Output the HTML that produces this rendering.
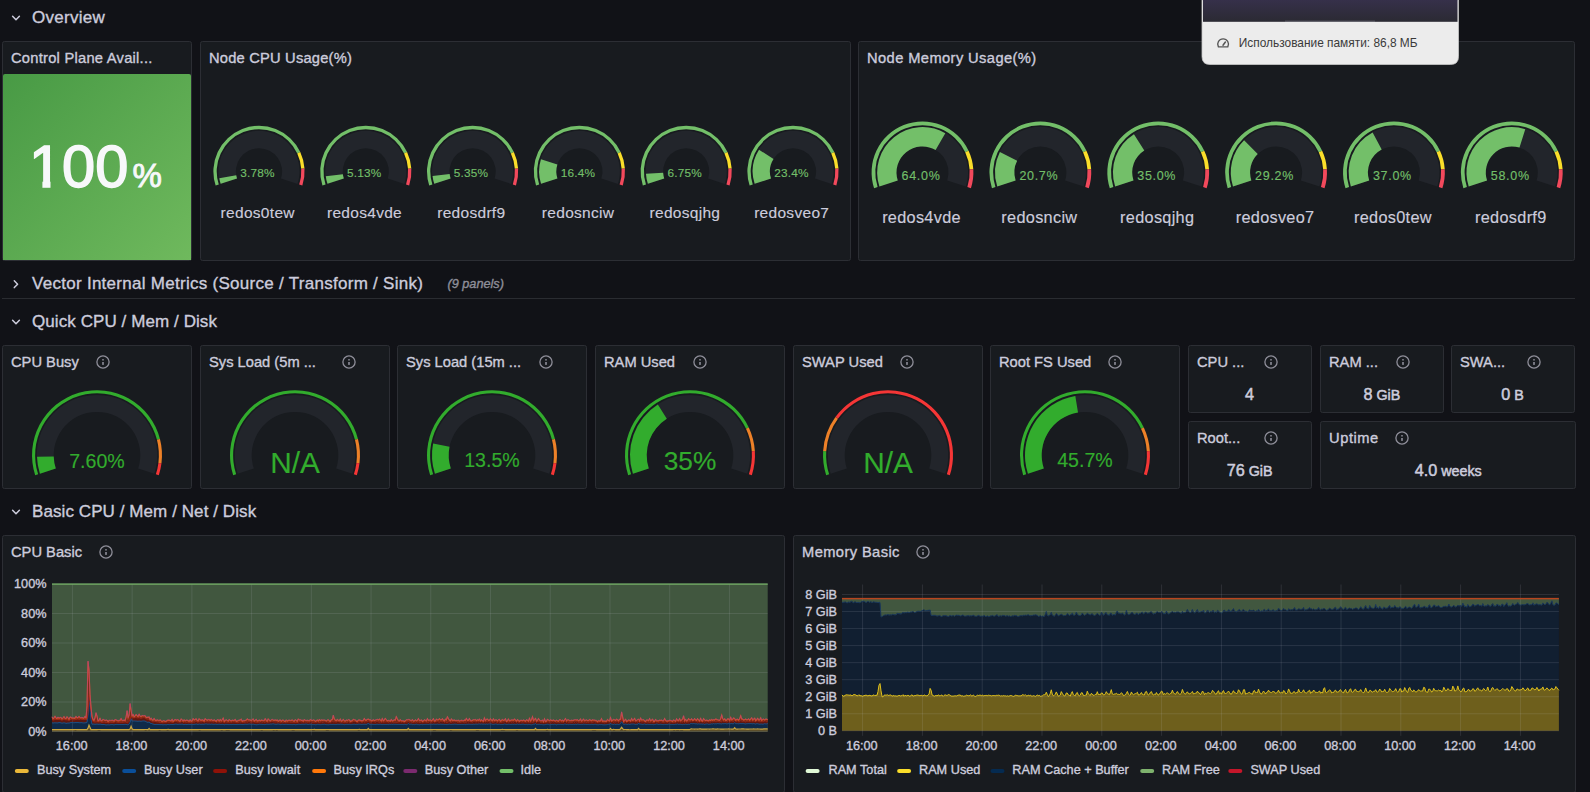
<!DOCTYPE html>
<html><head><meta charset="utf-8"><style>
html,body{margin:0;padding:0;width:1590px;height:792px;overflow:hidden;background:#111217}
text{font-family:"Liberation Sans", sans-serif}
</style></head><body>
<svg width="1590" height="792" viewBox="0 0 1590 792" style="position:absolute;left:0;top:0"><rect width="1590" height="792" fill="#111217"/><path d="M12.6 16.2 L16 19.8 L19.4 16.2" fill="none" stroke="#ccccdc" stroke-width="1.5" stroke-linecap="round" stroke-linejoin="round"/><text x="32.00" y="23.00" text-anchor="start" style="font-size:17px;fill:#ccccdc;stroke:#ccccdc;stroke-width:0.35px;letter-spacing:0.28px" >Overview</text><rect x="2.50" y="41.50" width="189.00" height="219.00" rx="2" fill="#181b1f" stroke="#2c2e34" stroke-width="1"/><defs><linearGradient id="gst" gradientUnits="userSpaceOnUse" x1="3" y1="74" x2="191" y2="260"><stop offset="0" stop-color="#489a45"/><stop offset="1" stop-color="#6fb95d"/></linearGradient></defs><path d="M3 76 Q3 74 5 74 L189 74 Q191 74 191 76 L191 260 L3 260 Z" fill="url(#gst)"/><text x="11.00" y="63.00" text-anchor="start" style="font-size:14.7px;fill:#ccccdc;stroke:#ccccdc;stroke-width:0.35px;letter-spacing:0.25px" >Control Plane Avail...</text><text x="29.00" y="187.30" text-anchor="start" style="font-size:59.5px;fill:#f7f8fa;stroke:#f7f8fa;stroke-width:1.6px" >100</text><rect x="30" y="180.8" width="12.4" height="9" fill="url(#gst)"/><rect x="50.5" y="180.8" width="11" height="9" fill="url(#gst)"/><text x="132.50" y="187.30" text-anchor="start" style="font-size:33px;fill:#f7f8fa;stroke:#f7f8fa;stroke-width:0.9px" >%</text><rect x="200.50" y="41.50" width="650.00" height="219.00" rx="2" fill="#181b1f" stroke="#2c2e34" stroke-width="1"/><text x="209.00" y="63.00" text-anchor="start" style="font-size:14.7px;fill:#ccccdc;stroke:#ccccdc;stroke-width:0.35px;letter-spacing:0.2px" >Node CPU Usage(%)</text><path d="M220.39 183.95 A40.60 40.60 0 1 1 297.61 183.95 L280.97 178.54 A23.10 23.10 0 1 0 237.03 178.54Z" fill="#22252b"/><path d="M220.67 183.85 A40.30 40.30 0 0 1 219.29 178.28 L236.24 175.35 A23.10 23.10 0 0 0 237.03 178.54Z" fill="#73bf69"/><path d="M215.63 185.49 A45.60 45.60 0 0 1 300.26 151.98 L297.27 153.39 A42.30 42.30 0 0 0 218.77 184.47Z" fill="#73bf69"/><path d="M300.26 151.98 A45.60 45.60 0 0 1 304.51 168.54 L301.22 168.74 A42.30 42.30 0 0 0 297.27 153.39Z" fill="#fade2a"/><path d="M304.51 168.54 A45.60 45.60 0 0 1 302.37 185.49 L299.23 184.47 A42.30 42.30 0 0 0 301.22 168.74Z" fill="#f2495c"/><text x="257.50" y="176.70" text-anchor="middle" style="font-size:11.8px;fill:#73bf69;stroke:#73bf69;stroke-width:0.15px;letter-spacing:0.2px" >3.78%</text><text x="257.70" y="217.50" text-anchor="middle" style="font-size:15.5px;fill:#ccccdc;stroke:#ccccdc;stroke-width:0.15px;letter-spacing:0.3px" >redos0tew</text><path d="M327.19 183.95 A40.60 40.60 0 1 1 404.41 183.95 L387.77 178.54 A23.10 23.10 0 1 0 343.83 178.54Z" fill="#22252b"/><path d="M327.47 183.85 A40.30 40.30 0 0 1 325.79 176.25 L342.87 174.18 A23.10 23.10 0 0 0 343.83 178.54Z" fill="#73bf69"/><path d="M322.43 185.49 A45.60 45.60 0 0 1 407.06 151.98 L404.07 153.39 A42.30 42.30 0 0 0 325.57 184.47Z" fill="#73bf69"/><path d="M407.06 151.98 A45.60 45.60 0 0 1 411.31 168.54 L408.02 168.74 A42.30 42.30 0 0 0 404.07 153.39Z" fill="#fade2a"/><path d="M411.31 168.54 A45.60 45.60 0 0 1 409.17 185.49 L406.03 184.47 A42.30 42.30 0 0 0 408.02 168.74Z" fill="#f2495c"/><text x="364.30" y="176.70" text-anchor="middle" style="font-size:11.8px;fill:#73bf69;stroke:#73bf69;stroke-width:0.15px;letter-spacing:0.2px" >5.13%</text><text x="364.50" y="217.50" text-anchor="middle" style="font-size:15.5px;fill:#ccccdc;stroke:#ccccdc;stroke-width:0.15px;letter-spacing:0.3px" >redos4vde</text><path d="M433.99 183.95 A40.60 40.60 0 1 1 511.21 183.95 L494.57 178.54 A23.10 23.10 0 1 0 450.63 178.54Z" fill="#22252b"/><path d="M434.27 183.85 A40.30 40.30 0 0 1 432.55 175.92 L449.65 173.99 A23.10 23.10 0 0 0 450.63 178.54Z" fill="#73bf69"/><path d="M429.23 185.49 A45.60 45.60 0 0 1 513.86 151.98 L510.87 153.39 A42.30 42.30 0 0 0 432.37 184.47Z" fill="#73bf69"/><path d="M513.86 151.98 A45.60 45.60 0 0 1 518.11 168.54 L514.82 168.74 A42.30 42.30 0 0 0 510.87 153.39Z" fill="#fade2a"/><path d="M518.11 168.54 A45.60 45.60 0 0 1 515.97 185.49 L512.83 184.47 A42.30 42.30 0 0 0 514.82 168.74Z" fill="#f2495c"/><text x="471.10" y="176.70" text-anchor="middle" style="font-size:11.8px;fill:#73bf69;stroke:#73bf69;stroke-width:0.15px;letter-spacing:0.2px" >5.35%</text><text x="471.30" y="217.50" text-anchor="middle" style="font-size:15.5px;fill:#ccccdc;stroke:#ccccdc;stroke-width:0.15px;letter-spacing:0.3px" >redosdrf9</text><path d="M540.79 183.95 A40.60 40.60 0 1 1 618.01 183.95 L601.37 178.54 A23.10 23.10 0 1 0 557.43 178.54Z" fill="#22252b"/><path d="M541.07 183.85 A40.30 40.30 0 0 1 540.95 159.33 L557.36 164.48 A23.10 23.10 0 0 0 557.43 178.54Z" fill="#73bf69"/><path d="M536.03 185.49 A45.60 45.60 0 0 1 620.66 151.98 L617.67 153.39 A42.30 42.30 0 0 0 539.17 184.47Z" fill="#73bf69"/><path d="M620.66 151.98 A45.60 45.60 0 0 1 624.91 168.54 L621.62 168.74 A42.30 42.30 0 0 0 617.67 153.39Z" fill="#fade2a"/><path d="M624.91 168.54 A45.60 45.60 0 0 1 622.77 185.49 L619.63 184.47 A42.30 42.30 0 0 0 621.62 168.74Z" fill="#f2495c"/><text x="577.90" y="176.70" text-anchor="middle" style="font-size:11.8px;fill:#73bf69;stroke:#73bf69;stroke-width:0.15px;letter-spacing:0.2px" >16.4%</text><text x="578.10" y="217.50" text-anchor="middle" style="font-size:15.5px;fill:#ccccdc;stroke:#ccccdc;stroke-width:0.15px;letter-spacing:0.3px" >redosnciw</text><path d="M647.59 183.95 A40.60 40.60 0 1 1 724.81 183.95 L708.17 178.54 A23.10 23.10 0 1 0 664.23 178.54Z" fill="#22252b"/><path d="M647.87 183.85 A40.30 40.30 0 0 1 645.97 173.80 L663.14 172.78 A23.10 23.10 0 0 0 664.23 178.54Z" fill="#73bf69"/><path d="M642.83 185.49 A45.60 45.60 0 0 1 727.46 151.98 L724.47 153.39 A42.30 42.30 0 0 0 645.97 184.47Z" fill="#73bf69"/><path d="M727.46 151.98 A45.60 45.60 0 0 1 731.71 168.54 L728.42 168.74 A42.30 42.30 0 0 0 724.47 153.39Z" fill="#fade2a"/><path d="M731.71 168.54 A45.60 45.60 0 0 1 729.57 185.49 L726.43 184.47 A42.30 42.30 0 0 0 728.42 168.74Z" fill="#f2495c"/><text x="684.70" y="176.70" text-anchor="middle" style="font-size:11.8px;fill:#73bf69;stroke:#73bf69;stroke-width:0.15px;letter-spacing:0.2px" >6.75%</text><text x="684.90" y="217.50" text-anchor="middle" style="font-size:15.5px;fill:#ccccdc;stroke:#ccccdc;stroke-width:0.15px;letter-spacing:0.3px" >redosqjhg</text><path d="M754.39 183.95 A40.60 40.60 0 1 1 831.61 183.95 L814.97 178.54 A23.10 23.10 0 1 0 771.03 178.54Z" fill="#22252b"/><path d="M754.67 183.85 A40.30 40.30 0 0 1 759.03 149.72 L773.53 158.97 A23.10 23.10 0 0 0 771.03 178.54Z" fill="#73bf69"/><path d="M749.63 185.49 A45.60 45.60 0 0 1 834.26 151.98 L831.27 153.39 A42.30 42.30 0 0 0 752.77 184.47Z" fill="#73bf69"/><path d="M834.26 151.98 A45.60 45.60 0 0 1 838.51 168.54 L835.22 168.74 A42.30 42.30 0 0 0 831.27 153.39Z" fill="#fade2a"/><path d="M838.51 168.54 A45.60 45.60 0 0 1 836.37 185.49 L833.23 184.47 A42.30 42.30 0 0 0 835.22 168.74Z" fill="#f2495c"/><text x="791.50" y="176.70" text-anchor="middle" style="font-size:11.8px;fill:#73bf69;stroke:#73bf69;stroke-width:0.15px;letter-spacing:0.2px" >23.4%</text><text x="791.70" y="217.50" text-anchor="middle" style="font-size:15.5px;fill:#ccccdc;stroke:#ccccdc;stroke-width:0.15px;letter-spacing:0.3px" >redosveo7</text><rect x="858.50" y="41.50" width="716.00" height="219.00" rx="2" fill="#181b1f" stroke="#2c2e34" stroke-width="1"/><text x="867.00" y="63.00" text-anchor="start" style="font-size:14.7px;fill:#ccccdc;stroke:#ccccdc;stroke-width:0.35px;letter-spacing:0.4px" >Node Memory Usage(%)</text><path d="M879.13 186.49 A45.60 45.60 0 1 1 965.87 186.49 L947.23 180.43 A26.00 26.00 0 1 0 897.77 180.43Z" fill="#22252b"/><path d="M879.42 186.40 A45.30 45.30 0 0 1 945.31 133.26 L935.59 149.94 A26.00 26.00 0 0 0 897.77 180.43Z" fill="#73bf69"/><path d="M874.09 188.13 A50.90 50.90 0 0 1 968.56 150.73 L965.21 152.30 A47.20 47.20 0 0 0 877.61 186.99Z" fill="#73bf69"/><path d="M968.56 150.73 A50.90 50.90 0 0 1 973.30 169.20 L969.61 169.44 A47.20 47.20 0 0 0 965.21 152.30Z" fill="#fade2a"/><path d="M973.30 169.20 A50.90 50.90 0 0 1 970.91 188.13 L967.39 186.99 A47.20 47.20 0 0 0 969.61 169.44Z" fill="#f2495c"/><text x="921.00" y="179.50" text-anchor="middle" style="font-size:12.5px;fill:#73bf69;stroke:#73bf69;stroke-width:0.15px;letter-spacing:0.7px" >64.0%</text><text x="921.50" y="223.20" text-anchor="middle" style="font-size:16.3px;fill:#ccccdc;stroke:#ccccdc;stroke-width:0.15px;letter-spacing:0.3px" >redos4vde</text><path d="M996.99 186.49 A45.60 45.60 0 1 1 1083.73 186.49 L1065.09 180.43 A26.00 26.00 0 1 0 1015.63 180.43Z" fill="#22252b"/><path d="M997.28 186.40 A45.30 45.30 0 0 1 999.89 152.04 L1017.13 160.71 A26.00 26.00 0 0 0 1015.63 180.43Z" fill="#73bf69"/><path d="M991.95 188.13 A50.90 50.90 0 0 1 1086.42 150.73 L1083.07 152.30 A47.20 47.20 0 0 0 995.47 186.99Z" fill="#73bf69"/><path d="M1086.42 150.73 A50.90 50.90 0 0 1 1091.16 169.20 L1087.47 169.44 A47.20 47.20 0 0 0 1083.07 152.30Z" fill="#fade2a"/><path d="M1091.16 169.20 A50.90 50.90 0 0 1 1088.77 188.13 L1085.25 186.99 A47.20 47.20 0 0 0 1087.47 169.44Z" fill="#f2495c"/><text x="1038.86" y="179.50" text-anchor="middle" style="font-size:12.5px;fill:#73bf69;stroke:#73bf69;stroke-width:0.15px;letter-spacing:0.7px" >20.7%</text><text x="1039.36" y="223.20" text-anchor="middle" style="font-size:16.3px;fill:#ccccdc;stroke:#ccccdc;stroke-width:0.15px;letter-spacing:0.3px" >redosnciw</text><path d="M1114.85 186.49 A45.60 45.60 0 1 1 1201.59 186.49 L1182.95 180.43 A26.00 26.00 0 1 0 1133.49 180.43Z" fill="#22252b"/><path d="M1115.14 186.40 A45.30 45.30 0 0 1 1133.95 134.15 L1144.29 150.45 A26.00 26.00 0 0 0 1133.49 180.43Z" fill="#73bf69"/><path d="M1109.81 188.13 A50.90 50.90 0 0 1 1204.28 150.73 L1200.93 152.30 A47.20 47.20 0 0 0 1113.33 186.99Z" fill="#73bf69"/><path d="M1204.28 150.73 A50.90 50.90 0 0 1 1209.02 169.20 L1205.33 169.44 A47.20 47.20 0 0 0 1200.93 152.30Z" fill="#fade2a"/><path d="M1209.02 169.20 A50.90 50.90 0 0 1 1206.63 188.13 L1203.11 186.99 A47.20 47.20 0 0 0 1205.33 169.44Z" fill="#f2495c"/><text x="1156.72" y="179.50" text-anchor="middle" style="font-size:12.5px;fill:#73bf69;stroke:#73bf69;stroke-width:0.15px;letter-spacing:0.7px" >35.0%</text><text x="1157.22" y="223.20" text-anchor="middle" style="font-size:16.3px;fill:#ccccdc;stroke:#ccccdc;stroke-width:0.15px;letter-spacing:0.3px" >redosqjhg</text><path d="M1232.71 186.49 A45.60 45.60 0 1 1 1319.45 186.49 L1300.81 180.43 A26.00 26.00 0 1 0 1251.35 180.43Z" fill="#22252b"/><path d="M1233.00 186.40 A45.30 45.30 0 0 1 1244.09 140.33 L1257.72 153.99 A26.00 26.00 0 0 0 1251.35 180.43Z" fill="#73bf69"/><path d="M1227.67 188.13 A50.90 50.90 0 0 1 1322.14 150.73 L1318.79 152.30 A47.20 47.20 0 0 0 1231.19 186.99Z" fill="#73bf69"/><path d="M1322.14 150.73 A50.90 50.90 0 0 1 1326.88 169.20 L1323.19 169.44 A47.20 47.20 0 0 0 1318.79 152.30Z" fill="#fade2a"/><path d="M1326.88 169.20 A50.90 50.90 0 0 1 1324.49 188.13 L1320.97 186.99 A47.20 47.20 0 0 0 1323.19 169.44Z" fill="#f2495c"/><text x="1274.58" y="179.50" text-anchor="middle" style="font-size:12.5px;fill:#73bf69;stroke:#73bf69;stroke-width:0.15px;letter-spacing:0.7px" >29.2%</text><text x="1275.08" y="223.20" text-anchor="middle" style="font-size:16.3px;fill:#ccccdc;stroke:#ccccdc;stroke-width:0.15px;letter-spacing:0.3px" >redosveo7</text><path d="M1350.57 186.49 A45.60 45.60 0 1 1 1437.31 186.49 L1418.67 180.43 A26.00 26.00 0 1 0 1369.21 180.43Z" fill="#22252b"/><path d="M1350.86 186.40 A45.30 45.30 0 0 1 1372.62 132.43 L1381.70 149.46 A26.00 26.00 0 0 0 1369.21 180.43Z" fill="#73bf69"/><path d="M1345.53 188.13 A50.90 50.90 0 0 1 1440.00 150.73 L1436.65 152.30 A47.20 47.20 0 0 0 1349.05 186.99Z" fill="#73bf69"/><path d="M1440.00 150.73 A50.90 50.90 0 0 1 1444.74 169.20 L1441.05 169.44 A47.20 47.20 0 0 0 1436.65 152.30Z" fill="#fade2a"/><path d="M1444.74 169.20 A50.90 50.90 0 0 1 1442.35 188.13 L1438.83 186.99 A47.20 47.20 0 0 0 1441.05 169.44Z" fill="#f2495c"/><text x="1392.44" y="179.50" text-anchor="middle" style="font-size:12.5px;fill:#73bf69;stroke:#73bf69;stroke-width:0.15px;letter-spacing:0.7px" >37.0%</text><text x="1392.94" y="223.20" text-anchor="middle" style="font-size:16.3px;fill:#ccccdc;stroke:#ccccdc;stroke-width:0.15px;letter-spacing:0.3px" >redos0tew</text><path d="M1468.43 186.49 A45.60 45.60 0 1 1 1555.17 186.49 L1536.53 180.43 A26.00 26.00 0 1 0 1487.07 180.43Z" fill="#22252b"/><path d="M1468.72 186.40 A45.30 45.30 0 0 1 1525.26 129.14 L1519.52 147.57 A26.00 26.00 0 0 0 1487.07 180.43Z" fill="#73bf69"/><path d="M1463.39 188.13 A50.90 50.90 0 0 1 1557.86 150.73 L1554.51 152.30 A47.20 47.20 0 0 0 1466.91 186.99Z" fill="#73bf69"/><path d="M1557.86 150.73 A50.90 50.90 0 0 1 1562.60 169.20 L1558.91 169.44 A47.20 47.20 0 0 0 1554.51 152.30Z" fill="#fade2a"/><path d="M1562.60 169.20 A50.90 50.90 0 0 1 1560.21 188.13 L1556.69 186.99 A47.20 47.20 0 0 0 1558.91 169.44Z" fill="#f2495c"/><text x="1510.30" y="179.50" text-anchor="middle" style="font-size:12.5px;fill:#73bf69;stroke:#73bf69;stroke-width:0.15px;letter-spacing:0.7px" >58.0%</text><text x="1510.80" y="223.20" text-anchor="middle" style="font-size:16.3px;fill:#ccccdc;stroke:#ccccdc;stroke-width:0.15px;letter-spacing:0.3px" >redosdrf9</text><path d="M14.3 280.8 L17.6 284.2 L14.3 287.6" fill="none" stroke="#ccccdc" stroke-width="1.5" stroke-linecap="round" stroke-linejoin="round"/><text x="32.00" y="289.00" text-anchor="start" style="font-size:17px;fill:#ccccdc;stroke:#ccccdc;stroke-width:0.35px;letter-spacing:0.28px" >Vector Internal Metrics (Source / Transform / Sink)</text><text x="447.50" y="288.20" text-anchor="start" style="font-size:12.7px;fill:#8e8e99;stroke:#8e8e99;stroke-width:0.35px;font-style:italic" >(9 panels)</text><rect x="2" y="298" width="1573" height="1" fill="#2a2c31"/><path d="M12.6 320.2 L16 323.8 L19.4 320.2" fill="none" stroke="#ccccdc" stroke-width="1.5" stroke-linecap="round" stroke-linejoin="round"/><text x="32.00" y="327.00" text-anchor="start" style="font-size:17px;fill:#ccccdc;stroke:#ccccdc;stroke-width:0.35px;letter-spacing:0.08px" >Quick CPU / Mem / Disk</text><rect x="2.50" y="345.50" width="189.00" height="143.00" rx="2" fill="#181b1f" stroke="#2c2e34" stroke-width="1"/><text x="11.00" y="367.00" text-anchor="start" style="font-size:14.7px;fill:#ccccdc;stroke:#ccccdc;stroke-width:0.35px" >CPU Busy</text><circle cx="103" cy="362" r="6.1" fill="none" stroke="#8e8e99" stroke-width="1.3"/><rect x="102.2" y="362" width="1.6" height="2.9" fill="#8e8e99"/><rect x="102.2" y="359.1" width="1.6" height="1.4" fill="#8e8e99"/><path d="M39.65 473.83 A60.30 60.30 0 1 1 154.35 473.83 L138.18 468.58 A43.30 43.30 0 1 0 55.82 468.58Z" fill="#22252b"/><path d="M39.94 473.74 A60.00 60.00 0 0 1 37.02 456.86 L53.72 456.40 A43.30 43.30 0 0 0 55.82 468.58Z" fill="#32ac2d"/><path d="M35.18 475.29 A65.00 65.00 0 1 1 159.96 439.04 L156.96 439.81 A61.90 61.90 0 1 0 38.13 474.33Z" fill="#32ac2d"/><path d="M159.96 439.04 A65.00 65.00 0 0 1 161.49 463.35 L158.41 462.96 A61.90 61.90 0 0 0 156.96 439.81Z" fill="#ed8128"/><path d="M161.49 463.35 A65.00 65.00 0 0 1 158.82 475.29 L155.87 474.33 A61.90 61.90 0 0 0 158.41 462.96Z" fill="#f53636"/><text x="97.00" y="468.20" text-anchor="middle" style="font-size:19.6px;fill:#32ac2d;stroke:#32ac2d;stroke-width:0.15px" >7.60%</text><rect x="200.50" y="345.50" width="189.00" height="143.00" rx="2" fill="#181b1f" stroke="#2c2e34" stroke-width="1"/><text x="209.00" y="367.00" text-anchor="start" style="font-size:14.7px;fill:#ccccdc;stroke:#ccccdc;stroke-width:0.35px" >Sys Load (5m ...</text><circle cx="349" cy="362" r="6.1" fill="none" stroke="#8e8e99" stroke-width="1.3"/><rect x="348.2" y="362" width="1.6" height="2.9" fill="#8e8e99"/><rect x="348.2" y="359.1" width="1.6" height="1.4" fill="#8e8e99"/><path d="M237.65 473.83 A60.30 60.30 0 1 1 352.35 473.83 L336.18 468.58 A43.30 43.30 0 1 0 253.82 468.58Z" fill="#22252b"/><path d="M233.18 475.29 A65.00 65.00 0 1 1 357.96 439.04 L354.96 439.81 A61.90 61.90 0 1 0 236.13 474.33Z" fill="#32ac2d"/><path d="M357.96 439.04 A65.00 65.00 0 0 1 359.49 463.35 L356.41 462.96 A61.90 61.90 0 0 0 354.96 439.81Z" fill="#ed8128"/><path d="M359.49 463.35 A65.00 65.00 0 0 1 356.82 475.29 L353.87 474.33 A61.90 61.90 0 0 0 356.41 462.96Z" fill="#f53636"/><text x="295.00" y="472.80" text-anchor="middle" style="font-size:29.8px;fill:#32ac2d;stroke:#32ac2d;stroke-width:0.15px" >N/A</text><rect x="397.50" y="345.50" width="189.00" height="143.00" rx="2" fill="#181b1f" stroke="#2c2e34" stroke-width="1"/><text x="406.00" y="367.00" text-anchor="start" style="font-size:14.7px;fill:#ccccdc;stroke:#ccccdc;stroke-width:0.35px" >Sys Load (15m ...</text><circle cx="546" cy="362" r="6.1" fill="none" stroke="#8e8e99" stroke-width="1.3"/><rect x="545.2" y="362" width="1.6" height="2.9" fill="#8e8e99"/><rect x="545.2" y="359.1" width="1.6" height="1.4" fill="#8e8e99"/><path d="M434.65 473.83 A60.30 60.30 0 1 1 549.35 473.83 L533.18 468.58 A43.30 43.30 0 1 0 450.82 468.58Z" fill="#22252b"/><path d="M434.94 473.74 A60.00 60.00 0 0 1 433.13 443.59 L449.52 446.82 A43.30 43.30 0 0 0 450.82 468.58Z" fill="#32ac2d"/><path d="M430.18 475.29 A65.00 65.00 0 1 1 554.96 439.04 L551.96 439.81 A61.90 61.90 0 1 0 433.13 474.33Z" fill="#32ac2d"/><path d="M554.96 439.04 A65.00 65.00 0 0 1 556.49 463.35 L553.41 462.96 A61.90 61.90 0 0 0 551.96 439.81Z" fill="#ed8128"/><path d="M556.49 463.35 A65.00 65.00 0 0 1 553.82 475.29 L550.87 474.33 A61.90 61.90 0 0 0 553.41 462.96Z" fill="#f53636"/><text x="492.00" y="466.80" text-anchor="middle" style="font-size:19.6px;fill:#32ac2d;stroke:#32ac2d;stroke-width:0.15px" >13.5%</text><rect x="595.50" y="345.50" width="189.00" height="143.00" rx="2" fill="#181b1f" stroke="#2c2e34" stroke-width="1"/><text x="604.00" y="367.00" text-anchor="start" style="font-size:14.7px;fill:#ccccdc;stroke:#ccccdc;stroke-width:0.35px" >RAM Used</text><circle cx="700" cy="362" r="6.1" fill="none" stroke="#8e8e99" stroke-width="1.3"/><rect x="699.2" y="362" width="1.6" height="2.9" fill="#8e8e99"/><rect x="699.2" y="359.1" width="1.6" height="1.4" fill="#8e8e99"/><path d="M632.65 473.83 A60.30 60.30 0 1 1 747.35 473.83 L731.18 468.58 A43.30 43.30 0 1 0 648.82 468.58Z" fill="#22252b"/><path d="M632.94 473.74 A60.00 60.00 0 0 1 657.85 404.54 L666.80 418.64 A43.30 43.30 0 0 0 648.82 468.58Z" fill="#32ac2d"/><path d="M628.18 475.29 A65.00 65.00 0 0 1 748.81 427.52 L746.01 428.84 A61.90 61.90 0 0 0 631.13 474.33Z" fill="#32ac2d"/><path d="M748.81 427.52 A65.00 65.00 0 0 1 754.87 451.12 L751.78 451.31 A61.90 61.90 0 0 0 746.01 428.84Z" fill="#ed8128"/><path d="M754.87 451.12 A65.00 65.00 0 0 1 751.82 475.29 L748.87 474.33 A61.90 61.90 0 0 0 751.78 451.31Z" fill="#f53636"/><text x="690.00" y="470.20" text-anchor="middle" style="font-size:26.3px;fill:#32ac2d;stroke:#32ac2d;stroke-width:0.15px" >35%</text><rect x="793.50" y="345.50" width="189.00" height="143.00" rx="2" fill="#181b1f" stroke="#2c2e34" stroke-width="1"/><text x="802.00" y="367.00" text-anchor="start" style="font-size:14.7px;fill:#ccccdc;stroke:#ccccdc;stroke-width:0.35px" >SWAP Used</text><circle cx="907" cy="362" r="6.1" fill="none" stroke="#8e8e99" stroke-width="1.3"/><rect x="906.2" y="362" width="1.6" height="2.9" fill="#8e8e99"/><rect x="906.2" y="359.1" width="1.6" height="1.4" fill="#8e8e99"/><path d="M830.65 473.83 A60.30 60.30 0 1 1 945.35 473.83 L929.18 468.58 A43.30 43.30 0 1 0 846.82 468.58Z" fill="#22252b"/><path d="M826.18 475.29 A65.00 65.00 0 0 1 823.13 451.12 L826.22 451.31 A61.90 61.90 0 0 0 829.13 474.33Z" fill="#32ac2d"/><path d="M823.13 451.12 A65.00 65.00 0 0 1 835.41 416.99 L837.92 418.82 A61.90 61.90 0 0 0 826.22 451.31Z" fill="#ed8128"/><path d="M835.41 416.99 A65.00 65.00 0 0 1 949.82 475.29 L946.87 474.33 A61.90 61.90 0 0 0 837.92 418.82Z" fill="#f53636"/><text x="888.00" y="472.80" text-anchor="middle" style="font-size:29.8px;fill:#32ac2d;stroke:#32ac2d;stroke-width:0.15px" >N/A</text><rect x="990.50" y="345.50" width="189.00" height="143.00" rx="2" fill="#181b1f" stroke="#2c2e34" stroke-width="1"/><text x="999.00" y="367.00" text-anchor="start" style="font-size:14.7px;fill:#ccccdc;stroke:#ccccdc;stroke-width:0.35px" >Root FS Used</text><circle cx="1115" cy="362" r="6.1" fill="none" stroke="#8e8e99" stroke-width="1.3"/><rect x="1114.2" y="362" width="1.6" height="2.9" fill="#8e8e99"/><rect x="1114.2" y="359.1" width="1.6" height="1.4" fill="#8e8e99"/><path d="M1027.65 473.83 A60.30 60.30 0 1 1 1142.35 473.83 L1126.18 468.58 A43.30 43.30 0 1 0 1043.82 468.58Z" fill="#22252b"/><path d="M1027.94 473.74 A60.00 60.00 0 0 1 1075.32 395.99 L1078.01 412.47 A43.30 43.30 0 0 0 1043.82 468.58Z" fill="#32ac2d"/><path d="M1023.18 475.29 A65.00 65.00 0 0 1 1143.81 427.52 L1141.01 428.84 A61.90 61.90 0 0 0 1026.13 474.33Z" fill="#32ac2d"/><path d="M1143.81 427.52 A65.00 65.00 0 0 1 1149.87 451.12 L1146.78 451.31 A61.90 61.90 0 0 0 1141.01 428.84Z" fill="#ed8128"/><path d="M1149.87 451.12 A65.00 65.00 0 0 1 1146.82 475.29 L1143.87 474.33 A61.90 61.90 0 0 0 1146.78 451.31Z" fill="#f53636"/><text x="1085.00" y="467.10" text-anchor="middle" style="font-size:19.6px;fill:#32ac2d;stroke:#32ac2d;stroke-width:0.15px" >45.7%</text><rect x="1188.50" y="345.50" width="123.00" height="67.00" rx="2" fill="#181b1f" stroke="#2c2e34" stroke-width="1"/><text x="1197.00" y="367.00" text-anchor="start" style="font-size:14.7px;fill:#ccccdc;stroke:#ccccdc;stroke-width:0.35px" >CPU ...</text><circle cx="1271" cy="362" r="6.1" fill="none" stroke="#8e8e99" stroke-width="1.3"/><rect x="1270.2" y="362" width="1.6" height="2.9" fill="#8e8e99"/><rect x="1270.2" y="359.1" width="1.6" height="1.4" fill="#8e8e99"/><text x="1249.6" y="400.2" text-anchor="middle" style="font-size:16.2px;fill:#ccccdc;stroke:#ccccdc;stroke-width:0.5px">4</text><rect x="1320.50" y="345.50" width="123.00" height="67.00" rx="2" fill="#181b1f" stroke="#2c2e34" stroke-width="1"/><text x="1329.00" y="367.00" text-anchor="start" style="font-size:14.7px;fill:#ccccdc;stroke:#ccccdc;stroke-width:0.35px" >RAM ...</text><circle cx="1403" cy="362" r="6.1" fill="none" stroke="#8e8e99" stroke-width="1.3"/><rect x="1402.2" y="362" width="1.6" height="2.9" fill="#8e8e99"/><rect x="1402.2" y="359.1" width="1.6" height="1.4" fill="#8e8e99"/><text x="1381.9" y="400.2" text-anchor="middle" style="font-size:16.2px;fill:#ccccdc;stroke:#ccccdc;stroke-width:0.5px">8<tspan style="font-size:14.3px"> GiB</tspan></text><rect x="1451.50" y="345.50" width="123.00" height="67.00" rx="2" fill="#181b1f" stroke="#2c2e34" stroke-width="1"/><text x="1460.00" y="367.00" text-anchor="start" style="font-size:14.7px;fill:#ccccdc;stroke:#ccccdc;stroke-width:0.35px" >SWA...</text><circle cx="1534" cy="362" r="6.1" fill="none" stroke="#8e8e99" stroke-width="1.3"/><rect x="1533.2" y="362" width="1.6" height="2.9" fill="#8e8e99"/><rect x="1533.2" y="359.1" width="1.6" height="1.4" fill="#8e8e99"/><text x="1512.6" y="400.2" text-anchor="middle" style="font-size:16.2px;fill:#ccccdc;stroke:#ccccdc;stroke-width:0.5px">0<tspan style="font-size:14.3px"> B</tspan></text><rect x="1188.50" y="421.50" width="123.00" height="67.00" rx="2" fill="#181b1f" stroke="#2c2e34" stroke-width="1"/><text x="1197.00" y="443.00" text-anchor="start" style="font-size:14.7px;fill:#ccccdc;stroke:#ccccdc;stroke-width:0.35px" >Root...</text><circle cx="1271" cy="438" r="6.1" fill="none" stroke="#8e8e99" stroke-width="1.3"/><rect x="1270.2" y="438" width="1.6" height="2.9" fill="#8e8e99"/><rect x="1270.2" y="435.1" width="1.6" height="1.4" fill="#8e8e99"/><text x="1249.6" y="476.2" text-anchor="middle" style="font-size:16.2px;fill:#ccccdc;stroke:#ccccdc;stroke-width:0.5px">76<tspan style="font-size:14.3px"> GiB</tspan></text><rect x="1320.50" y="421.50" width="255.00" height="67.00" rx="2" fill="#181b1f" stroke="#2c2e34" stroke-width="1"/><text x="1329.00" y="443.00" text-anchor="start" style="font-size:14.7px;fill:#ccccdc;stroke:#ccccdc;stroke-width:0.35px;letter-spacing:0.55px" >Uptime</text><circle cx="1402" cy="438" r="6.1" fill="none" stroke="#8e8e99" stroke-width="1.3"/><rect x="1401.2" y="438" width="1.6" height="2.9" fill="#8e8e99"/><rect x="1401.2" y="435.1" width="1.6" height="1.4" fill="#8e8e99"/><text x="1448.2" y="476.2" text-anchor="middle" style="font-size:16.2px;fill:#ccccdc;stroke:#ccccdc;stroke-width:0.5px">4.0<tspan style="font-size:14.3px"> weeks</tspan></text><path d="M12.6 510.2 L16 513.8 L19.4 510.2" fill="none" stroke="#ccccdc" stroke-width="1.5" stroke-linecap="round" stroke-linejoin="round"/><text x="32.00" y="517.00" text-anchor="start" style="font-size:17px;fill:#ccccdc;stroke:#ccccdc;stroke-width:0.35px;letter-spacing:0.08px" >Basic CPU / Mem / Net / Disk</text><rect x="2.50" y="535.50" width="782.00" height="257.00" rx="2" fill="#181b1f" stroke="#2c2e34" stroke-width="1"/><text x="11.00" y="557.00" text-anchor="start" style="font-size:14.7px;fill:#ccccdc;stroke:#ccccdc;stroke-width:0.35px" >CPU Basic</text><circle cx="106" cy="552" r="6.1" fill="none" stroke="#8e8e99" stroke-width="1.3"/><rect x="105.2" y="552" width="1.6" height="2.9" fill="#8e8e99"/><rect x="105.2" y="549.1" width="1.6" height="1.4" fill="#8e8e99"/><rect x="793.50" y="535.50" width="782.00" height="257.00" rx="2" fill="#181b1f" stroke="#2c2e34" stroke-width="1"/><text x="802.00" y="557.00" text-anchor="start" style="font-size:14.7px;fill:#ccccdc;stroke:#ccccdc;stroke-width:0.35px;letter-spacing:0.4px" >Memory Basic</text><circle cx="923" cy="552" r="6.1" fill="none" stroke="#8e8e99" stroke-width="1.3"/><rect x="922.2" y="552" width="1.6" height="2.9" fill="#8e8e99"/><rect x="922.2" y="549.1" width="1.6" height="1.4" fill="#8e8e99"/><rect x="52.0" y="584.0" width="715.7" height="147.5" fill="#41573f"/><path d="M52.0 717.02 L53.0 718.92 L54.0 718.07 L55.0 716.41 L56.0 718.16 L57.0 718.68 L58.0 717.31 L59.0 718.41 L60.0 717.70 L61.0 717.59 L62.0 719.16 L63.0 718.15 L64.0 716.83 L65.0 718.58 L66.0 718.89 L67.0 716.91 L68.0 718.03 L69.0 719.56 L70.0 717.26 L71.0 717.37 L72.0 718.33 L73.0 718.07 L74.0 718.36 L75.0 718.34 L76.0 716.61 L77.0 717.98 L78.0 717.96 L79.0 716.47 L80.0 718.00 L81.0 718.02 L82.0 717.64 L83.0 718.29 L84.0 718.26 L85.0 716.59 L86.0 718.09 L87.0 706.01 L88.0 661.43 L89.0 669.97 L90.0 694.62 L91.0 707.42 L92.0 716.55 L93.0 719.70 L94.0 720.60 L95.0 718.04 L96.0 712.97 L97.0 716.28 L98.0 721.04 L99.0 720.72 L100.0 718.45 L101.0 720.94 L102.0 720.89 L103.0 719.52 L104.1 720.11 L105.1 720.64 L106.1 720.21 L107.1 720.38 L108.1 721.74 L109.1 720.48 L110.1 720.68 L111.1 720.70 L112.1 720.37 L113.1 720.69 L114.1 721.31 L115.1 719.67 L116.1 720.12 L117.1 720.53 L118.1 721.07 L119.1 720.46 L120.1 720.61 L121.1 718.74 L122.1 720.66 L123.1 720.80 L124.1 720.20 L125.1 720.92 L126.1 717.10 L127.1 710.90 L128.1 718.03 L129.1 715.44 L130.1 703.71 L131.1 710.75 L132.1 716.16 L133.1 714.69 L134.1 717.05 L135.1 716.13 L136.1 714.61 L137.1 715.96 L138.1 716.81 L139.1 714.36 L140.1 716.44 L141.1 716.83 L142.1 715.74 L143.1 716.02 L144.1 716.06 L145.1 715.86 L146.1 717.77 L147.1 717.31 L148.1 717.60 L149.1 717.00 L150.1 719.62 L151.1 718.27 L152.1 720.05 L153.1 720.38 L154.1 718.62 L155.1 720.32 L156.1 720.81 L157.1 719.91 L158.1 720.45 L159.1 720.82 L160.1 720.06 L161.1 720.83 L162.1 721.83 L163.1 720.83 L164.1 720.94 L165.1 721.55 L166.1 721.49 L167.1 720.60 L168.1 720.35 L169.1 720.33 L170.1 720.70 L171.1 721.14 L172.1 719.48 L173.1 721.61 L174.1 720.61 L175.1 719.55 L176.1 720.44 L177.1 719.93 L178.1 719.87 L179.1 721.12 L180.1 721.36 L181.1 719.18 L182.1 719.93 L183.1 721.34 L184.1 719.97 L185.1 721.11 L186.1 720.36 L187.1 720.40 L188.1 720.72 L189.1 721.54 L190.1 719.92 L191.1 721.40 L192.1 721.14 L193.1 718.77 L194.1 720.19 L195.1 719.85 L196.1 718.86 L197.1 720.51 L198.1 721.06 L199.1 718.92 L200.1 720.13 L201.1 720.40 L202.1 720.00 L203.1 720.12 L204.1 721.33 L205.1 718.88 L206.2 719.85 L207.2 720.40 L208.2 719.79 L209.2 719.73 L210.2 720.59 L211.2 719.48 L212.2 720.47 L213.2 720.67 L214.2 719.96 L215.2 720.73 L216.2 721.40 L217.2 719.95 L218.2 719.81 L219.2 721.23 L220.2 719.57 L221.2 721.12 L222.2 719.93 L223.2 718.23 L224.2 721.59 L225.2 720.57 L226.2 719.87 L227.2 720.66 L228.2 721.28 L229.2 719.65 L230.2 720.57 L231.2 721.03 L232.2 720.28 L233.2 720.58 L234.2 720.62 L235.2 719.48 L236.2 721.42 L237.2 721.33 L238.2 720.71 L239.2 720.33 L240.2 720.25 L241.2 719.29 L242.2 721.47 L243.2 720.73 L244.2 720.99 L245.2 720.58 L246.2 720.26 L247.2 719.03 L248.2 719.97 L249.2 720.07 L250.2 720.12 L251.2 720.86 L252.2 719.95 L253.2 719.06 L254.2 721.18 L255.2 720.58 L256.2 719.37 L257.2 721.05 L258.2 720.92 L259.2 720.13 L260.2 721.07 L261.2 720.16 L262.2 720.42 L263.2 720.69 L264.2 720.67 L265.2 718.85 L266.2 720.51 L267.2 721.32 L268.2 719.12 L269.2 720.34 L270.2 721.08 L271.2 720.13 L272.2 719.61 L273.2 720.17 L274.2 720.44 L275.2 720.03 L276.2 720.65 L277.2 720.08 L278.2 721.35 L279.2 720.75 L280.2 719.99 L281.2 721.42 L282.2 720.53 L283.2 720.18 L284.2 721.29 L285.2 721.63 L286.2 720.08 L287.2 721.24 L288.2 720.62 L289.2 720.32 L290.2 720.71 L291.2 720.67 L292.2 719.89 L293.2 721.07 L294.2 721.36 L295.2 719.88 L296.2 720.43 L297.2 721.56 L298.2 719.27 L299.2 720.15 L300.2 719.83 L301.2 720.51 L302.2 720.38 L303.2 721.29 L304.2 719.70 L305.2 720.50 L306.2 720.73 L307.2 720.42 L308.3 720.81 L309.3 720.88 L310.3 719.65 L311.3 720.17 L312.3 720.66 L313.3 720.09 L314.3 720.40 L315.3 721.35 L316.3 721.02 L317.3 720.13 L318.3 721.20 L319.3 719.68 L320.3 720.68 L321.3 720.06 L322.3 720.33 L323.3 720.30 L324.3 720.22 L325.3 720.53 L326.3 721.15 L327.3 720.31 L328.3 719.86 L329.3 721.08 L330.3 721.61 L331.3 719.84 L332.3 719.79 L333.3 715.49 L334.3 719.38 L335.3 720.28 L336.3 720.78 L337.3 719.50 L338.3 720.47 L339.3 720.76 L340.3 719.22 L341.3 721.33 L342.3 720.92 L343.3 719.48 L344.3 720.99 L345.3 721.22 L346.3 720.25 L347.3 720.86 L348.3 719.73 L349.3 719.92 L350.3 721.51 L351.3 721.10 L352.3 720.87 L353.3 719.53 L354.3 719.98 L355.3 720.02 L356.3 721.25 L357.3 721.54 L358.3 720.27 L359.3 720.17 L360.3 720.41 L361.3 720.86 L362.3 720.92 L363.3 720.53 L364.3 718.63 L365.3 720.20 L366.3 720.46 L367.3 719.45 L368.3 719.23 L369.3 720.01 L370.3 719.91 L371.3 720.80 L372.3 720.62 L373.3 719.86 L374.3 720.62 L375.3 720.29 L376.3 719.91 L377.3 719.57 L378.3 720.16 L379.3 719.32 L380.3 720.05 L381.3 721.00 L382.3 718.67 L383.3 720.87 L384.3 720.14 L385.3 718.45 L386.3 719.85 L387.3 720.99 L388.3 720.63 L389.3 720.67 L390.3 721.31 L391.3 719.53 L392.3 721.13 L393.3 720.66 L394.3 719.95 L395.3 720.30 L396.3 716.74 L397.3 718.92 L398.3 720.72 L399.3 721.17 L400.3 719.77 L401.3 721.00 L402.3 720.99 L403.3 721.03 L404.3 721.60 L405.3 721.04 L406.3 719.96 L407.3 720.05 L408.3 719.75 L409.3 719.74 L410.4 720.53 L411.4 720.85 L412.4 719.64 L413.4 721.23 L414.4 721.00 L415.4 720.09 L416.4 720.89 L417.4 720.48 L418.4 718.75 L419.4 720.74 L420.4 720.70 L421.4 720.03 L422.4 721.58 L423.4 721.09 L424.4 719.88 L425.4 720.54 L426.4 721.08 L427.4 718.73 L428.4 720.57 L429.4 720.29 L430.4 720.09 L431.4 721.01 L432.4 720.02 L433.4 718.78 L434.4 721.18 L435.4 721.01 L436.4 719.36 L437.4 720.05 L438.4 719.92 L439.4 718.86 L440.4 719.85 L441.4 719.93 L442.4 718.84 L443.4 720.53 L444.4 721.00 L445.4 719.24 L446.4 719.98 L447.4 716.91 L448.4 718.76 L449.4 720.42 L450.4 720.96 L451.4 719.08 L452.4 720.57 L453.4 720.41 L454.4 720.15 L455.4 720.71 L456.4 720.59 L457.4 720.70 L458.4 720.43 L459.4 721.17 L460.4 720.85 L461.4 720.43 L462.4 720.73 L463.4 720.94 L464.4 720.15 L465.4 720.53 L466.4 718.47 L467.4 720.46 L468.4 720.50 L469.4 718.66 L470.4 720.73 L471.4 721.02 L472.4 720.45 L473.4 719.93 L474.4 720.02 L475.4 719.71 L476.4 720.67 L477.4 719.83 L478.4 720.53 L479.4 719.19 L480.4 721.02 L481.4 719.79 L482.4 720.77 L483.4 721.42 L484.4 718.01 L485.4 720.76 L486.4 719.57 L487.4 719.23 L488.4 720.44 L489.4 720.51 L490.4 718.95 L491.4 720.11 L492.4 720.85 L493.4 718.98 L494.4 720.72 L495.4 720.14 L496.4 720.04 L497.4 721.00 L498.4 719.87 L499.4 719.47 L500.4 721.25 L501.4 720.70 L502.4 719.61 L503.4 720.45 L504.4 720.24 L505.4 718.84 L506.4 721.55 L507.4 720.99 L508.4 719.19 L509.4 720.87 L510.4 720.68 L511.4 720.12 L512.5 720.12 L513.5 720.31 L514.5 719.19 L515.5 720.46 L516.5 721.19 L517.5 719.71 L518.5 720.70 L519.5 721.30 L520.5 720.56 L521.5 720.46 L522.5 720.79 L523.5 720.18 L524.5 720.70 L525.5 721.32 L526.5 719.92 L527.5 720.42 L528.5 721.27 L529.5 718.32 L530.5 721.09 L531.5 719.86 L532.5 716.75 L533.5 720.70 L534.5 719.87 L535.5 718.46 L536.5 721.16 L537.5 720.63 L538.5 718.67 L539.5 720.19 L540.5 720.96 L541.5 720.85 L542.5 720.27 L543.5 721.93 L544.5 718.94 L545.5 721.63 L546.5 721.31 L547.5 719.35 L548.5 720.39 L549.5 720.84 L550.5 719.97 L551.5 720.55 L552.5 720.63 L553.5 720.22 L554.5 720.83 L555.5 721.15 L556.5 720.35 L557.5 720.91 L558.5 721.25 L559.5 719.92 L560.5 720.02 L561.5 720.95 L562.5 720.24 L563.5 721.44 L564.5 720.02 L565.5 718.61 L566.5 721.09 L567.5 720.06 L568.5 719.97 L569.5 720.71 L570.5 720.80 L571.5 720.39 L572.5 720.67 L573.5 720.37 L574.5 720.04 L575.5 719.97 L576.5 720.09 L577.5 719.89 L578.5 720.86 L579.5 720.49 L580.5 719.16 L581.5 721.30 L582.5 720.64 L583.5 719.21 L584.5 720.75 L585.5 720.47 L586.5 720.01 L587.5 720.71 L588.5 720.74 L589.5 719.78 L590.5 720.28 L591.5 720.76 L592.5 719.94 L593.5 720.26 L594.5 720.26 L595.5 720.60 L596.5 720.77 L597.5 721.66 L598.5 720.75 L599.5 721.07 L600.5 721.01 L601.5 718.79 L602.5 721.38 L603.5 721.13 L604.5 721.27 L605.5 721.35 L606.5 721.44 L607.5 719.59 L608.5 720.58 L609.5 721.01 L610.5 717.66 L611.5 721.17 L612.5 720.50 L613.5 719.68 L614.6 720.03 L615.6 720.49 L616.6 719.28 L617.6 720.04 L618.6 720.86 L619.6 719.37 L620.6 719.49 L621.6 712.15 L622.6 716.97 L623.6 721.72 L624.6 720.69 L625.6 719.41 L626.6 721.50 L627.6 720.99 L628.6 720.03 L629.6 720.42 L630.6 721.21 L631.6 718.63 L632.6 720.56 L633.6 720.07 L634.6 718.48 L635.6 720.94 L636.6 720.75 L637.6 719.62 L638.6 719.34 L639.6 721.07 L640.6 718.24 L641.6 720.14 L642.6 720.01 L643.6 719.82 L644.6 721.14 L645.6 721.54 L646.6 720.16 L647.6 720.26 L648.6 720.78 L649.6 718.70 L650.6 720.92 L651.6 720.22 L652.6 719.35 L653.6 721.54 L654.6 721.40 L655.6 719.47 L656.6 720.98 L657.6 720.82 L658.6 720.90 L659.6 720.35 L660.6 720.48 L661.6 720.23 L662.6 720.97 L663.6 720.87 L664.6 718.62 L665.6 720.70 L666.6 721.16 L667.6 721.09 L668.6 720.85 L669.6 720.45 L670.6 720.60 L671.6 721.04 L672.6 721.48 L673.6 720.11 L674.6 720.84 L675.6 721.45 L676.6 718.94 L677.6 720.58 L678.6 720.79 L679.6 718.74 L680.6 720.90 L681.6 720.12 L682.6 719.29 L683.6 715.99 L684.6 720.92 L685.6 719.46 L686.6 721.08 L687.6 720.63 L688.6 718.81 L689.6 719.96 L690.6 720.01 L691.6 718.87 L692.6 720.47 L693.6 720.25 L694.6 718.72 L695.6 719.97 L696.6 720.50 L697.6 718.82 L698.6 720.02 L699.6 721.09 L700.6 718.38 L701.6 720.73 L702.6 721.18 L703.6 718.74 L704.6 720.10 L705.6 720.66 L706.6 720.29 L707.6 720.62 L708.6 720.98 L709.6 720.01 L710.6 720.51 L711.6 719.63 L712.6 720.31 L713.6 719.86 L714.6 720.23 L715.6 719.19 L716.7 719.62 L717.7 719.97 L718.7 720.32 L719.7 720.50 L720.7 718.88 L721.7 715.11 L722.7 718.70 L723.7 720.11 L724.7 718.97 L725.7 720.64 L726.7 720.30 L727.7 718.92 L728.7 719.21 L729.7 720.53 L730.7 717.46 L731.7 719.99 L732.7 719.50 L733.7 718.04 L734.7 718.86 L735.7 720.41 L736.7 719.61 L737.7 719.35 L738.7 720.35 L739.7 718.85 L740.7 715.82 L741.7 719.17 L742.7 719.24 L743.7 720.16 L744.7 719.81 L745.7 719.26 L746.7 719.89 L747.7 719.79 L748.7 718.94 L749.7 720.35 L750.7 719.20 L751.7 717.95 L752.7 720.09 L753.7 719.47 L754.7 718.24 L755.7 720.77 L756.7 719.81 L757.7 718.37 L758.7 720.22 L759.7 720.10 L760.7 718.00 L761.7 720.58 L762.7 719.59 L763.7 719.27 L764.7 720.07 L765.7 719.29 L766.7 719.41 L767.7 719.75 L767.7 721.10 L766.7 721.69 L765.7 721.06 L764.7 721.05 L763.7 721.54 L762.7 721.64 L761.7 721.61 L760.7 721.66 L759.7 721.69 L758.7 721.43 L757.7 720.96 L756.7 721.04 L755.7 721.55 L754.7 721.56 L753.7 721.02 L752.7 721.67 L751.7 721.08 L750.7 721.32 L749.7 721.63 L748.7 721.21 L747.7 721.29 L746.7 721.25 L745.7 721.98 L744.7 721.40 L743.7 721.20 L742.7 721.40 L741.7 721.12 L740.7 720.60 L739.7 721.66 L738.7 721.87 L737.7 720.92 L736.7 721.34 L735.7 721.40 L734.7 720.28 L733.7 721.47 L732.7 721.20 L731.7 720.96 L730.7 721.14 L729.7 721.74 L728.7 720.61 L727.7 721.63 L726.7 721.87 L725.7 721.50 L724.7 721.43 L723.7 721.52 L722.7 720.72 L721.7 721.69 L720.7 721.39 L719.7 721.82 L718.7 721.50 L717.7 721.27 L716.7 721.61 L715.6 721.63 L714.6 721.41 L713.6 721.40 L712.6 721.73 L711.6 721.26 L710.6 722.06 L709.6 721.85 L708.6 721.91 L707.6 721.62 L706.6 721.81 L705.6 721.73 L704.6 722.17 L703.6 721.71 L702.6 722.08 L701.6 721.60 L700.6 721.55 L699.6 721.94 L698.6 721.67 L697.6 722.00 L696.6 721.43 L695.6 721.18 L694.6 720.87 L693.6 720.99 L692.6 721.49 L691.6 720.95 L690.6 721.60 L689.6 721.64 L688.6 721.86 L687.6 722.04 L686.6 722.22 L685.6 721.63 L684.6 722.45 L683.6 721.58 L682.6 722.10 L681.6 721.87 L680.6 722.20 L679.6 721.74 L678.6 721.84 L677.6 721.78 L676.6 721.74 L675.6 722.27 L674.6 722.30 L673.6 722.61 L672.6 722.44 L671.6 722.07 L670.6 722.14 L669.6 721.33 L668.6 721.61 L667.6 722.61 L666.6 722.10 L665.6 721.86 L664.6 722.13 L663.6 722.62 L662.6 722.28 L661.6 722.03 L660.6 721.78 L659.6 721.97 L658.6 722.36 L657.6 722.05 L656.6 722.01 L655.6 721.62 L654.6 722.45 L653.6 722.61 L652.6 722.41 L651.6 721.92 L650.6 722.22 L649.6 722.42 L648.6 722.27 L647.6 722.02 L646.6 722.19 L645.6 722.29 L644.6 721.97 L643.6 721.80 L642.6 721.94 L641.6 721.93 L640.6 721.48 L639.6 722.24 L638.6 720.86 L637.6 722.32 L636.6 721.56 L635.6 722.03 L634.6 721.49 L633.6 721.64 L632.6 721.69 L631.6 721.72 L630.6 721.96 L629.6 721.95 L628.6 721.37 L627.6 721.85 L626.6 722.41 L625.6 721.52 L624.6 722.31 L623.6 722.47 L622.6 720.30 L621.6 719.70 L620.6 721.45 L619.6 721.44 L618.6 722.55 L617.6 721.65 L616.6 721.66 L615.6 722.06 L614.6 721.85 L613.5 722.41 L612.5 721.60 L611.5 722.12 L610.5 720.39 L609.5 722.06 L608.5 721.85 L607.5 721.79 L606.5 722.51 L605.5 722.59 L604.5 722.85 L603.5 722.56 L602.5 722.50 L601.5 721.98 L600.5 721.88 L599.5 722.09 L598.5 722.37 L597.5 722.49 L596.5 722.09 L595.5 722.07 L594.5 721.67 L593.5 721.95 L592.5 722.34 L591.5 722.23 L590.5 721.91 L589.5 721.93 L588.5 722.45 L587.5 722.09 L586.5 722.62 L585.5 722.02 L584.5 722.16 L583.5 721.99 L582.5 722.35 L581.5 722.42 L580.5 722.38 L579.5 722.14 L578.5 722.32 L577.5 721.75 L576.5 722.06 L575.5 721.56 L574.5 722.46 L573.5 721.61 L572.5 722.34 L571.5 722.42 L570.5 722.29 L569.5 722.23 L568.5 722.72 L567.5 721.78 L566.5 722.58 L565.5 721.30 L564.5 721.24 L563.5 722.45 L562.5 722.16 L561.5 722.19 L560.5 721.91 L559.5 722.39 L558.5 722.15 L557.5 722.14 L556.5 722.30 L555.5 722.04 L554.5 721.76 L553.5 722.04 L552.5 721.65 L551.5 722.09 L550.5 721.62 L549.5 722.44 L548.5 721.96 L547.5 721.93 L546.5 722.36 L545.5 722.63 L544.5 722.35 L543.5 722.67 L542.5 722.21 L541.5 722.58 L540.5 722.49 L539.5 721.64 L538.5 721.64 L537.5 721.53 L536.5 722.62 L535.5 720.75 L534.5 721.68 L533.5 722.24 L532.5 722.44 L531.5 722.00 L530.5 722.46 L529.5 722.29 L528.5 722.32 L527.5 721.97 L526.5 722.19 L525.5 722.24 L524.5 722.11 L523.5 722.09 L522.5 722.08 L521.5 722.13 L520.5 721.75 L519.5 722.37 L518.5 722.15 L517.5 721.58 L516.5 722.43 L515.5 721.62 L514.5 721.38 L513.5 722.25 L512.5 721.77 L511.4 722.24 L510.4 721.67 L509.4 721.98 L508.4 722.17 L507.4 721.93 L506.4 722.29 L505.4 721.44 L504.4 721.85 L503.4 722.00 L502.4 722.05 L501.4 722.43 L500.4 722.43 L499.4 722.29 L498.4 721.69 L497.4 722.65 L496.4 722.07 L495.4 721.48 L494.4 721.90 L493.4 722.23 L492.4 722.34 L491.4 721.67 L490.4 721.30 L489.4 722.13 L488.4 721.48 L487.4 721.74 L486.4 721.46 L485.4 722.03 L484.4 721.42 L483.4 722.24 L482.4 721.95 L481.4 721.59 L480.4 721.77 L479.4 721.24 L478.4 722.01 L477.4 721.52 L476.4 721.85 L475.4 721.80 L474.4 721.52 L473.4 721.54 L472.4 722.23 L471.4 721.86 L470.4 721.72 L469.4 721.39 L468.4 722.01 L467.4 721.55 L466.4 722.16 L465.4 722.24 L464.4 722.17 L463.4 722.22 L462.4 721.90 L461.4 722.09 L460.4 722.55 L459.4 722.51 L458.4 722.20 L457.4 722.42 L456.4 721.34 L455.4 721.84 L454.4 721.73 L453.4 721.95 L452.4 721.72 L451.4 722.32 L450.4 722.31 L449.4 721.70 L448.4 721.85 L447.4 722.54 L446.4 722.50 L445.4 721.80 L444.4 722.42 L443.4 721.27 L442.4 721.84 L441.4 721.46 L440.4 721.30 L439.4 722.38 L438.4 721.89 L437.4 721.23 L436.4 721.65 L435.4 721.77 L434.4 722.15 L433.4 721.57 L432.4 722.02 L431.4 722.00 L430.4 722.25 L429.4 721.62 L428.4 722.43 L427.4 722.31 L426.4 722.26 L425.4 722.01 L424.4 721.96 L423.4 722.23 L422.4 722.65 L421.4 721.87 L420.4 722.52 L419.4 722.43 L418.4 721.88 L417.4 722.22 L416.4 721.84 L415.4 722.27 L414.4 722.01 L413.4 722.54 L412.4 722.44 L411.4 722.17 L410.4 721.84 L409.3 722.28 L408.3 721.29 L407.3 721.98 L406.3 722.02 L405.3 721.93 L404.3 722.38 L403.3 722.33 L402.3 721.79 L401.3 722.36 L400.3 721.72 L399.3 721.97 L398.3 722.11 L397.3 722.38 L396.3 722.35 L395.3 722.25 L394.3 722.31 L393.3 722.18 L392.3 722.23 L391.3 721.95 L390.3 722.10 L389.3 721.89 L388.3 722.62 L387.3 721.73 L386.3 721.89 L385.3 721.97 L384.3 722.11 L383.3 722.19 L382.3 721.95 L381.3 722.59 L380.3 721.82 L379.3 722.36 L378.3 721.94 L377.3 721.46 L376.3 721.56 L375.3 722.34 L374.3 721.76 L373.3 721.61 L372.3 721.52 L371.3 722.36 L370.3 721.99 L369.3 721.95 L368.3 720.60 L367.3 721.85 L366.3 721.76 L365.3 721.88 L364.3 722.20 L363.3 721.56 L362.3 722.34 L361.3 722.17 L360.3 721.52 L359.3 721.80 L358.3 722.14 L357.3 722.54 L356.3 722.11 L355.3 721.45 L354.3 721.60 L353.3 721.39 L352.3 722.05 L351.3 722.09 L350.3 722.54 L349.3 722.29 L348.3 721.60 L347.3 722.51 L346.3 722.29 L345.3 722.38 L344.3 722.53 L343.3 722.28 L342.3 722.03 L341.3 722.39 L340.3 722.04 L339.3 721.83 L338.3 721.48 L337.3 721.64 L336.3 722.06 L335.3 721.97 L334.3 721.78 L333.3 721.96 L332.3 721.61 L331.3 721.89 L330.3 722.35 L329.3 722.64 L328.3 722.70 L327.3 722.00 L326.3 722.07 L325.3 721.87 L324.3 721.82 L323.3 722.14 L322.3 722.40 L321.3 721.87 L320.3 722.29 L319.3 722.62 L318.3 722.34 L317.3 721.84 L316.3 722.36 L315.3 722.21 L314.3 722.33 L313.3 722.17 L312.3 722.36 L311.3 721.53 L310.3 721.63 L309.3 722.24 L308.3 721.99 L307.2 722.32 L306.2 721.87 L305.2 722.20 L304.2 721.82 L303.2 722.25 L302.2 721.75 L301.2 722.04 L300.2 721.60 L299.2 721.58 L298.2 722.30 L297.2 722.55 L296.2 722.42 L295.2 722.50 L294.2 722.45 L293.2 722.31 L292.2 722.37 L291.2 722.29 L290.2 722.35 L289.2 722.01 L288.2 722.16 L287.2 722.34 L286.2 722.19 L285.2 722.45 L284.2 722.05 L283.2 722.41 L282.2 722.04 L281.2 722.26 L280.2 722.72 L279.2 721.76 L278.2 722.09 L277.2 722.25 L276.2 721.66 L275.2 722.09 L274.2 721.83 L273.2 721.81 L272.2 721.30 L271.2 721.44 L270.2 721.84 L269.2 721.94 L268.2 722.13 L267.2 722.32 L266.2 721.74 L265.2 722.17 L264.2 722.42 L263.2 721.63 L262.2 722.41 L261.2 721.84 L260.2 721.97 L259.2 722.20 L258.2 722.24 L257.2 722.65 L256.2 722.17 L255.2 722.16 L254.2 722.00 L253.2 721.75 L252.2 721.98 L251.2 722.15 L250.2 722.13 L249.2 721.41 L248.2 721.72 L247.2 722.26 L246.2 721.86 L245.2 722.21 L244.2 722.34 L243.2 722.22 L242.2 722.36 L241.2 721.91 L240.2 722.20 L239.2 721.88 L238.2 722.62 L237.2 722.63 L236.2 722.41 L235.2 722.11 L234.2 721.99 L233.2 721.93 L232.2 722.00 L231.2 722.51 L230.2 721.96 L229.2 722.32 L228.2 722.16 L227.2 722.34 L226.2 722.06 L225.2 721.93 L224.2 722.54 L223.2 721.82 L222.2 721.75 L221.2 722.26 L220.2 722.28 L219.2 722.10 L218.2 721.95 L217.2 721.96 L216.2 722.23 L215.2 721.52 L214.2 721.73 L213.2 722.12 L212.2 721.70 L211.2 721.79 L210.2 721.62 L209.2 721.87 L208.2 721.70 L207.2 721.75 L206.2 721.64 L205.1 721.29 L204.1 722.28 L203.1 721.34 L202.1 721.73 L201.1 721.96 L200.1 721.76 L199.1 721.75 L198.1 721.99 L197.1 722.12 L196.1 721.11 L195.1 721.84 L194.1 722.34 L193.1 721.88 L192.1 722.54 L191.1 722.16 L190.1 722.55 L189.1 722.37 L188.1 722.33 L187.1 722.02 L186.1 722.29 L185.1 722.02 L184.1 721.93 L183.1 722.42 L182.1 721.41 L181.1 721.84 L180.1 722.27 L179.1 722.05 L178.1 721.91 L177.1 721.89 L176.1 721.36 L175.1 721.25 L174.1 721.63 L173.1 722.45 L172.1 722.33 L171.1 722.08 L170.1 721.77 L169.1 722.35 L168.1 722.06 L167.1 721.90 L166.1 722.57 L165.1 722.55 L164.1 722.39 L163.1 722.82 L162.1 722.62 L161.1 722.49 L160.1 722.68 L159.1 722.42 L158.1 721.82 L157.1 722.10 L156.1 721.58 L155.1 721.59 L154.1 721.61 L153.1 721.77 L152.1 721.72 L151.1 720.40 L150.1 720.57 L149.1 719.13 L148.1 719.24 L147.1 719.13 L146.1 718.81 L145.1 717.71 L144.1 717.72 L143.1 717.65 L142.1 718.07 L141.1 718.27 L140.1 718.13 L139.1 717.68 L138.1 717.91 L137.1 717.93 L136.1 717.68 L135.1 717.58 L134.1 717.91 L133.1 717.71 L132.1 717.73 L131.1 716.21 L130.1 719.45 L129.1 721.36 L128.1 722.51 L127.1 722.84 L126.1 721.99 L125.1 722.12 L124.1 722.06 L123.1 722.37 L122.1 722.44 L121.1 722.20 L120.1 722.40 L119.1 722.31 L118.1 722.65 L117.1 722.05 L116.1 722.11 L115.1 721.69 L114.1 722.41 L113.1 722.57 L112.1 722.34 L111.1 722.57 L110.1 722.01 L109.1 723.01 L108.1 722.77 L107.1 722.21 L106.1 722.50 L105.1 722.62 L104.1 721.80 L103.0 722.42 L102.0 722.36 L101.0 722.27 L100.0 721.69 L99.0 722.14 L98.0 721.79 L97.0 722.03 L96.0 721.75 L95.0 722.20 L94.0 721.75 L93.0 721.70 L92.0 718.55 L91.0 709.95 L90.0 702.46 L89.0 695.27 L88.0 713.11 L87.0 719.27 L86.0 719.52 L85.0 719.21 L84.0 719.72 L83.0 719.41 L82.0 719.61 L81.0 718.94 L80.0 719.11 L79.0 719.61 L78.0 718.86 L77.0 719.21 L76.0 719.53 L75.0 719.55 L74.0 720.01 L73.0 719.59 L72.0 719.10 L71.0 719.21 L70.0 719.53 L69.0 720.30 L68.0 720.01 L67.0 719.83 L66.0 719.81 L65.0 719.66 L64.0 719.53 L63.0 719.65 L62.0 720.27 L61.0 719.84 L60.0 719.39 L59.0 719.57 L58.0 719.41 L57.0 719.46 L56.0 719.35 L55.0 719.48 L54.0 719.89 L53.0 720.11 L52.0 719.43Z" fill="#7a2a1a"/><path d="M52.0 719.43 L53.0 720.11 L54.0 719.89 L55.0 719.48 L56.0 719.35 L57.0 719.46 L58.0 719.41 L59.0 719.57 L60.0 719.39 L61.0 719.84 L62.0 720.27 L63.0 719.65 L64.0 719.53 L65.0 719.66 L66.0 719.81 L67.0 719.83 L68.0 720.01 L69.0 720.30 L70.0 719.53 L71.0 719.21 L72.0 719.10 L73.0 719.59 L74.0 720.01 L75.0 719.55 L76.0 719.53 L77.0 719.21 L78.0 718.86 L79.0 719.61 L80.0 719.11 L81.0 718.94 L82.0 719.61 L83.0 719.41 L84.0 719.72 L85.0 719.21 L86.0 719.52 L87.0 719.27 L88.0 713.11 L89.0 695.27 L90.0 702.46 L91.0 709.95 L92.0 718.55 L93.0 721.70 L94.0 721.75 L95.0 722.20 L96.0 721.75 L97.0 722.03 L98.0 721.79 L99.0 722.14 L100.0 721.69 L101.0 722.27 L102.0 722.36 L103.0 722.42 L104.1 721.80 L105.1 722.62 L106.1 722.50 L107.1 722.21 L108.1 722.77 L109.1 723.01 L110.1 722.01 L111.1 722.57 L112.1 722.34 L113.1 722.57 L114.1 722.41 L115.1 721.69 L116.1 722.11 L117.1 722.05 L118.1 722.65 L119.1 722.31 L120.1 722.40 L121.1 722.20 L122.1 722.44 L123.1 722.37 L124.1 722.06 L125.1 722.12 L126.1 721.99 L127.1 722.84 L128.1 722.51 L129.1 721.36 L130.1 719.45 L131.1 716.21 L132.1 717.73 L133.1 717.71 L134.1 717.91 L135.1 717.58 L136.1 717.68 L137.1 717.93 L138.1 717.91 L139.1 717.68 L140.1 718.13 L141.1 718.27 L142.1 718.07 L143.1 717.65 L144.1 717.72 L145.1 717.71 L146.1 718.81 L147.1 719.13 L148.1 719.24 L149.1 719.13 L150.1 720.57 L151.1 720.40 L152.1 721.72 L153.1 721.77 L154.1 721.61 L155.1 721.59 L156.1 721.58 L157.1 722.10 L158.1 721.82 L159.1 722.42 L160.1 722.68 L161.1 722.49 L162.1 722.62 L163.1 722.82 L164.1 722.39 L165.1 722.55 L166.1 722.57 L167.1 721.90 L168.1 722.06 L169.1 722.35 L170.1 721.77 L171.1 722.08 L172.1 722.33 L173.1 722.45 L174.1 721.63 L175.1 721.25 L176.1 721.36 L177.1 721.89 L178.1 721.91 L179.1 722.05 L180.1 722.27 L181.1 721.84 L182.1 721.41 L183.1 722.42 L184.1 721.93 L185.1 722.02 L186.1 722.29 L187.1 722.02 L188.1 722.33 L189.1 722.37 L190.1 722.55 L191.1 722.16 L192.1 722.54 L193.1 721.88 L194.1 722.34 L195.1 721.84 L196.1 721.11 L197.1 722.12 L198.1 721.99 L199.1 721.75 L200.1 721.76 L201.1 721.96 L202.1 721.73 L203.1 721.34 L204.1 722.28 L205.1 721.29 L206.2 721.64 L207.2 721.75 L208.2 721.70 L209.2 721.87 L210.2 721.62 L211.2 721.79 L212.2 721.70 L213.2 722.12 L214.2 721.73 L215.2 721.52 L216.2 722.23 L217.2 721.96 L218.2 721.95 L219.2 722.10 L220.2 722.28 L221.2 722.26 L222.2 721.75 L223.2 721.82 L224.2 722.54 L225.2 721.93 L226.2 722.06 L227.2 722.34 L228.2 722.16 L229.2 722.32 L230.2 721.96 L231.2 722.51 L232.2 722.00 L233.2 721.93 L234.2 721.99 L235.2 722.11 L236.2 722.41 L237.2 722.63 L238.2 722.62 L239.2 721.88 L240.2 722.20 L241.2 721.91 L242.2 722.36 L243.2 722.22 L244.2 722.34 L245.2 722.21 L246.2 721.86 L247.2 722.26 L248.2 721.72 L249.2 721.41 L250.2 722.13 L251.2 722.15 L252.2 721.98 L253.2 721.75 L254.2 722.00 L255.2 722.16 L256.2 722.17 L257.2 722.65 L258.2 722.24 L259.2 722.20 L260.2 721.97 L261.2 721.84 L262.2 722.41 L263.2 721.63 L264.2 722.42 L265.2 722.17 L266.2 721.74 L267.2 722.32 L268.2 722.13 L269.2 721.94 L270.2 721.84 L271.2 721.44 L272.2 721.30 L273.2 721.81 L274.2 721.83 L275.2 722.09 L276.2 721.66 L277.2 722.25 L278.2 722.09 L279.2 721.76 L280.2 722.72 L281.2 722.26 L282.2 722.04 L283.2 722.41 L284.2 722.05 L285.2 722.45 L286.2 722.19 L287.2 722.34 L288.2 722.16 L289.2 722.01 L290.2 722.35 L291.2 722.29 L292.2 722.37 L293.2 722.31 L294.2 722.45 L295.2 722.50 L296.2 722.42 L297.2 722.55 L298.2 722.30 L299.2 721.58 L300.2 721.60 L301.2 722.04 L302.2 721.75 L303.2 722.25 L304.2 721.82 L305.2 722.20 L306.2 721.87 L307.2 722.32 L308.3 721.99 L309.3 722.24 L310.3 721.63 L311.3 721.53 L312.3 722.36 L313.3 722.17 L314.3 722.33 L315.3 722.21 L316.3 722.36 L317.3 721.84 L318.3 722.34 L319.3 722.62 L320.3 722.29 L321.3 721.87 L322.3 722.40 L323.3 722.14 L324.3 721.82 L325.3 721.87 L326.3 722.07 L327.3 722.00 L328.3 722.70 L329.3 722.64 L330.3 722.35 L331.3 721.89 L332.3 721.61 L333.3 721.96 L334.3 721.78 L335.3 721.97 L336.3 722.06 L337.3 721.64 L338.3 721.48 L339.3 721.83 L340.3 722.04 L341.3 722.39 L342.3 722.03 L343.3 722.28 L344.3 722.53 L345.3 722.38 L346.3 722.29 L347.3 722.51 L348.3 721.60 L349.3 722.29 L350.3 722.54 L351.3 722.09 L352.3 722.05 L353.3 721.39 L354.3 721.60 L355.3 721.45 L356.3 722.11 L357.3 722.54 L358.3 722.14 L359.3 721.80 L360.3 721.52 L361.3 722.17 L362.3 722.34 L363.3 721.56 L364.3 722.20 L365.3 721.88 L366.3 721.76 L367.3 721.85 L368.3 720.60 L369.3 721.95 L370.3 721.99 L371.3 722.36 L372.3 721.52 L373.3 721.61 L374.3 721.76 L375.3 722.34 L376.3 721.56 L377.3 721.46 L378.3 721.94 L379.3 722.36 L380.3 721.82 L381.3 722.59 L382.3 721.95 L383.3 722.19 L384.3 722.11 L385.3 721.97 L386.3 721.89 L387.3 721.73 L388.3 722.62 L389.3 721.89 L390.3 722.10 L391.3 721.95 L392.3 722.23 L393.3 722.18 L394.3 722.31 L395.3 722.25 L396.3 722.35 L397.3 722.38 L398.3 722.11 L399.3 721.97 L400.3 721.72 L401.3 722.36 L402.3 721.79 L403.3 722.33 L404.3 722.38 L405.3 721.93 L406.3 722.02 L407.3 721.98 L408.3 721.29 L409.3 722.28 L410.4 721.84 L411.4 722.17 L412.4 722.44 L413.4 722.54 L414.4 722.01 L415.4 722.27 L416.4 721.84 L417.4 722.22 L418.4 721.88 L419.4 722.43 L420.4 722.52 L421.4 721.87 L422.4 722.65 L423.4 722.23 L424.4 721.96 L425.4 722.01 L426.4 722.26 L427.4 722.31 L428.4 722.43 L429.4 721.62 L430.4 722.25 L431.4 722.00 L432.4 722.02 L433.4 721.57 L434.4 722.15 L435.4 721.77 L436.4 721.65 L437.4 721.23 L438.4 721.89 L439.4 722.38 L440.4 721.30 L441.4 721.46 L442.4 721.84 L443.4 721.27 L444.4 722.42 L445.4 721.80 L446.4 722.50 L447.4 722.54 L448.4 721.85 L449.4 721.70 L450.4 722.31 L451.4 722.32 L452.4 721.72 L453.4 721.95 L454.4 721.73 L455.4 721.84 L456.4 721.34 L457.4 722.42 L458.4 722.20 L459.4 722.51 L460.4 722.55 L461.4 722.09 L462.4 721.90 L463.4 722.22 L464.4 722.17 L465.4 722.24 L466.4 722.16 L467.4 721.55 L468.4 722.01 L469.4 721.39 L470.4 721.72 L471.4 721.86 L472.4 722.23 L473.4 721.54 L474.4 721.52 L475.4 721.80 L476.4 721.85 L477.4 721.52 L478.4 722.01 L479.4 721.24 L480.4 721.77 L481.4 721.59 L482.4 721.95 L483.4 722.24 L484.4 721.42 L485.4 722.03 L486.4 721.46 L487.4 721.74 L488.4 721.48 L489.4 722.13 L490.4 721.30 L491.4 721.67 L492.4 722.34 L493.4 722.23 L494.4 721.90 L495.4 721.48 L496.4 722.07 L497.4 722.65 L498.4 721.69 L499.4 722.29 L500.4 722.43 L501.4 722.43 L502.4 722.05 L503.4 722.00 L504.4 721.85 L505.4 721.44 L506.4 722.29 L507.4 721.93 L508.4 722.17 L509.4 721.98 L510.4 721.67 L511.4 722.24 L512.5 721.77 L513.5 722.25 L514.5 721.38 L515.5 721.62 L516.5 722.43 L517.5 721.58 L518.5 722.15 L519.5 722.37 L520.5 721.75 L521.5 722.13 L522.5 722.08 L523.5 722.09 L524.5 722.11 L525.5 722.24 L526.5 722.19 L527.5 721.97 L528.5 722.32 L529.5 722.29 L530.5 722.46 L531.5 722.00 L532.5 722.44 L533.5 722.24 L534.5 721.68 L535.5 720.75 L536.5 722.62 L537.5 721.53 L538.5 721.64 L539.5 721.64 L540.5 722.49 L541.5 722.58 L542.5 722.21 L543.5 722.67 L544.5 722.35 L545.5 722.63 L546.5 722.36 L547.5 721.93 L548.5 721.96 L549.5 722.44 L550.5 721.62 L551.5 722.09 L552.5 721.65 L553.5 722.04 L554.5 721.76 L555.5 722.04 L556.5 722.30 L557.5 722.14 L558.5 722.15 L559.5 722.39 L560.5 721.91 L561.5 722.19 L562.5 722.16 L563.5 722.45 L564.5 721.24 L565.5 721.30 L566.5 722.58 L567.5 721.78 L568.5 722.72 L569.5 722.23 L570.5 722.29 L571.5 722.42 L572.5 722.34 L573.5 721.61 L574.5 722.46 L575.5 721.56 L576.5 722.06 L577.5 721.75 L578.5 722.32 L579.5 722.14 L580.5 722.38 L581.5 722.42 L582.5 722.35 L583.5 721.99 L584.5 722.16 L585.5 722.02 L586.5 722.62 L587.5 722.09 L588.5 722.45 L589.5 721.93 L590.5 721.91 L591.5 722.23 L592.5 722.34 L593.5 721.95 L594.5 721.67 L595.5 722.07 L596.5 722.09 L597.5 722.49 L598.5 722.37 L599.5 722.09 L600.5 721.88 L601.5 721.98 L602.5 722.50 L603.5 722.56 L604.5 722.85 L605.5 722.59 L606.5 722.51 L607.5 721.79 L608.5 721.85 L609.5 722.06 L610.5 720.39 L611.5 722.12 L612.5 721.60 L613.5 722.41 L614.6 721.85 L615.6 722.06 L616.6 721.66 L617.6 721.65 L618.6 722.55 L619.6 721.44 L620.6 721.45 L621.6 719.70 L622.6 720.30 L623.6 722.47 L624.6 722.31 L625.6 721.52 L626.6 722.41 L627.6 721.85 L628.6 721.37 L629.6 721.95 L630.6 721.96 L631.6 721.72 L632.6 721.69 L633.6 721.64 L634.6 721.49 L635.6 722.03 L636.6 721.56 L637.6 722.32 L638.6 720.86 L639.6 722.24 L640.6 721.48 L641.6 721.93 L642.6 721.94 L643.6 721.80 L644.6 721.97 L645.6 722.29 L646.6 722.19 L647.6 722.02 L648.6 722.27 L649.6 722.42 L650.6 722.22 L651.6 721.92 L652.6 722.41 L653.6 722.61 L654.6 722.45 L655.6 721.62 L656.6 722.01 L657.6 722.05 L658.6 722.36 L659.6 721.97 L660.6 721.78 L661.6 722.03 L662.6 722.28 L663.6 722.62 L664.6 722.13 L665.6 721.86 L666.6 722.10 L667.6 722.61 L668.6 721.61 L669.6 721.33 L670.6 722.14 L671.6 722.07 L672.6 722.44 L673.6 722.61 L674.6 722.30 L675.6 722.27 L676.6 721.74 L677.6 721.78 L678.6 721.84 L679.6 721.74 L680.6 722.20 L681.6 721.87 L682.6 722.10 L683.6 721.58 L684.6 722.45 L685.6 721.63 L686.6 722.22 L687.6 722.04 L688.6 721.86 L689.6 721.64 L690.6 721.60 L691.6 720.95 L692.6 721.49 L693.6 720.99 L694.6 720.87 L695.6 721.18 L696.6 721.43 L697.6 722.00 L698.6 721.67 L699.6 721.94 L700.6 721.55 L701.6 721.60 L702.6 722.08 L703.6 721.71 L704.6 722.17 L705.6 721.73 L706.6 721.81 L707.6 721.62 L708.6 721.91 L709.6 721.85 L710.6 722.06 L711.6 721.26 L712.6 721.73 L713.6 721.40 L714.6 721.41 L715.6 721.63 L716.7 721.61 L717.7 721.27 L718.7 721.50 L719.7 721.82 L720.7 721.39 L721.7 721.69 L722.7 720.72 L723.7 721.52 L724.7 721.43 L725.7 721.50 L726.7 721.87 L727.7 721.63 L728.7 720.61 L729.7 721.74 L730.7 721.14 L731.7 720.96 L732.7 721.20 L733.7 721.47 L734.7 720.28 L735.7 721.40 L736.7 721.34 L737.7 720.92 L738.7 721.87 L739.7 721.66 L740.7 720.60 L741.7 721.12 L742.7 721.40 L743.7 721.20 L744.7 721.40 L745.7 721.98 L746.7 721.25 L747.7 721.29 L748.7 721.21 L749.7 721.63 L750.7 721.32 L751.7 721.08 L752.7 721.67 L753.7 721.02 L754.7 721.56 L755.7 721.55 L756.7 721.04 L757.7 720.96 L758.7 721.43 L759.7 721.69 L760.7 721.66 L761.7 721.61 L762.7 721.64 L763.7 721.54 L764.7 721.05 L765.7 721.06 L766.7 721.69 L767.7 721.10 L767.7 723.52 L766.7 723.89 L765.7 723.89 L764.7 723.64 L763.7 724.03 L762.7 724.19 L761.7 724.05 L760.7 724.04 L759.7 724.18 L758.7 723.97 L757.7 723.72 L756.7 723.65 L755.7 724.10 L754.7 723.77 L753.7 723.57 L752.7 723.79 L751.7 723.63 L750.7 723.53 L749.7 723.63 L748.7 723.49 L747.7 723.64 L746.7 723.68 L745.7 723.97 L744.7 723.79 L743.7 723.60 L742.7 723.41 L741.7 723.61 L740.7 723.52 L739.7 723.62 L738.7 723.80 L737.7 723.67 L736.7 723.66 L735.7 723.66 L734.7 722.59 L733.7 723.70 L732.7 723.73 L731.7 723.48 L730.7 723.61 L729.7 723.84 L728.7 723.37 L727.7 723.73 L726.7 723.90 L725.7 723.48 L724.7 723.59 L723.7 723.71 L722.7 723.57 L721.7 723.95 L720.7 723.80 L719.7 723.77 L718.7 723.67 L717.7 723.46 L716.7 723.83 L715.6 723.72 L714.6 723.88 L713.6 723.52 L712.6 723.98 L711.6 723.85 L710.6 724.10 L709.6 724.22 L708.6 724.33 L707.6 723.92 L706.6 723.96 L705.6 724.10 L704.6 724.43 L703.6 723.97 L702.6 724.12 L701.6 724.01 L700.6 723.99 L699.6 724.01 L698.6 723.82 L697.6 724.08 L696.6 723.80 L695.6 723.83 L694.6 723.65 L693.6 723.49 L692.6 723.69 L691.6 723.49 L690.6 723.58 L689.6 724.42 L688.6 724.24 L687.6 724.43 L686.6 724.41 L685.6 724.15 L684.6 724.51 L683.6 724.38 L682.6 724.66 L681.6 724.53 L680.6 724.32 L679.6 724.33 L678.6 724.44 L677.6 724.00 L676.6 724.27 L675.6 724.23 L674.6 724.52 L673.6 724.57 L672.6 724.53 L671.6 724.59 L670.6 724.55 L669.6 724.35 L668.6 724.13 L667.6 724.58 L666.6 724.38 L665.6 724.45 L664.6 724.34 L663.6 724.60 L662.6 724.55 L661.6 724.40 L660.6 724.24 L659.6 724.38 L658.6 724.54 L657.6 724.19 L656.6 724.04 L655.6 724.36 L654.6 724.46 L653.6 724.69 L652.6 724.44 L651.6 724.48 L650.6 724.44 L649.6 724.51 L648.6 724.44 L647.6 724.28 L646.6 724.52 L645.6 724.39 L644.6 724.02 L643.6 724.29 L642.6 724.42 L641.6 724.25 L640.6 724.07 L639.6 724.29 L638.6 723.03 L637.6 724.41 L636.6 724.30 L635.6 724.42 L634.6 724.16 L633.6 723.97 L632.6 724.02 L631.6 723.99 L630.6 724.16 L629.6 724.45 L628.6 724.09 L627.6 724.43 L626.6 724.34 L625.6 724.08 L624.6 724.31 L623.6 724.44 L622.6 723.10 L621.6 721.70 L620.6 723.37 L619.6 724.21 L618.6 724.57 L617.6 724.28 L616.6 724.28 L615.6 724.51 L614.6 724.07 L613.5 724.52 L612.5 724.30 L611.5 724.24 L610.5 723.21 L609.5 724.54 L608.5 724.33 L607.5 724.59 L606.5 724.70 L605.5 724.80 L604.5 724.84 L603.5 724.82 L602.5 724.73 L601.5 724.51 L600.5 724.64 L599.5 724.53 L598.5 724.77 L597.5 724.71 L596.5 724.67 L595.5 724.26 L594.5 724.35 L593.5 724.59 L592.5 724.43 L591.5 724.33 L590.5 724.57 L589.5 724.61 L588.5 724.45 L587.5 724.50 L586.5 724.54 L585.5 724.34 L584.5 724.37 L583.5 724.17 L582.5 724.53 L581.5 724.42 L580.5 724.51 L579.5 724.49 L578.5 724.31 L577.5 724.13 L576.5 724.55 L575.5 724.22 L574.5 724.50 L573.5 724.35 L572.5 724.47 L571.5 724.51 L570.5 724.39 L569.5 724.35 L568.5 724.67 L567.5 724.31 L566.5 724.54 L565.5 724.14 L564.5 724.11 L563.5 724.61 L562.5 724.46 L561.5 724.50 L560.5 724.32 L559.5 724.45 L558.5 724.37 L557.5 724.45 L556.5 724.83 L555.5 724.42 L554.5 724.23 L553.5 724.59 L552.5 724.37 L551.5 724.50 L550.5 724.60 L549.5 724.82 L548.5 724.36 L547.5 724.22 L546.5 724.35 L545.5 724.59 L544.5 724.71 L543.5 724.77 L542.5 724.69 L541.5 724.56 L540.5 724.58 L539.5 724.33 L538.5 724.39 L537.5 724.38 L536.5 724.70 L535.5 723.53 L534.5 724.19 L533.5 724.22 L532.5 724.58 L531.5 724.81 L530.5 724.68 L529.5 724.50 L528.5 724.39 L527.5 724.68 L526.5 724.34 L525.5 724.57 L524.5 724.50 L523.5 724.20 L522.5 724.19 L521.5 724.35 L520.5 724.55 L519.5 724.29 L518.5 724.44 L517.5 724.10 L516.5 724.39 L515.5 724.41 L514.5 724.23 L513.5 724.41 L512.5 724.27 L511.4 724.38 L510.4 724.50 L509.4 724.33 L508.4 724.22 L507.4 724.45 L506.4 724.41 L505.4 724.18 L504.4 724.09 L503.4 724.41 L502.4 724.53 L501.4 724.45 L500.4 724.55 L499.4 724.25 L498.4 724.34 L497.4 724.58 L496.4 724.11 L495.4 724.07 L494.4 724.25 L493.4 724.40 L492.4 724.33 L491.4 724.04 L490.4 723.93 L489.4 724.06 L488.4 724.05 L487.4 724.29 L486.4 724.06 L485.4 724.29 L484.4 724.11 L483.4 724.17 L482.4 724.13 L481.4 724.03 L480.4 724.15 L479.4 724.00 L478.4 724.07 L477.4 724.28 L476.4 724.14 L475.4 724.14 L474.4 724.36 L473.4 724.21 L472.4 724.40 L471.4 724.36 L470.4 724.36 L469.4 724.30 L468.4 724.21 L467.4 724.38 L466.4 724.30 L465.4 724.65 L464.4 724.29 L463.4 724.49 L462.4 724.53 L461.4 724.43 L460.4 724.53 L459.4 724.43 L458.4 724.46 L457.4 724.55 L456.4 724.29 L455.4 724.21 L454.4 724.14 L453.4 724.35 L452.4 724.33 L451.4 724.46 L450.4 724.46 L449.4 724.17 L448.4 724.38 L447.4 724.62 L446.4 724.57 L445.4 724.47 L444.4 724.41 L443.4 724.35 L442.4 724.34 L441.4 724.27 L440.4 724.19 L439.4 724.38 L438.4 724.37 L437.4 724.14 L436.4 724.30 L435.4 724.32 L434.4 724.25 L433.4 724.14 L432.4 724.42 L431.4 724.26 L430.4 724.37 L429.4 724.25 L428.4 724.53 L427.4 724.42 L426.4 724.35 L425.4 724.40 L424.4 724.45 L423.4 724.47 L422.4 724.68 L421.4 724.43 L420.4 724.58 L419.4 724.80 L418.4 724.63 L417.4 724.57 L416.4 724.21 L415.4 724.42 L414.4 724.66 L413.4 724.54 L412.4 724.63 L411.4 724.18 L410.4 724.27 L409.3 724.40 L408.3 723.46 L407.3 724.50 L406.3 724.73 L405.3 724.41 L404.3 724.34 L403.3 724.65 L402.3 724.49 L401.3 724.46 L400.3 724.54 L399.3 724.50 L398.3 724.38 L397.3 724.49 L396.3 724.36 L395.3 724.32 L394.3 724.34 L393.3 724.21 L392.3 724.50 L391.3 724.23 L390.3 724.47 L389.3 724.26 L388.3 724.65 L387.3 724.41 L386.3 724.49 L385.3 724.53 L384.3 724.49 L383.3 724.42 L382.3 724.60 L381.3 724.52 L380.3 724.24 L379.3 724.37 L378.3 724.48 L377.3 724.28 L376.3 724.35 L375.3 724.59 L374.3 724.48 L373.3 724.46 L372.3 724.38 L371.3 724.33 L370.3 724.42 L369.3 724.24 L368.3 723.06 L367.3 724.14 L366.3 724.39 L365.3 724.30 L364.3 724.26 L363.3 724.30 L362.3 724.35 L361.3 724.43 L360.3 724.27 L359.3 724.28 L358.3 724.21 L357.3 724.51 L356.3 724.33 L355.3 724.49 L354.3 724.23 L353.3 724.34 L352.3 724.39 L351.3 724.66 L350.3 724.62 L349.3 724.33 L348.3 724.46 L347.3 724.45 L346.3 724.35 L345.3 724.50 L344.3 724.70 L343.3 724.51 L342.3 724.31 L341.3 724.32 L340.3 724.16 L339.3 724.47 L338.3 724.36 L337.3 724.33 L336.3 724.54 L335.3 724.58 L334.3 724.54 L333.3 724.36 L332.3 724.48 L331.3 724.50 L330.3 724.34 L329.3 724.67 L328.3 724.79 L327.3 724.70 L326.3 724.67 L325.3 724.47 L324.3 724.22 L323.3 724.42 L322.3 724.36 L321.3 724.65 L320.3 724.68 L319.3 724.58 L318.3 724.37 L317.3 724.37 L316.3 724.70 L315.3 724.78 L314.3 724.51 L313.3 724.60 L312.3 724.58 L311.3 724.25 L310.3 724.32 L309.3 724.28 L308.3 724.53 L307.2 724.30 L306.2 724.06 L305.2 724.18 L304.2 724.34 L303.2 724.27 L302.2 724.29 L301.2 724.37 L300.2 724.51 L299.2 724.30 L298.2 724.27 L297.2 724.64 L296.2 724.57 L295.2 724.81 L294.2 724.38 L293.2 724.55 L292.2 724.65 L291.2 724.59 L290.2 724.56 L289.2 724.58 L288.2 724.50 L287.2 724.50 L286.2 724.27 L285.2 724.38 L284.2 724.53 L283.2 724.36 L282.2 724.23 L281.2 724.52 L280.2 724.65 L279.2 724.14 L278.2 724.05 L277.2 724.17 L276.2 724.36 L275.2 724.22 L274.2 724.12 L273.2 723.85 L272.2 723.97 L271.2 724.13 L270.2 724.09 L269.2 724.36 L268.2 724.29 L267.2 724.25 L266.2 724.25 L265.2 724.57 L264.2 724.62 L263.2 724.44 L262.2 724.45 L261.2 724.30 L260.2 724.33 L259.2 724.21 L258.2 724.57 L257.2 724.68 L256.2 724.77 L255.2 724.57 L254.2 724.43 L253.2 724.16 L252.2 724.34 L251.2 724.39 L250.2 724.14 L249.2 724.07 L248.2 724.19 L247.2 724.36 L246.2 724.32 L245.2 724.21 L244.2 724.37 L243.2 724.55 L242.2 724.54 L241.2 724.47 L240.2 724.30 L239.2 724.49 L238.2 724.56 L237.2 724.56 L236.2 724.51 L235.2 724.49 L234.2 724.47 L233.2 724.40 L232.2 724.55 L231.2 724.56 L230.2 724.47 L229.2 724.65 L228.2 724.57 L227.2 724.38 L226.2 724.36 L225.2 724.40 L224.2 724.82 L223.2 724.33 L222.2 724.41 L221.2 724.50 L220.2 724.41 L219.2 724.28 L218.2 724.30 L217.2 724.47 L216.2 724.30 L215.2 724.15 L214.2 724.37 L213.2 724.31 L212.2 724.20 L211.2 724.11 L210.2 724.36 L209.2 724.10 L208.2 724.20 L207.2 724.18 L206.2 723.90 L205.1 724.04 L204.1 724.23 L203.1 724.37 L202.1 724.16 L201.1 724.40 L200.1 724.27 L199.1 724.00 L198.1 724.42 L197.1 724.29 L196.1 723.96 L195.1 724.36 L194.1 724.32 L193.1 724.54 L192.1 724.60 L191.1 724.30 L190.1 724.50 L189.1 724.38 L188.1 724.31 L187.1 724.58 L186.1 724.54 L185.1 724.22 L184.1 724.67 L183.1 724.49 L182.1 724.02 L181.1 724.34 L180.1 724.19 L179.1 724.22 L178.1 724.34 L177.1 724.36 L176.1 724.09 L175.1 724.14 L174.1 724.39 L173.1 724.52 L172.1 724.49 L171.1 724.50 L170.1 724.48 L169.1 724.80 L168.1 724.37 L167.1 724.56 L166.1 724.88 L165.1 724.64 L164.1 724.73 L163.1 724.77 L162.1 724.73 L161.1 724.49 L160.1 724.71 L159.1 724.48 L158.1 724.51 L157.1 724.53 L156.1 724.37 L155.1 724.56 L154.1 724.40 L153.1 724.05 L152.1 723.87 L151.1 723.30 L150.1 723.19 L149.1 721.87 L148.1 722.40 L147.1 722.22 L146.1 721.65 L145.1 721.16 L144.1 720.97 L143.1 720.94 L142.1 721.09 L141.1 721.29 L140.1 721.20 L139.1 721.09 L138.1 721.22 L137.1 721.23 L136.1 721.02 L135.1 721.07 L134.1 720.89 L133.1 721.04 L132.1 720.95 L131.1 718.72 L130.1 722.25 L129.1 723.94 L128.1 724.77 L127.1 724.79 L126.1 724.36 L125.1 724.35 L124.1 724.40 L123.1 724.59 L122.1 724.48 L121.1 724.57 L120.1 724.52 L119.1 724.54 L118.1 724.58 L117.1 724.37 L116.1 724.41 L115.1 724.54 L114.1 724.86 L113.1 724.75 L112.1 724.46 L111.1 724.66 L110.1 724.68 L109.1 724.98 L108.1 724.72 L107.1 724.84 L106.1 724.95 L105.1 724.69 L104.1 724.48 L103.0 724.54 L102.0 724.57 L101.0 724.25 L100.0 724.11 L99.0 724.28 L98.0 724.25 L97.0 724.04 L96.0 724.20 L95.0 724.25 L94.0 724.17 L93.0 724.03 L92.0 724.38 L91.0 719.58 L90.0 707.39 L89.0 697.49 L88.0 715.28 L87.0 722.51 L86.0 722.74 L85.0 722.81 L84.0 722.97 L83.0 722.90 L82.0 722.77 L81.0 722.58 L80.0 722.84 L79.0 722.65 L78.0 722.57 L77.0 722.55 L76.0 722.64 L75.0 722.54 L74.0 722.84 L73.0 722.64 L72.0 722.54 L71.0 722.64 L70.0 722.73 L69.0 723.22 L68.0 722.89 L67.0 723.30 L66.0 723.28 L65.0 723.01 L64.0 722.81 L63.0 722.98 L62.0 723.15 L61.0 722.86 L60.0 722.68 L59.0 722.56 L58.0 722.90 L57.0 722.96 L56.0 722.85 L55.0 722.88 L54.0 722.77 L53.0 723.16 L52.0 722.64Z" fill="#5e1810"/><path d="M52.0 722.64 L53.0 723.16 L54.0 722.77 L55.0 722.88 L56.0 722.85 L57.0 722.96 L58.0 722.90 L59.0 722.56 L60.0 722.68 L61.0 722.86 L62.0 723.15 L63.0 722.98 L64.0 722.81 L65.0 723.01 L66.0 723.28 L67.0 723.30 L68.0 722.89 L69.0 723.22 L70.0 722.73 L71.0 722.64 L72.0 722.54 L73.0 722.64 L74.0 722.84 L75.0 722.54 L76.0 722.64 L77.0 722.55 L78.0 722.57 L79.0 722.65 L80.0 722.84 L81.0 722.58 L82.0 722.77 L83.0 722.90 L84.0 722.97 L85.0 722.81 L86.0 722.74 L87.0 722.51 L88.0 715.28 L89.0 697.49 L90.0 707.39 L91.0 719.58 L92.0 724.38 L93.0 724.03 L94.0 724.17 L95.0 724.25 L96.0 724.20 L97.0 724.04 L98.0 724.25 L99.0 724.28 L100.0 724.11 L101.0 724.25 L102.0 724.57 L103.0 724.54 L104.1 724.48 L105.1 724.69 L106.1 724.95 L107.1 724.84 L108.1 724.72 L109.1 724.98 L110.1 724.68 L111.1 724.66 L112.1 724.46 L113.1 724.75 L114.1 724.86 L115.1 724.54 L116.1 724.41 L117.1 724.37 L118.1 724.58 L119.1 724.54 L120.1 724.52 L121.1 724.57 L122.1 724.48 L123.1 724.59 L124.1 724.40 L125.1 724.35 L126.1 724.36 L127.1 724.79 L128.1 724.77 L129.1 723.94 L130.1 722.25 L131.1 718.72 L132.1 720.95 L133.1 721.04 L134.1 720.89 L135.1 721.07 L136.1 721.02 L137.1 721.23 L138.1 721.22 L139.1 721.09 L140.1 721.20 L141.1 721.29 L142.1 721.09 L143.1 720.94 L144.1 720.97 L145.1 721.16 L146.1 721.65 L147.1 722.22 L148.1 722.40 L149.1 721.87 L150.1 723.19 L151.1 723.30 L152.1 723.87 L153.1 724.05 L154.1 724.40 L155.1 724.56 L156.1 724.37 L157.1 724.53 L158.1 724.51 L159.1 724.48 L160.1 724.71 L161.1 724.49 L162.1 724.73 L163.1 724.77 L164.1 724.73 L165.1 724.64 L166.1 724.88 L167.1 724.56 L168.1 724.37 L169.1 724.80 L170.1 724.48 L171.1 724.50 L172.1 724.49 L173.1 724.52 L174.1 724.39 L175.1 724.14 L176.1 724.09 L177.1 724.36 L178.1 724.34 L179.1 724.22 L180.1 724.19 L181.1 724.34 L182.1 724.02 L183.1 724.49 L184.1 724.67 L185.1 724.22 L186.1 724.54 L187.1 724.58 L188.1 724.31 L189.1 724.38 L190.1 724.50 L191.1 724.30 L192.1 724.60 L193.1 724.54 L194.1 724.32 L195.1 724.36 L196.1 723.96 L197.1 724.29 L198.1 724.42 L199.1 724.00 L200.1 724.27 L201.1 724.40 L202.1 724.16 L203.1 724.37 L204.1 724.23 L205.1 724.04 L206.2 723.90 L207.2 724.18 L208.2 724.20 L209.2 724.10 L210.2 724.36 L211.2 724.11 L212.2 724.20 L213.2 724.31 L214.2 724.37 L215.2 724.15 L216.2 724.30 L217.2 724.47 L218.2 724.30 L219.2 724.28 L220.2 724.41 L221.2 724.50 L222.2 724.41 L223.2 724.33 L224.2 724.82 L225.2 724.40 L226.2 724.36 L227.2 724.38 L228.2 724.57 L229.2 724.65 L230.2 724.47 L231.2 724.56 L232.2 724.55 L233.2 724.40 L234.2 724.47 L235.2 724.49 L236.2 724.51 L237.2 724.56 L238.2 724.56 L239.2 724.49 L240.2 724.30 L241.2 724.47 L242.2 724.54 L243.2 724.55 L244.2 724.37 L245.2 724.21 L246.2 724.32 L247.2 724.36 L248.2 724.19 L249.2 724.07 L250.2 724.14 L251.2 724.39 L252.2 724.34 L253.2 724.16 L254.2 724.43 L255.2 724.57 L256.2 724.77 L257.2 724.68 L258.2 724.57 L259.2 724.21 L260.2 724.33 L261.2 724.30 L262.2 724.45 L263.2 724.44 L264.2 724.62 L265.2 724.57 L266.2 724.25 L267.2 724.25 L268.2 724.29 L269.2 724.36 L270.2 724.09 L271.2 724.13 L272.2 723.97 L273.2 723.85 L274.2 724.12 L275.2 724.22 L276.2 724.36 L277.2 724.17 L278.2 724.05 L279.2 724.14 L280.2 724.65 L281.2 724.52 L282.2 724.23 L283.2 724.36 L284.2 724.53 L285.2 724.38 L286.2 724.27 L287.2 724.50 L288.2 724.50 L289.2 724.58 L290.2 724.56 L291.2 724.59 L292.2 724.65 L293.2 724.55 L294.2 724.38 L295.2 724.81 L296.2 724.57 L297.2 724.64 L298.2 724.27 L299.2 724.30 L300.2 724.51 L301.2 724.37 L302.2 724.29 L303.2 724.27 L304.2 724.34 L305.2 724.18 L306.2 724.06 L307.2 724.30 L308.3 724.53 L309.3 724.28 L310.3 724.32 L311.3 724.25 L312.3 724.58 L313.3 724.60 L314.3 724.51 L315.3 724.78 L316.3 724.70 L317.3 724.37 L318.3 724.37 L319.3 724.58 L320.3 724.68 L321.3 724.65 L322.3 724.36 L323.3 724.42 L324.3 724.22 L325.3 724.47 L326.3 724.67 L327.3 724.70 L328.3 724.79 L329.3 724.67 L330.3 724.34 L331.3 724.50 L332.3 724.48 L333.3 724.36 L334.3 724.54 L335.3 724.58 L336.3 724.54 L337.3 724.33 L338.3 724.36 L339.3 724.47 L340.3 724.16 L341.3 724.32 L342.3 724.31 L343.3 724.51 L344.3 724.70 L345.3 724.50 L346.3 724.35 L347.3 724.45 L348.3 724.46 L349.3 724.33 L350.3 724.62 L351.3 724.66 L352.3 724.39 L353.3 724.34 L354.3 724.23 L355.3 724.49 L356.3 724.33 L357.3 724.51 L358.3 724.21 L359.3 724.28 L360.3 724.27 L361.3 724.43 L362.3 724.35 L363.3 724.30 L364.3 724.26 L365.3 724.30 L366.3 724.39 L367.3 724.14 L368.3 723.06 L369.3 724.24 L370.3 724.42 L371.3 724.33 L372.3 724.38 L373.3 724.46 L374.3 724.48 L375.3 724.59 L376.3 724.35 L377.3 724.28 L378.3 724.48 L379.3 724.37 L380.3 724.24 L381.3 724.52 L382.3 724.60 L383.3 724.42 L384.3 724.49 L385.3 724.53 L386.3 724.49 L387.3 724.41 L388.3 724.65 L389.3 724.26 L390.3 724.47 L391.3 724.23 L392.3 724.50 L393.3 724.21 L394.3 724.34 L395.3 724.32 L396.3 724.36 L397.3 724.49 L398.3 724.38 L399.3 724.50 L400.3 724.54 L401.3 724.46 L402.3 724.49 L403.3 724.65 L404.3 724.34 L405.3 724.41 L406.3 724.73 L407.3 724.50 L408.3 723.46 L409.3 724.40 L410.4 724.27 L411.4 724.18 L412.4 724.63 L413.4 724.54 L414.4 724.66 L415.4 724.42 L416.4 724.21 L417.4 724.57 L418.4 724.63 L419.4 724.80 L420.4 724.58 L421.4 724.43 L422.4 724.68 L423.4 724.47 L424.4 724.45 L425.4 724.40 L426.4 724.35 L427.4 724.42 L428.4 724.53 L429.4 724.25 L430.4 724.37 L431.4 724.26 L432.4 724.42 L433.4 724.14 L434.4 724.25 L435.4 724.32 L436.4 724.30 L437.4 724.14 L438.4 724.37 L439.4 724.38 L440.4 724.19 L441.4 724.27 L442.4 724.34 L443.4 724.35 L444.4 724.41 L445.4 724.47 L446.4 724.57 L447.4 724.62 L448.4 724.38 L449.4 724.17 L450.4 724.46 L451.4 724.46 L452.4 724.33 L453.4 724.35 L454.4 724.14 L455.4 724.21 L456.4 724.29 L457.4 724.55 L458.4 724.46 L459.4 724.43 L460.4 724.53 L461.4 724.43 L462.4 724.53 L463.4 724.49 L464.4 724.29 L465.4 724.65 L466.4 724.30 L467.4 724.38 L468.4 724.21 L469.4 724.30 L470.4 724.36 L471.4 724.36 L472.4 724.40 L473.4 724.21 L474.4 724.36 L475.4 724.14 L476.4 724.14 L477.4 724.28 L478.4 724.07 L479.4 724.00 L480.4 724.15 L481.4 724.03 L482.4 724.13 L483.4 724.17 L484.4 724.11 L485.4 724.29 L486.4 724.06 L487.4 724.29 L488.4 724.05 L489.4 724.06 L490.4 723.93 L491.4 724.04 L492.4 724.33 L493.4 724.40 L494.4 724.25 L495.4 724.07 L496.4 724.11 L497.4 724.58 L498.4 724.34 L499.4 724.25 L500.4 724.55 L501.4 724.45 L502.4 724.53 L503.4 724.41 L504.4 724.09 L505.4 724.18 L506.4 724.41 L507.4 724.45 L508.4 724.22 L509.4 724.33 L510.4 724.50 L511.4 724.38 L512.5 724.27 L513.5 724.41 L514.5 724.23 L515.5 724.41 L516.5 724.39 L517.5 724.10 L518.5 724.44 L519.5 724.29 L520.5 724.55 L521.5 724.35 L522.5 724.19 L523.5 724.20 L524.5 724.50 L525.5 724.57 L526.5 724.34 L527.5 724.68 L528.5 724.39 L529.5 724.50 L530.5 724.68 L531.5 724.81 L532.5 724.58 L533.5 724.22 L534.5 724.19 L535.5 723.53 L536.5 724.70 L537.5 724.38 L538.5 724.39 L539.5 724.33 L540.5 724.58 L541.5 724.56 L542.5 724.69 L543.5 724.77 L544.5 724.71 L545.5 724.59 L546.5 724.35 L547.5 724.22 L548.5 724.36 L549.5 724.82 L550.5 724.60 L551.5 724.50 L552.5 724.37 L553.5 724.59 L554.5 724.23 L555.5 724.42 L556.5 724.83 L557.5 724.45 L558.5 724.37 L559.5 724.45 L560.5 724.32 L561.5 724.50 L562.5 724.46 L563.5 724.61 L564.5 724.11 L565.5 724.14 L566.5 724.54 L567.5 724.31 L568.5 724.67 L569.5 724.35 L570.5 724.39 L571.5 724.51 L572.5 724.47 L573.5 724.35 L574.5 724.50 L575.5 724.22 L576.5 724.55 L577.5 724.13 L578.5 724.31 L579.5 724.49 L580.5 724.51 L581.5 724.42 L582.5 724.53 L583.5 724.17 L584.5 724.37 L585.5 724.34 L586.5 724.54 L587.5 724.50 L588.5 724.45 L589.5 724.61 L590.5 724.57 L591.5 724.33 L592.5 724.43 L593.5 724.59 L594.5 724.35 L595.5 724.26 L596.5 724.67 L597.5 724.71 L598.5 724.77 L599.5 724.53 L600.5 724.64 L601.5 724.51 L602.5 724.73 L603.5 724.82 L604.5 724.84 L605.5 724.80 L606.5 724.70 L607.5 724.59 L608.5 724.33 L609.5 724.54 L610.5 723.21 L611.5 724.24 L612.5 724.30 L613.5 724.52 L614.6 724.07 L615.6 724.51 L616.6 724.28 L617.6 724.28 L618.6 724.57 L619.6 724.21 L620.6 723.37 L621.6 721.70 L622.6 723.10 L623.6 724.44 L624.6 724.31 L625.6 724.08 L626.6 724.34 L627.6 724.43 L628.6 724.09 L629.6 724.45 L630.6 724.16 L631.6 723.99 L632.6 724.02 L633.6 723.97 L634.6 724.16 L635.6 724.42 L636.6 724.30 L637.6 724.41 L638.6 723.03 L639.6 724.29 L640.6 724.07 L641.6 724.25 L642.6 724.42 L643.6 724.29 L644.6 724.02 L645.6 724.39 L646.6 724.52 L647.6 724.28 L648.6 724.44 L649.6 724.51 L650.6 724.44 L651.6 724.48 L652.6 724.44 L653.6 724.69 L654.6 724.46 L655.6 724.36 L656.6 724.04 L657.6 724.19 L658.6 724.54 L659.6 724.38 L660.6 724.24 L661.6 724.40 L662.6 724.55 L663.6 724.60 L664.6 724.34 L665.6 724.45 L666.6 724.38 L667.6 724.58 L668.6 724.13 L669.6 724.35 L670.6 724.55 L671.6 724.59 L672.6 724.53 L673.6 724.57 L674.6 724.52 L675.6 724.23 L676.6 724.27 L677.6 724.00 L678.6 724.44 L679.6 724.33 L680.6 724.32 L681.6 724.53 L682.6 724.66 L683.6 724.38 L684.6 724.51 L685.6 724.15 L686.6 724.41 L687.6 724.43 L688.6 724.24 L689.6 724.42 L690.6 723.58 L691.6 723.49 L692.6 723.69 L693.6 723.49 L694.6 723.65 L695.6 723.83 L696.6 723.80 L697.6 724.08 L698.6 723.82 L699.6 724.01 L700.6 723.99 L701.6 724.01 L702.6 724.12 L703.6 723.97 L704.6 724.43 L705.6 724.10 L706.6 723.96 L707.6 723.92 L708.6 724.33 L709.6 724.22 L710.6 724.10 L711.6 723.85 L712.6 723.98 L713.6 723.52 L714.6 723.88 L715.6 723.72 L716.7 723.83 L717.7 723.46 L718.7 723.67 L719.7 723.77 L720.7 723.80 L721.7 723.95 L722.7 723.57 L723.7 723.71 L724.7 723.59 L725.7 723.48 L726.7 723.90 L727.7 723.73 L728.7 723.37 L729.7 723.84 L730.7 723.61 L731.7 723.48 L732.7 723.73 L733.7 723.70 L734.7 722.59 L735.7 723.66 L736.7 723.66 L737.7 723.67 L738.7 723.80 L739.7 723.62 L740.7 723.52 L741.7 723.61 L742.7 723.41 L743.7 723.60 L744.7 723.79 L745.7 723.97 L746.7 723.68 L747.7 723.64 L748.7 723.49 L749.7 723.63 L750.7 723.53 L751.7 723.63 L752.7 723.79 L753.7 723.57 L754.7 723.77 L755.7 724.10 L756.7 723.65 L757.7 723.72 L758.7 723.97 L759.7 724.18 L760.7 724.04 L761.7 724.05 L762.7 724.19 L763.7 724.03 L764.7 723.64 L765.7 723.89 L766.7 723.89 L767.7 723.52 L767.7 728.92 L766.7 728.96 L765.7 728.93 L764.7 728.95 L763.7 728.94 L762.7 729.04 L761.7 728.99 L760.7 729.07 L759.7 728.99 L758.7 728.99 L757.7 728.92 L756.7 728.98 L755.7 729.01 L754.7 728.99 L753.7 728.92 L752.7 728.98 L751.7 728.99 L750.7 728.99 L749.7 728.99 L748.7 729.03 L747.7 729.07 L746.7 729.05 L745.7 729.00 L744.7 728.99 L743.7 728.92 L742.7 728.97 L741.7 728.96 L740.7 729.02 L739.7 729.00 L738.7 729.02 L737.7 729.10 L736.7 729.09 L735.7 729.03 L734.7 727.80 L733.7 728.98 L732.7 729.03 L731.7 729.03 L730.7 729.01 L729.7 729.00 L728.7 728.96 L727.7 729.02 L726.7 729.01 L725.7 729.00 L724.7 729.02 L723.7 729.04 L722.7 729.08 L721.7 729.04 L720.7 729.04 L719.7 729.02 L718.7 728.99 L717.7 728.97 L716.7 729.06 L715.6 729.07 L714.6 729.00 L713.6 728.93 L712.6 728.95 L711.6 728.99 L710.6 729.02 L709.6 729.03 L708.6 729.00 L707.6 729.00 L706.6 729.05 L705.6 729.04 L704.6 729.07 L703.6 729.04 L702.6 729.04 L701.6 729.03 L700.6 728.96 L699.6 728.96 L698.6 728.99 L697.6 729.06 L696.6 729.02 L695.6 729.02 L694.6 729.03 L693.6 729.00 L692.6 728.99 L691.6 728.94 L690.6 729.02 L689.6 729.64 L688.6 729.58 L687.6 729.55 L686.6 729.59 L685.6 729.62 L684.6 729.61 L683.6 729.56 L682.6 729.52 L681.6 729.50 L680.6 729.50 L679.6 729.53 L678.6 729.52 L677.6 729.52 L676.6 729.50 L675.6 729.58 L674.6 729.50 L673.6 729.50 L672.6 729.61 L671.6 729.54 L670.6 729.58 L669.6 729.63 L668.6 729.53 L667.6 729.57 L666.6 729.57 L665.6 729.59 L664.6 729.69 L663.6 729.67 L662.6 729.60 L661.6 729.51 L660.6 729.58 L659.6 729.60 L658.6 729.52 L657.6 729.56 L656.6 729.55 L655.6 729.57 L654.6 729.68 L653.6 729.63 L652.6 729.60 L651.6 729.60 L650.6 729.53 L649.6 729.61 L648.6 729.59 L647.6 729.52 L646.6 729.59 L645.6 729.54 L644.6 729.57 L643.6 729.63 L642.6 729.61 L641.6 729.52 L640.6 729.60 L639.6 729.57 L638.6 728.36 L637.6 729.64 L636.6 729.61 L635.6 729.57 L634.6 729.52 L633.6 729.56 L632.6 729.61 L631.6 729.66 L630.6 729.72 L629.6 729.73 L628.6 729.65 L627.6 729.63 L626.6 729.57 L625.6 729.52 L624.6 729.52 L623.6 729.54 L622.6 728.70 L621.6 727.35 L620.6 728.72 L619.6 729.58 L618.6 729.63 L617.6 729.64 L616.6 729.61 L615.6 729.58 L614.6 729.52 L613.5 729.47 L612.5 729.53 L611.5 729.56 L610.5 728.43 L609.5 729.64 L608.5 729.55 L607.5 729.56 L606.5 729.60 L605.5 729.65 L604.5 729.61 L603.5 729.61 L602.5 729.61 L601.5 729.60 L600.5 729.58 L599.5 729.57 L598.5 729.51 L597.5 729.56 L596.5 729.53 L595.5 729.50 L594.5 729.50 L593.5 729.49 L592.5 729.50 L591.5 729.54 L590.5 729.59 L589.5 729.59 L588.5 729.63 L587.5 729.62 L586.5 729.71 L585.5 729.69 L584.5 729.68 L583.5 729.62 L582.5 729.62 L581.5 729.61 L580.5 729.64 L579.5 729.64 L578.5 729.61 L577.5 729.57 L576.5 729.68 L575.5 729.62 L574.5 729.66 L573.5 729.56 L572.5 729.61 L571.5 729.60 L570.5 729.60 L569.5 729.66 L568.5 729.66 L567.5 729.63 L566.5 729.59 L565.5 729.53 L564.5 729.59 L563.5 729.66 L562.5 729.60 L561.5 729.62 L560.5 729.62 L559.5 729.64 L558.5 729.66 L557.5 729.62 L556.5 729.63 L555.5 729.58 L554.5 729.56 L553.5 729.62 L552.5 729.62 L551.5 729.57 L550.5 729.56 L549.5 729.55 L548.5 729.55 L547.5 729.45 L546.5 729.50 L545.5 729.59 L544.5 729.55 L543.5 729.58 L542.5 729.53 L541.5 729.55 L540.5 729.58 L539.5 729.60 L538.5 729.53 L537.5 729.55 L536.5 729.57 L535.5 728.42 L534.5 729.56 L533.5 729.57 L532.5 729.52 L531.5 729.56 L530.5 729.60 L529.5 729.57 L528.5 729.55 L527.5 729.56 L526.5 729.55 L525.5 729.56 L524.5 729.52 L523.5 729.59 L522.5 729.59 L521.5 729.56 L520.5 729.62 L519.5 729.54 L518.5 729.60 L517.5 729.48 L516.5 729.52 L515.5 729.53 L514.5 729.55 L513.5 729.54 L512.5 729.56 L511.4 729.63 L510.4 729.63 L509.4 729.67 L508.4 729.61 L507.4 729.61 L506.4 729.59 L505.4 729.55 L504.4 729.51 L503.4 729.50 L502.4 729.47 L501.4 729.52 L500.4 729.54 L499.4 729.56 L498.4 729.53 L497.4 729.61 L496.4 729.54 L495.4 729.58 L494.4 729.61 L493.4 729.55 L492.4 729.49 L491.4 729.55 L490.4 729.53 L489.4 729.51 L488.4 729.54 L487.4 729.63 L486.4 729.59 L485.4 729.59 L484.4 729.52 L483.4 729.57 L482.4 729.50 L481.4 729.56 L480.4 729.53 L479.4 729.54 L478.4 729.50 L477.4 729.48 L476.4 729.48 L475.4 729.53 L474.4 729.55 L473.4 729.56 L472.4 729.58 L471.4 729.57 L470.4 729.67 L469.4 729.59 L468.4 729.57 L467.4 729.67 L466.4 729.60 L465.4 729.66 L464.4 729.62 L463.4 729.65 L462.4 729.54 L461.4 729.54 L460.4 729.55 L459.4 729.60 L458.4 729.50 L457.4 729.55 L456.4 729.49 L455.4 729.54 L454.4 729.53 L453.4 729.53 L452.4 729.58 L451.4 729.48 L450.4 729.50 L449.4 729.53 L448.4 729.60 L447.4 729.63 L446.4 729.65 L445.4 729.61 L444.4 729.61 L443.4 729.61 L442.4 729.63 L441.4 729.62 L440.4 729.62 L439.4 729.59 L438.4 729.61 L437.4 729.59 L436.4 729.53 L435.4 729.50 L434.4 729.48 L433.4 729.49 L432.4 729.56 L431.4 729.60 L430.4 729.54 L429.4 729.64 L428.4 729.62 L427.4 729.60 L426.4 729.54 L425.4 729.60 L424.4 729.59 L423.4 729.62 L422.4 729.57 L421.4 729.60 L420.4 729.60 L419.4 729.61 L418.4 729.65 L417.4 729.64 L416.4 729.56 L415.4 729.57 L414.4 729.66 L413.4 729.54 L412.4 729.60 L411.4 729.56 L410.4 729.54 L409.3 729.56 L408.3 728.43 L407.3 729.60 L406.3 729.60 L405.3 729.61 L404.3 729.57 L403.3 729.60 L402.3 729.58 L401.3 729.57 L400.3 729.52 L399.3 729.57 L398.3 729.55 L397.3 729.59 L396.3 729.68 L395.3 729.63 L394.3 729.61 L393.3 729.67 L392.3 729.56 L391.3 729.66 L390.3 729.64 L389.3 729.57 L388.3 729.55 L387.3 729.58 L386.3 729.55 L385.3 729.53 L384.3 729.56 L383.3 729.48 L382.3 729.54 L381.3 729.52 L380.3 729.56 L379.3 729.59 L378.3 729.59 L377.3 729.67 L376.3 729.63 L375.3 729.66 L374.3 729.61 L373.3 729.54 L372.3 729.52 L371.3 729.56 L370.3 729.66 L369.3 729.58 L368.3 728.49 L367.3 729.64 L366.3 729.64 L365.3 729.60 L364.3 729.61 L363.3 729.59 L362.3 729.58 L361.3 729.57 L360.3 729.53 L359.3 729.47 L358.3 729.51 L357.3 729.58 L356.3 729.58 L355.3 729.58 L354.3 729.61 L353.3 729.61 L352.3 729.55 L351.3 729.58 L350.3 729.59 L349.3 729.63 L348.3 729.63 L347.3 729.60 L346.3 729.56 L345.3 729.61 L344.3 729.57 L343.3 729.61 L342.3 729.58 L341.3 729.56 L340.3 729.61 L339.3 729.53 L338.3 729.56 L337.3 729.54 L336.3 729.60 L335.3 729.59 L334.3 729.54 L333.3 729.58 L332.3 729.52 L331.3 729.58 L330.3 729.51 L329.3 729.56 L328.3 729.49 L327.3 729.48 L326.3 729.49 L325.3 729.54 L324.3 729.55 L323.3 729.54 L322.3 729.54 L321.3 729.52 L320.3 729.57 L319.3 729.57 L318.3 729.60 L317.3 729.62 L316.3 729.55 L315.3 729.58 L314.3 729.47 L313.3 729.51 L312.3 729.51 L311.3 729.56 L310.3 729.58 L309.3 729.66 L308.3 729.61 L307.2 729.56 L306.2 729.55 L305.2 729.62 L304.2 729.59 L303.2 729.62 L302.2 729.60 L301.2 729.61 L300.2 729.62 L299.2 729.54 L298.2 729.58 L297.2 729.63 L296.2 729.60 L295.2 729.58 L294.2 729.52 L293.2 729.52 L292.2 729.52 L291.2 729.55 L290.2 729.62 L289.2 729.61 L288.2 729.59 L287.2 729.58 L286.2 729.59 L285.2 729.68 L284.2 729.69 L283.2 729.61 L282.2 729.62 L281.2 729.56 L280.2 729.58 L279.2 729.59 L278.2 729.59 L277.2 729.51 L276.2 729.52 L275.2 729.53 L274.2 729.52 L273.2 729.50 L272.2 729.58 L271.2 729.59 L270.2 729.58 L269.2 729.62 L268.2 729.60 L267.2 729.58 L266.2 729.54 L265.2 729.60 L264.2 729.60 L263.2 729.59 L262.2 729.49 L261.2 729.49 L260.2 729.55 L259.2 729.57 L258.2 729.53 L257.2 729.59 L256.2 729.62 L255.2 729.59 L254.2 729.67 L253.2 729.58 L252.2 729.51 L251.2 729.60 L250.2 729.61 L249.2 729.60 L248.2 729.54 L247.2 729.58 L246.2 729.60 L245.2 729.65 L244.2 729.58 L243.2 729.58 L242.2 729.65 L241.2 729.62 L240.2 729.60 L239.2 729.58 L238.2 729.63 L237.2 729.57 L236.2 729.52 L235.2 729.54 L234.2 729.51 L233.2 729.62 L232.2 729.53 L231.2 729.58 L230.2 729.54 L229.2 729.49 L228.2 729.50 L227.2 729.52 L226.2 729.52 L225.2 729.53 L224.2 729.55 L223.2 729.58 L222.2 729.52 L221.2 729.48 L220.2 729.56 L219.2 729.62 L218.2 729.65 L217.2 729.59 L216.2 729.62 L215.2 729.63 L214.2 729.63 L213.2 729.66 L212.2 729.64 L211.2 729.56 L210.2 729.57 L209.2 729.56 L208.2 729.57 L207.2 729.58 L206.2 729.52 L205.1 729.54 L204.1 729.57 L203.1 729.66 L202.1 729.62 L201.1 729.57 L200.1 729.51 L199.1 729.51 L198.1 729.56 L197.1 729.53 L196.1 729.51 L195.1 729.63 L194.1 729.57 L193.1 729.59 L192.1 729.71 L191.1 729.63 L190.1 729.61 L189.1 729.59 L188.1 729.61 L187.1 729.63 L186.1 729.62 L185.1 729.64 L184.1 729.57 L183.1 729.67 L182.1 729.57 L181.1 729.56 L180.1 729.57 L179.1 729.55 L178.1 729.52 L177.1 729.55 L176.1 729.64 L175.1 729.58 L174.1 729.57 L173.1 729.60 L172.1 729.57 L171.1 729.63 L170.1 729.66 L169.1 729.57 L168.1 729.47 L167.1 729.52 L166.1 729.58 L165.1 729.53 L164.1 729.53 L163.1 729.59 L162.1 729.66 L161.1 729.57 L160.1 729.50 L159.1 729.48 L158.1 729.53 L157.1 729.53 L156.1 729.60 L155.1 729.52 L154.1 729.62 L153.1 729.60 L152.1 729.61 L151.1 729.64 L150.1 729.63 L149.1 728.44 L148.1 729.59 L147.1 729.57 L146.1 729.52 L145.1 729.48 L144.1 729.56 L143.1 729.49 L142.1 729.59 L141.1 729.64 L140.1 729.58 L139.1 729.58 L138.1 729.57 L137.1 729.55 L136.1 729.67 L135.1 729.61 L134.1 729.61 L133.1 729.60 L132.1 728.84 L131.1 726.21 L130.1 728.87 L129.1 729.66 L128.1 729.65 L127.1 729.68 L126.1 729.57 L125.1 729.65 L124.1 729.63 L123.1 729.66 L122.1 729.67 L121.1 729.62 L120.1 729.61 L119.1 729.68 L118.1 729.65 L117.1 729.66 L116.1 729.62 L115.1 729.60 L114.1 729.67 L113.1 729.60 L112.1 729.56 L111.1 729.52 L110.1 729.56 L109.1 729.64 L108.1 729.65 L107.1 729.58 L106.1 729.58 L105.1 729.61 L104.1 729.58 L103.0 729.61 L102.0 729.57 L101.0 729.53 L100.0 729.49 L99.0 729.48 L98.0 729.50 L97.0 729.57 L96.0 729.59 L95.0 729.55 L94.0 729.51 L93.0 729.54 L92.0 729.55 L91.0 729.55 L90.0 727.39 L89.0 725.13 L88.0 728.15 L87.0 729.62 L86.0 729.59 L85.0 729.57 L84.0 729.60 L83.0 729.56 L82.0 729.61 L81.0 729.57 L80.0 729.63 L79.0 729.54 L78.0 729.50 L77.0 729.55 L76.0 729.49 L75.0 729.52 L74.0 729.54 L73.0 729.60 L72.0 729.49 L71.0 729.59 L70.0 729.58 L69.0 729.68 L68.0 729.65 L67.0 729.66 L66.0 729.63 L65.0 729.67 L64.0 729.60 L63.0 729.56 L62.0 729.61 L61.0 729.58 L60.0 729.57 L59.0 729.55 L58.0 729.58 L57.0 729.57 L56.0 729.65 L55.0 729.54 L54.0 729.58 L53.0 729.60 L52.0 729.60Z" fill="#0f2a49"/><path d="M52.0 729.60 L53.0 729.60 L54.0 729.58 L55.0 729.54 L56.0 729.65 L57.0 729.57 L58.0 729.58 L59.0 729.55 L60.0 729.57 L61.0 729.58 L62.0 729.61 L63.0 729.56 L64.0 729.60 L65.0 729.67 L66.0 729.63 L67.0 729.66 L68.0 729.65 L69.0 729.68 L70.0 729.58 L71.0 729.59 L72.0 729.49 L73.0 729.60 L74.0 729.54 L75.0 729.52 L76.0 729.49 L77.0 729.55 L78.0 729.50 L79.0 729.54 L80.0 729.63 L81.0 729.57 L82.0 729.61 L83.0 729.56 L84.0 729.60 L85.0 729.57 L86.0 729.59 L87.0 729.62 L88.0 728.15 L89.0 725.13 L90.0 727.39 L91.0 729.55 L92.0 729.55 L93.0 729.54 L94.0 729.51 L95.0 729.55 L96.0 729.59 L97.0 729.57 L98.0 729.50 L99.0 729.48 L100.0 729.49 L101.0 729.53 L102.0 729.57 L103.0 729.61 L104.1 729.58 L105.1 729.61 L106.1 729.58 L107.1 729.58 L108.1 729.65 L109.1 729.64 L110.1 729.56 L111.1 729.52 L112.1 729.56 L113.1 729.60 L114.1 729.67 L115.1 729.60 L116.1 729.62 L117.1 729.66 L118.1 729.65 L119.1 729.68 L120.1 729.61 L121.1 729.62 L122.1 729.67 L123.1 729.66 L124.1 729.63 L125.1 729.65 L126.1 729.57 L127.1 729.68 L128.1 729.65 L129.1 729.66 L130.1 728.87 L131.1 726.21 L132.1 728.84 L133.1 729.60 L134.1 729.61 L135.1 729.61 L136.1 729.67 L137.1 729.55 L138.1 729.57 L139.1 729.58 L140.1 729.58 L141.1 729.64 L142.1 729.59 L143.1 729.49 L144.1 729.56 L145.1 729.48 L146.1 729.52 L147.1 729.57 L148.1 729.59 L149.1 728.44 L150.1 729.63 L151.1 729.64 L152.1 729.61 L153.1 729.60 L154.1 729.62 L155.1 729.52 L156.1 729.60 L157.1 729.53 L158.1 729.53 L159.1 729.48 L160.1 729.50 L161.1 729.57 L162.1 729.66 L163.1 729.59 L164.1 729.53 L165.1 729.53 L166.1 729.58 L167.1 729.52 L168.1 729.47 L169.1 729.57 L170.1 729.66 L171.1 729.63 L172.1 729.57 L173.1 729.60 L174.1 729.57 L175.1 729.58 L176.1 729.64 L177.1 729.55 L178.1 729.52 L179.1 729.55 L180.1 729.57 L181.1 729.56 L182.1 729.57 L183.1 729.67 L184.1 729.57 L185.1 729.64 L186.1 729.62 L187.1 729.63 L188.1 729.61 L189.1 729.59 L190.1 729.61 L191.1 729.63 L192.1 729.71 L193.1 729.59 L194.1 729.57 L195.1 729.63 L196.1 729.51 L197.1 729.53 L198.1 729.56 L199.1 729.51 L200.1 729.51 L201.1 729.57 L202.1 729.62 L203.1 729.66 L204.1 729.57 L205.1 729.54 L206.2 729.52 L207.2 729.58 L208.2 729.57 L209.2 729.56 L210.2 729.57 L211.2 729.56 L212.2 729.64 L213.2 729.66 L214.2 729.63 L215.2 729.63 L216.2 729.62 L217.2 729.59 L218.2 729.65 L219.2 729.62 L220.2 729.56 L221.2 729.48 L222.2 729.52 L223.2 729.58 L224.2 729.55 L225.2 729.53 L226.2 729.52 L227.2 729.52 L228.2 729.50 L229.2 729.49 L230.2 729.54 L231.2 729.58 L232.2 729.53 L233.2 729.62 L234.2 729.51 L235.2 729.54 L236.2 729.52 L237.2 729.57 L238.2 729.63 L239.2 729.58 L240.2 729.60 L241.2 729.62 L242.2 729.65 L243.2 729.58 L244.2 729.58 L245.2 729.65 L246.2 729.60 L247.2 729.58 L248.2 729.54 L249.2 729.60 L250.2 729.61 L251.2 729.60 L252.2 729.51 L253.2 729.58 L254.2 729.67 L255.2 729.59 L256.2 729.62 L257.2 729.59 L258.2 729.53 L259.2 729.57 L260.2 729.55 L261.2 729.49 L262.2 729.49 L263.2 729.59 L264.2 729.60 L265.2 729.60 L266.2 729.54 L267.2 729.58 L268.2 729.60 L269.2 729.62 L270.2 729.58 L271.2 729.59 L272.2 729.58 L273.2 729.50 L274.2 729.52 L275.2 729.53 L276.2 729.52 L277.2 729.51 L278.2 729.59 L279.2 729.59 L280.2 729.58 L281.2 729.56 L282.2 729.62 L283.2 729.61 L284.2 729.69 L285.2 729.68 L286.2 729.59 L287.2 729.58 L288.2 729.59 L289.2 729.61 L290.2 729.62 L291.2 729.55 L292.2 729.52 L293.2 729.52 L294.2 729.52 L295.2 729.58 L296.2 729.60 L297.2 729.63 L298.2 729.58 L299.2 729.54 L300.2 729.62 L301.2 729.61 L302.2 729.60 L303.2 729.62 L304.2 729.59 L305.2 729.62 L306.2 729.55 L307.2 729.56 L308.3 729.61 L309.3 729.66 L310.3 729.58 L311.3 729.56 L312.3 729.51 L313.3 729.51 L314.3 729.47 L315.3 729.58 L316.3 729.55 L317.3 729.62 L318.3 729.60 L319.3 729.57 L320.3 729.57 L321.3 729.52 L322.3 729.54 L323.3 729.54 L324.3 729.55 L325.3 729.54 L326.3 729.49 L327.3 729.48 L328.3 729.49 L329.3 729.56 L330.3 729.51 L331.3 729.58 L332.3 729.52 L333.3 729.58 L334.3 729.54 L335.3 729.59 L336.3 729.60 L337.3 729.54 L338.3 729.56 L339.3 729.53 L340.3 729.61 L341.3 729.56 L342.3 729.58 L343.3 729.61 L344.3 729.57 L345.3 729.61 L346.3 729.56 L347.3 729.60 L348.3 729.63 L349.3 729.63 L350.3 729.59 L351.3 729.58 L352.3 729.55 L353.3 729.61 L354.3 729.61 L355.3 729.58 L356.3 729.58 L357.3 729.58 L358.3 729.51 L359.3 729.47 L360.3 729.53 L361.3 729.57 L362.3 729.58 L363.3 729.59 L364.3 729.61 L365.3 729.60 L366.3 729.64 L367.3 729.64 L368.3 728.49 L369.3 729.58 L370.3 729.66 L371.3 729.56 L372.3 729.52 L373.3 729.54 L374.3 729.61 L375.3 729.66 L376.3 729.63 L377.3 729.67 L378.3 729.59 L379.3 729.59 L380.3 729.56 L381.3 729.52 L382.3 729.54 L383.3 729.48 L384.3 729.56 L385.3 729.53 L386.3 729.55 L387.3 729.58 L388.3 729.55 L389.3 729.57 L390.3 729.64 L391.3 729.66 L392.3 729.56 L393.3 729.67 L394.3 729.61 L395.3 729.63 L396.3 729.68 L397.3 729.59 L398.3 729.55 L399.3 729.57 L400.3 729.52 L401.3 729.57 L402.3 729.58 L403.3 729.60 L404.3 729.57 L405.3 729.61 L406.3 729.60 L407.3 729.60 L408.3 728.43 L409.3 729.56 L410.4 729.54 L411.4 729.56 L412.4 729.60 L413.4 729.54 L414.4 729.66 L415.4 729.57 L416.4 729.56 L417.4 729.64 L418.4 729.65 L419.4 729.61 L420.4 729.60 L421.4 729.60 L422.4 729.57 L423.4 729.62 L424.4 729.59 L425.4 729.60 L426.4 729.54 L427.4 729.60 L428.4 729.62 L429.4 729.64 L430.4 729.54 L431.4 729.60 L432.4 729.56 L433.4 729.49 L434.4 729.48 L435.4 729.50 L436.4 729.53 L437.4 729.59 L438.4 729.61 L439.4 729.59 L440.4 729.62 L441.4 729.62 L442.4 729.63 L443.4 729.61 L444.4 729.61 L445.4 729.61 L446.4 729.65 L447.4 729.63 L448.4 729.60 L449.4 729.53 L450.4 729.50 L451.4 729.48 L452.4 729.58 L453.4 729.53 L454.4 729.53 L455.4 729.54 L456.4 729.49 L457.4 729.55 L458.4 729.50 L459.4 729.60 L460.4 729.55 L461.4 729.54 L462.4 729.54 L463.4 729.65 L464.4 729.62 L465.4 729.66 L466.4 729.60 L467.4 729.67 L468.4 729.57 L469.4 729.59 L470.4 729.67 L471.4 729.57 L472.4 729.58 L473.4 729.56 L474.4 729.55 L475.4 729.53 L476.4 729.48 L477.4 729.48 L478.4 729.50 L479.4 729.54 L480.4 729.53 L481.4 729.56 L482.4 729.50 L483.4 729.57 L484.4 729.52 L485.4 729.59 L486.4 729.59 L487.4 729.63 L488.4 729.54 L489.4 729.51 L490.4 729.53 L491.4 729.55 L492.4 729.49 L493.4 729.55 L494.4 729.61 L495.4 729.58 L496.4 729.54 L497.4 729.61 L498.4 729.53 L499.4 729.56 L500.4 729.54 L501.4 729.52 L502.4 729.47 L503.4 729.50 L504.4 729.51 L505.4 729.55 L506.4 729.59 L507.4 729.61 L508.4 729.61 L509.4 729.67 L510.4 729.63 L511.4 729.63 L512.5 729.56 L513.5 729.54 L514.5 729.55 L515.5 729.53 L516.5 729.52 L517.5 729.48 L518.5 729.60 L519.5 729.54 L520.5 729.62 L521.5 729.56 L522.5 729.59 L523.5 729.59 L524.5 729.52 L525.5 729.56 L526.5 729.55 L527.5 729.56 L528.5 729.55 L529.5 729.57 L530.5 729.60 L531.5 729.56 L532.5 729.52 L533.5 729.57 L534.5 729.56 L535.5 728.42 L536.5 729.57 L537.5 729.55 L538.5 729.53 L539.5 729.60 L540.5 729.58 L541.5 729.55 L542.5 729.53 L543.5 729.58 L544.5 729.55 L545.5 729.59 L546.5 729.50 L547.5 729.45 L548.5 729.55 L549.5 729.55 L550.5 729.56 L551.5 729.57 L552.5 729.62 L553.5 729.62 L554.5 729.56 L555.5 729.58 L556.5 729.63 L557.5 729.62 L558.5 729.66 L559.5 729.64 L560.5 729.62 L561.5 729.62 L562.5 729.60 L563.5 729.66 L564.5 729.59 L565.5 729.53 L566.5 729.59 L567.5 729.63 L568.5 729.66 L569.5 729.66 L570.5 729.60 L571.5 729.60 L572.5 729.61 L573.5 729.56 L574.5 729.66 L575.5 729.62 L576.5 729.68 L577.5 729.57 L578.5 729.61 L579.5 729.64 L580.5 729.64 L581.5 729.61 L582.5 729.62 L583.5 729.62 L584.5 729.68 L585.5 729.69 L586.5 729.71 L587.5 729.62 L588.5 729.63 L589.5 729.59 L590.5 729.59 L591.5 729.54 L592.5 729.50 L593.5 729.49 L594.5 729.50 L595.5 729.50 L596.5 729.53 L597.5 729.56 L598.5 729.51 L599.5 729.57 L600.5 729.58 L601.5 729.60 L602.5 729.61 L603.5 729.61 L604.5 729.61 L605.5 729.65 L606.5 729.60 L607.5 729.56 L608.5 729.55 L609.5 729.64 L610.5 728.43 L611.5 729.56 L612.5 729.53 L613.5 729.47 L614.6 729.52 L615.6 729.58 L616.6 729.61 L617.6 729.64 L618.6 729.63 L619.6 729.58 L620.6 728.72 L621.6 727.35 L622.6 728.70 L623.6 729.54 L624.6 729.52 L625.6 729.52 L626.6 729.57 L627.6 729.63 L628.6 729.65 L629.6 729.73 L630.6 729.72 L631.6 729.66 L632.6 729.61 L633.6 729.56 L634.6 729.52 L635.6 729.57 L636.6 729.61 L637.6 729.64 L638.6 728.36 L639.6 729.57 L640.6 729.60 L641.6 729.52 L642.6 729.61 L643.6 729.63 L644.6 729.57 L645.6 729.54 L646.6 729.59 L647.6 729.52 L648.6 729.59 L649.6 729.61 L650.6 729.53 L651.6 729.60 L652.6 729.60 L653.6 729.63 L654.6 729.68 L655.6 729.57 L656.6 729.55 L657.6 729.56 L658.6 729.52 L659.6 729.60 L660.6 729.58 L661.6 729.51 L662.6 729.60 L663.6 729.67 L664.6 729.69 L665.6 729.59 L666.6 729.57 L667.6 729.57 L668.6 729.53 L669.6 729.63 L670.6 729.58 L671.6 729.54 L672.6 729.61 L673.6 729.50 L674.6 729.50 L675.6 729.58 L676.6 729.50 L677.6 729.52 L678.6 729.52 L679.6 729.53 L680.6 729.50 L681.6 729.50 L682.6 729.52 L683.6 729.56 L684.6 729.61 L685.6 729.62 L686.6 729.59 L687.6 729.55 L688.6 729.58 L689.6 729.64 L690.6 729.02 L691.6 728.94 L692.6 728.99 L693.6 729.00 L694.6 729.03 L695.6 729.02 L696.6 729.02 L697.6 729.06 L698.6 728.99 L699.6 728.96 L700.6 728.96 L701.6 729.03 L702.6 729.04 L703.6 729.04 L704.6 729.07 L705.6 729.04 L706.6 729.05 L707.6 729.00 L708.6 729.00 L709.6 729.03 L710.6 729.02 L711.6 728.99 L712.6 728.95 L713.6 728.93 L714.6 729.00 L715.6 729.07 L716.7 729.06 L717.7 728.97 L718.7 728.99 L719.7 729.02 L720.7 729.04 L721.7 729.04 L722.7 729.08 L723.7 729.04 L724.7 729.02 L725.7 729.00 L726.7 729.01 L727.7 729.02 L728.7 728.96 L729.7 729.00 L730.7 729.01 L731.7 729.03 L732.7 729.03 L733.7 728.98 L734.7 727.80 L735.7 729.03 L736.7 729.09 L737.7 729.10 L738.7 729.02 L739.7 729.00 L740.7 729.02 L741.7 728.96 L742.7 728.97 L743.7 728.92 L744.7 728.99 L745.7 729.00 L746.7 729.05 L747.7 729.07 L748.7 729.03 L749.7 728.99 L750.7 728.99 L751.7 728.99 L752.7 728.98 L753.7 728.92 L754.7 728.99 L755.7 729.01 L756.7 728.98 L757.7 728.92 L758.7 728.99 L759.7 728.99 L760.7 729.07 L761.7 728.99 L762.7 729.04 L763.7 728.94 L764.7 728.95 L765.7 728.93 L766.7 728.96 L767.7 728.92 L767.7 731.50 L766.7 731.50 L765.7 731.50 L764.7 731.50 L763.7 731.50 L762.7 731.50 L761.7 731.50 L760.7 731.50 L759.7 731.50 L758.7 731.50 L757.7 731.50 L756.7 731.50 L755.7 731.50 L754.7 731.50 L753.7 731.50 L752.7 731.50 L751.7 731.50 L750.7 731.50 L749.7 731.50 L748.7 731.50 L747.7 731.50 L746.7 731.50 L745.7 731.50 L744.7 731.50 L743.7 731.50 L742.7 731.50 L741.7 731.50 L740.7 731.50 L739.7 731.50 L738.7 731.50 L737.7 731.50 L736.7 731.50 L735.7 731.50 L734.7 731.50 L733.7 731.50 L732.7 731.50 L731.7 731.50 L730.7 731.50 L729.7 731.50 L728.7 731.50 L727.7 731.50 L726.7 731.50 L725.7 731.50 L724.7 731.50 L723.7 731.50 L722.7 731.50 L721.7 731.50 L720.7 731.50 L719.7 731.50 L718.7 731.50 L717.7 731.50 L716.7 731.50 L715.6 731.50 L714.6 731.50 L713.6 731.50 L712.6 731.50 L711.6 731.50 L710.6 731.50 L709.6 731.50 L708.6 731.50 L707.6 731.50 L706.6 731.50 L705.6 731.50 L704.6 731.50 L703.6 731.50 L702.6 731.50 L701.6 731.50 L700.6 731.50 L699.6 731.50 L698.6 731.50 L697.6 731.50 L696.6 731.50 L695.6 731.50 L694.6 731.50 L693.6 731.50 L692.6 731.50 L691.6 731.50 L690.6 731.50 L689.6 731.50 L688.6 731.50 L687.6 731.50 L686.6 731.50 L685.6 731.50 L684.6 731.50 L683.6 731.50 L682.6 731.50 L681.6 731.50 L680.6 731.50 L679.6 731.50 L678.6 731.50 L677.6 731.50 L676.6 731.50 L675.6 731.50 L674.6 731.50 L673.6 731.50 L672.6 731.50 L671.6 731.50 L670.6 731.50 L669.6 731.50 L668.6 731.50 L667.6 731.50 L666.6 731.50 L665.6 731.50 L664.6 731.50 L663.6 731.50 L662.6 731.50 L661.6 731.50 L660.6 731.50 L659.6 731.50 L658.6 731.50 L657.6 731.50 L656.6 731.50 L655.6 731.50 L654.6 731.50 L653.6 731.50 L652.6 731.50 L651.6 731.50 L650.6 731.50 L649.6 731.50 L648.6 731.50 L647.6 731.50 L646.6 731.50 L645.6 731.50 L644.6 731.50 L643.6 731.50 L642.6 731.50 L641.6 731.50 L640.6 731.50 L639.6 731.50 L638.6 731.50 L637.6 731.50 L636.6 731.50 L635.6 731.50 L634.6 731.50 L633.6 731.50 L632.6 731.50 L631.6 731.50 L630.6 731.50 L629.6 731.50 L628.6 731.50 L627.6 731.50 L626.6 731.50 L625.6 731.50 L624.6 731.50 L623.6 731.50 L622.6 731.50 L621.6 731.50 L620.6 731.50 L619.6 731.50 L618.6 731.50 L617.6 731.50 L616.6 731.50 L615.6 731.50 L614.6 731.50 L613.5 731.50 L612.5 731.50 L611.5 731.50 L610.5 731.50 L609.5 731.50 L608.5 731.50 L607.5 731.50 L606.5 731.50 L605.5 731.50 L604.5 731.50 L603.5 731.50 L602.5 731.50 L601.5 731.50 L600.5 731.50 L599.5 731.50 L598.5 731.50 L597.5 731.50 L596.5 731.50 L595.5 731.50 L594.5 731.50 L593.5 731.50 L592.5 731.50 L591.5 731.50 L590.5 731.50 L589.5 731.50 L588.5 731.50 L587.5 731.50 L586.5 731.50 L585.5 731.50 L584.5 731.50 L583.5 731.50 L582.5 731.50 L581.5 731.50 L580.5 731.50 L579.5 731.50 L578.5 731.50 L577.5 731.50 L576.5 731.50 L575.5 731.50 L574.5 731.50 L573.5 731.50 L572.5 731.50 L571.5 731.50 L570.5 731.50 L569.5 731.50 L568.5 731.50 L567.5 731.50 L566.5 731.50 L565.5 731.50 L564.5 731.50 L563.5 731.50 L562.5 731.50 L561.5 731.50 L560.5 731.50 L559.5 731.50 L558.5 731.50 L557.5 731.50 L556.5 731.50 L555.5 731.50 L554.5 731.50 L553.5 731.50 L552.5 731.50 L551.5 731.50 L550.5 731.50 L549.5 731.50 L548.5 731.50 L547.5 731.50 L546.5 731.50 L545.5 731.50 L544.5 731.50 L543.5 731.50 L542.5 731.50 L541.5 731.50 L540.5 731.50 L539.5 731.50 L538.5 731.50 L537.5 731.50 L536.5 731.50 L535.5 731.50 L534.5 731.50 L533.5 731.50 L532.5 731.50 L531.5 731.50 L530.5 731.50 L529.5 731.50 L528.5 731.50 L527.5 731.50 L526.5 731.50 L525.5 731.50 L524.5 731.50 L523.5 731.50 L522.5 731.50 L521.5 731.50 L520.5 731.50 L519.5 731.50 L518.5 731.50 L517.5 731.50 L516.5 731.50 L515.5 731.50 L514.5 731.50 L513.5 731.50 L512.5 731.50 L511.4 731.50 L510.4 731.50 L509.4 731.50 L508.4 731.50 L507.4 731.50 L506.4 731.50 L505.4 731.50 L504.4 731.50 L503.4 731.50 L502.4 731.50 L501.4 731.50 L500.4 731.50 L499.4 731.50 L498.4 731.50 L497.4 731.50 L496.4 731.50 L495.4 731.50 L494.4 731.50 L493.4 731.50 L492.4 731.50 L491.4 731.50 L490.4 731.50 L489.4 731.50 L488.4 731.50 L487.4 731.50 L486.4 731.50 L485.4 731.50 L484.4 731.50 L483.4 731.50 L482.4 731.50 L481.4 731.50 L480.4 731.50 L479.4 731.50 L478.4 731.50 L477.4 731.50 L476.4 731.50 L475.4 731.50 L474.4 731.50 L473.4 731.50 L472.4 731.50 L471.4 731.50 L470.4 731.50 L469.4 731.50 L468.4 731.50 L467.4 731.50 L466.4 731.50 L465.4 731.50 L464.4 731.50 L463.4 731.50 L462.4 731.50 L461.4 731.50 L460.4 731.50 L459.4 731.50 L458.4 731.50 L457.4 731.50 L456.4 731.50 L455.4 731.50 L454.4 731.50 L453.4 731.50 L452.4 731.50 L451.4 731.50 L450.4 731.50 L449.4 731.50 L448.4 731.50 L447.4 731.50 L446.4 731.50 L445.4 731.50 L444.4 731.50 L443.4 731.50 L442.4 731.50 L441.4 731.50 L440.4 731.50 L439.4 731.50 L438.4 731.50 L437.4 731.50 L436.4 731.50 L435.4 731.50 L434.4 731.50 L433.4 731.50 L432.4 731.50 L431.4 731.50 L430.4 731.50 L429.4 731.50 L428.4 731.50 L427.4 731.50 L426.4 731.50 L425.4 731.50 L424.4 731.50 L423.4 731.50 L422.4 731.50 L421.4 731.50 L420.4 731.50 L419.4 731.50 L418.4 731.50 L417.4 731.50 L416.4 731.50 L415.4 731.50 L414.4 731.50 L413.4 731.50 L412.4 731.50 L411.4 731.50 L410.4 731.50 L409.3 731.50 L408.3 731.50 L407.3 731.50 L406.3 731.50 L405.3 731.50 L404.3 731.50 L403.3 731.50 L402.3 731.50 L401.3 731.50 L400.3 731.50 L399.3 731.50 L398.3 731.50 L397.3 731.50 L396.3 731.50 L395.3 731.50 L394.3 731.50 L393.3 731.50 L392.3 731.50 L391.3 731.50 L390.3 731.50 L389.3 731.50 L388.3 731.50 L387.3 731.50 L386.3 731.50 L385.3 731.50 L384.3 731.50 L383.3 731.50 L382.3 731.50 L381.3 731.50 L380.3 731.50 L379.3 731.50 L378.3 731.50 L377.3 731.50 L376.3 731.50 L375.3 731.50 L374.3 731.50 L373.3 731.50 L372.3 731.50 L371.3 731.50 L370.3 731.50 L369.3 731.50 L368.3 731.50 L367.3 731.50 L366.3 731.50 L365.3 731.50 L364.3 731.50 L363.3 731.50 L362.3 731.50 L361.3 731.50 L360.3 731.50 L359.3 731.50 L358.3 731.50 L357.3 731.50 L356.3 731.50 L355.3 731.50 L354.3 731.50 L353.3 731.50 L352.3 731.50 L351.3 731.50 L350.3 731.50 L349.3 731.50 L348.3 731.50 L347.3 731.50 L346.3 731.50 L345.3 731.50 L344.3 731.50 L343.3 731.50 L342.3 731.50 L341.3 731.50 L340.3 731.50 L339.3 731.50 L338.3 731.50 L337.3 731.50 L336.3 731.50 L335.3 731.50 L334.3 731.50 L333.3 731.50 L332.3 731.50 L331.3 731.50 L330.3 731.50 L329.3 731.50 L328.3 731.50 L327.3 731.50 L326.3 731.50 L325.3 731.50 L324.3 731.50 L323.3 731.50 L322.3 731.50 L321.3 731.50 L320.3 731.50 L319.3 731.50 L318.3 731.50 L317.3 731.50 L316.3 731.50 L315.3 731.50 L314.3 731.50 L313.3 731.50 L312.3 731.50 L311.3 731.50 L310.3 731.50 L309.3 731.50 L308.3 731.50 L307.2 731.50 L306.2 731.50 L305.2 731.50 L304.2 731.50 L303.2 731.50 L302.2 731.50 L301.2 731.50 L300.2 731.50 L299.2 731.50 L298.2 731.50 L297.2 731.50 L296.2 731.50 L295.2 731.50 L294.2 731.50 L293.2 731.50 L292.2 731.50 L291.2 731.50 L290.2 731.50 L289.2 731.50 L288.2 731.50 L287.2 731.50 L286.2 731.50 L285.2 731.50 L284.2 731.50 L283.2 731.50 L282.2 731.50 L281.2 731.50 L280.2 731.50 L279.2 731.50 L278.2 731.50 L277.2 731.50 L276.2 731.50 L275.2 731.50 L274.2 731.50 L273.2 731.50 L272.2 731.50 L271.2 731.50 L270.2 731.50 L269.2 731.50 L268.2 731.50 L267.2 731.50 L266.2 731.50 L265.2 731.50 L264.2 731.50 L263.2 731.50 L262.2 731.50 L261.2 731.50 L260.2 731.50 L259.2 731.50 L258.2 731.50 L257.2 731.50 L256.2 731.50 L255.2 731.50 L254.2 731.50 L253.2 731.50 L252.2 731.50 L251.2 731.50 L250.2 731.50 L249.2 731.50 L248.2 731.50 L247.2 731.50 L246.2 731.50 L245.2 731.50 L244.2 731.50 L243.2 731.50 L242.2 731.50 L241.2 731.50 L240.2 731.50 L239.2 731.50 L238.2 731.50 L237.2 731.50 L236.2 731.50 L235.2 731.50 L234.2 731.50 L233.2 731.50 L232.2 731.50 L231.2 731.50 L230.2 731.50 L229.2 731.50 L228.2 731.50 L227.2 731.50 L226.2 731.50 L225.2 731.50 L224.2 731.50 L223.2 731.50 L222.2 731.50 L221.2 731.50 L220.2 731.50 L219.2 731.50 L218.2 731.50 L217.2 731.50 L216.2 731.50 L215.2 731.50 L214.2 731.50 L213.2 731.50 L212.2 731.50 L211.2 731.50 L210.2 731.50 L209.2 731.50 L208.2 731.50 L207.2 731.50 L206.2 731.50 L205.1 731.50 L204.1 731.50 L203.1 731.50 L202.1 731.50 L201.1 731.50 L200.1 731.50 L199.1 731.50 L198.1 731.50 L197.1 731.50 L196.1 731.50 L195.1 731.50 L194.1 731.50 L193.1 731.50 L192.1 731.50 L191.1 731.50 L190.1 731.50 L189.1 731.50 L188.1 731.50 L187.1 731.50 L186.1 731.50 L185.1 731.50 L184.1 731.50 L183.1 731.50 L182.1 731.50 L181.1 731.50 L180.1 731.50 L179.1 731.50 L178.1 731.50 L177.1 731.50 L176.1 731.50 L175.1 731.50 L174.1 731.50 L173.1 731.50 L172.1 731.50 L171.1 731.50 L170.1 731.50 L169.1 731.50 L168.1 731.50 L167.1 731.50 L166.1 731.50 L165.1 731.50 L164.1 731.50 L163.1 731.50 L162.1 731.50 L161.1 731.50 L160.1 731.50 L159.1 731.50 L158.1 731.50 L157.1 731.50 L156.1 731.50 L155.1 731.50 L154.1 731.50 L153.1 731.50 L152.1 731.50 L151.1 731.50 L150.1 731.50 L149.1 731.50 L148.1 731.50 L147.1 731.50 L146.1 731.50 L145.1 731.50 L144.1 731.50 L143.1 731.50 L142.1 731.50 L141.1 731.50 L140.1 731.50 L139.1 731.50 L138.1 731.50 L137.1 731.50 L136.1 731.50 L135.1 731.50 L134.1 731.50 L133.1 731.50 L132.1 731.50 L131.1 731.50 L130.1 731.50 L129.1 731.50 L128.1 731.50 L127.1 731.50 L126.1 731.50 L125.1 731.50 L124.1 731.50 L123.1 731.50 L122.1 731.50 L121.1 731.50 L120.1 731.50 L119.1 731.50 L118.1 731.50 L117.1 731.50 L116.1 731.50 L115.1 731.50 L114.1 731.50 L113.1 731.50 L112.1 731.50 L111.1 731.50 L110.1 731.50 L109.1 731.50 L108.1 731.50 L107.1 731.50 L106.1 731.50 L105.1 731.50 L104.1 731.50 L103.0 731.50 L102.0 731.50 L101.0 731.50 L100.0 731.50 L99.0 731.50 L98.0 731.50 L97.0 731.50 L96.0 731.50 L95.0 731.50 L94.0 731.50 L93.0 731.50 L92.0 731.50 L91.0 731.50 L90.0 731.50 L89.0 731.50 L88.0 731.50 L87.0 731.50 L86.0 731.50 L85.0 731.50 L84.0 731.50 L83.0 731.50 L82.0 731.50 L81.0 731.50 L80.0 731.50 L79.0 731.50 L78.0 731.50 L77.0 731.50 L76.0 731.50 L75.0 731.50 L74.0 731.50 L73.0 731.50 L72.0 731.50 L71.0 731.50 L70.0 731.50 L69.0 731.50 L68.0 731.50 L67.0 731.50 L66.0 731.50 L65.0 731.50 L64.0 731.50 L63.0 731.50 L62.0 731.50 L61.0 731.50 L60.0 731.50 L59.0 731.50 L58.0 731.50 L57.0 731.50 L56.0 731.50 L55.0 731.50 L54.0 731.50 L53.0 731.50 L52.0 731.50Z" fill="#5e502c"/><rect x="52.0" y="583.50" width="715.7" height="1" fill="rgba(204,204,220,0.13)"/><rect x="52.0" y="613.00" width="715.7" height="1" fill="rgba(204,204,220,0.13)"/><rect x="52.0" y="642.50" width="715.7" height="1" fill="rgba(204,204,220,0.13)"/><rect x="52.0" y="672.00" width="715.7" height="1" fill="rgba(204,204,220,0.13)"/><rect x="52.0" y="701.50" width="715.7" height="1" fill="rgba(204,204,220,0.13)"/><rect x="52.0" y="731.00" width="715.7" height="1" fill="rgba(204,204,220,0.13)"/><rect x="71.90" y="584.0" width="1" height="151.5" fill="rgba(204,204,220,0.13)"/><rect x="131.63" y="584.0" width="1" height="151.5" fill="rgba(204,204,220,0.13)"/><rect x="191.36" y="584.0" width="1" height="151.5" fill="rgba(204,204,220,0.13)"/><rect x="251.09" y="584.0" width="1" height="151.5" fill="rgba(204,204,220,0.13)"/><rect x="310.82" y="584.0" width="1" height="151.5" fill="rgba(204,204,220,0.13)"/><rect x="370.55" y="584.0" width="1" height="151.5" fill="rgba(204,204,220,0.13)"/><rect x="430.28" y="584.0" width="1" height="151.5" fill="rgba(204,204,220,0.13)"/><rect x="490.01" y="584.0" width="1" height="151.5" fill="rgba(204,204,220,0.13)"/><rect x="549.74" y="584.0" width="1" height="151.5" fill="rgba(204,204,220,0.13)"/><rect x="609.47" y="584.0" width="1" height="151.5" fill="rgba(204,204,220,0.13)"/><rect x="669.20" y="584.0" width="1" height="151.5" fill="rgba(204,204,220,0.13)"/><rect x="728.93" y="584.0" width="1" height="151.5" fill="rgba(204,204,220,0.13)"/><path d="M52.0 729.60 L53.0 729.60 L54.0 729.58 L55.0 729.54 L56.0 729.65 L57.0 729.57 L58.0 729.58 L59.0 729.55 L60.0 729.57 L61.0 729.58 L62.0 729.61 L63.0 729.56 L64.0 729.60 L65.0 729.67 L66.0 729.63 L67.0 729.66 L68.0 729.65 L69.0 729.68 L70.0 729.58 L71.0 729.59 L72.0 729.49 L73.0 729.60 L74.0 729.54 L75.0 729.52 L76.0 729.49 L77.0 729.55 L78.0 729.50 L79.0 729.54 L80.0 729.63 L81.0 729.57 L82.0 729.61 L83.0 729.56 L84.0 729.60 L85.0 729.57 L86.0 729.59 L87.0 729.62 L88.0 728.15 L89.0 725.13 L90.0 727.39 L91.0 729.55 L92.0 729.55 L93.0 729.54 L94.0 729.51 L95.0 729.55 L96.0 729.59 L97.0 729.57 L98.0 729.50 L99.0 729.48 L100.0 729.49 L101.0 729.53 L102.0 729.57 L103.0 729.61 L104.1 729.58 L105.1 729.61 L106.1 729.58 L107.1 729.58 L108.1 729.65 L109.1 729.64 L110.1 729.56 L111.1 729.52 L112.1 729.56 L113.1 729.60 L114.1 729.67 L115.1 729.60 L116.1 729.62 L117.1 729.66 L118.1 729.65 L119.1 729.68 L120.1 729.61 L121.1 729.62 L122.1 729.67 L123.1 729.66 L124.1 729.63 L125.1 729.65 L126.1 729.57 L127.1 729.68 L128.1 729.65 L129.1 729.66 L130.1 728.87 L131.1 726.21 L132.1 728.84 L133.1 729.60 L134.1 729.61 L135.1 729.61 L136.1 729.67 L137.1 729.55 L138.1 729.57 L139.1 729.58 L140.1 729.58 L141.1 729.64 L142.1 729.59 L143.1 729.49 L144.1 729.56 L145.1 729.48 L146.1 729.52 L147.1 729.57 L148.1 729.59 L149.1 728.44 L150.1 729.63 L151.1 729.64 L152.1 729.61 L153.1 729.60 L154.1 729.62 L155.1 729.52 L156.1 729.60 L157.1 729.53 L158.1 729.53 L159.1 729.48 L160.1 729.50 L161.1 729.57 L162.1 729.66 L163.1 729.59 L164.1 729.53 L165.1 729.53 L166.1 729.58 L167.1 729.52 L168.1 729.47 L169.1 729.57 L170.1 729.66 L171.1 729.63 L172.1 729.57 L173.1 729.60 L174.1 729.57 L175.1 729.58 L176.1 729.64 L177.1 729.55 L178.1 729.52 L179.1 729.55 L180.1 729.57 L181.1 729.56 L182.1 729.57 L183.1 729.67 L184.1 729.57 L185.1 729.64 L186.1 729.62 L187.1 729.63 L188.1 729.61 L189.1 729.59 L190.1 729.61 L191.1 729.63 L192.1 729.71 L193.1 729.59 L194.1 729.57 L195.1 729.63 L196.1 729.51 L197.1 729.53 L198.1 729.56 L199.1 729.51 L200.1 729.51 L201.1 729.57 L202.1 729.62 L203.1 729.66 L204.1 729.57 L205.1 729.54 L206.2 729.52 L207.2 729.58 L208.2 729.57 L209.2 729.56 L210.2 729.57 L211.2 729.56 L212.2 729.64 L213.2 729.66 L214.2 729.63 L215.2 729.63 L216.2 729.62 L217.2 729.59 L218.2 729.65 L219.2 729.62 L220.2 729.56 L221.2 729.48 L222.2 729.52 L223.2 729.58 L224.2 729.55 L225.2 729.53 L226.2 729.52 L227.2 729.52 L228.2 729.50 L229.2 729.49 L230.2 729.54 L231.2 729.58 L232.2 729.53 L233.2 729.62 L234.2 729.51 L235.2 729.54 L236.2 729.52 L237.2 729.57 L238.2 729.63 L239.2 729.58 L240.2 729.60 L241.2 729.62 L242.2 729.65 L243.2 729.58 L244.2 729.58 L245.2 729.65 L246.2 729.60 L247.2 729.58 L248.2 729.54 L249.2 729.60 L250.2 729.61 L251.2 729.60 L252.2 729.51 L253.2 729.58 L254.2 729.67 L255.2 729.59 L256.2 729.62 L257.2 729.59 L258.2 729.53 L259.2 729.57 L260.2 729.55 L261.2 729.49 L262.2 729.49 L263.2 729.59 L264.2 729.60 L265.2 729.60 L266.2 729.54 L267.2 729.58 L268.2 729.60 L269.2 729.62 L270.2 729.58 L271.2 729.59 L272.2 729.58 L273.2 729.50 L274.2 729.52 L275.2 729.53 L276.2 729.52 L277.2 729.51 L278.2 729.59 L279.2 729.59 L280.2 729.58 L281.2 729.56 L282.2 729.62 L283.2 729.61 L284.2 729.69 L285.2 729.68 L286.2 729.59 L287.2 729.58 L288.2 729.59 L289.2 729.61 L290.2 729.62 L291.2 729.55 L292.2 729.52 L293.2 729.52 L294.2 729.52 L295.2 729.58 L296.2 729.60 L297.2 729.63 L298.2 729.58 L299.2 729.54 L300.2 729.62 L301.2 729.61 L302.2 729.60 L303.2 729.62 L304.2 729.59 L305.2 729.62 L306.2 729.55 L307.2 729.56 L308.3 729.61 L309.3 729.66 L310.3 729.58 L311.3 729.56 L312.3 729.51 L313.3 729.51 L314.3 729.47 L315.3 729.58 L316.3 729.55 L317.3 729.62 L318.3 729.60 L319.3 729.57 L320.3 729.57 L321.3 729.52 L322.3 729.54 L323.3 729.54 L324.3 729.55 L325.3 729.54 L326.3 729.49 L327.3 729.48 L328.3 729.49 L329.3 729.56 L330.3 729.51 L331.3 729.58 L332.3 729.52 L333.3 729.58 L334.3 729.54 L335.3 729.59 L336.3 729.60 L337.3 729.54 L338.3 729.56 L339.3 729.53 L340.3 729.61 L341.3 729.56 L342.3 729.58 L343.3 729.61 L344.3 729.57 L345.3 729.61 L346.3 729.56 L347.3 729.60 L348.3 729.63 L349.3 729.63 L350.3 729.59 L351.3 729.58 L352.3 729.55 L353.3 729.61 L354.3 729.61 L355.3 729.58 L356.3 729.58 L357.3 729.58 L358.3 729.51 L359.3 729.47 L360.3 729.53 L361.3 729.57 L362.3 729.58 L363.3 729.59 L364.3 729.61 L365.3 729.60 L366.3 729.64 L367.3 729.64 L368.3 728.49 L369.3 729.58 L370.3 729.66 L371.3 729.56 L372.3 729.52 L373.3 729.54 L374.3 729.61 L375.3 729.66 L376.3 729.63 L377.3 729.67 L378.3 729.59 L379.3 729.59 L380.3 729.56 L381.3 729.52 L382.3 729.54 L383.3 729.48 L384.3 729.56 L385.3 729.53 L386.3 729.55 L387.3 729.58 L388.3 729.55 L389.3 729.57 L390.3 729.64 L391.3 729.66 L392.3 729.56 L393.3 729.67 L394.3 729.61 L395.3 729.63 L396.3 729.68 L397.3 729.59 L398.3 729.55 L399.3 729.57 L400.3 729.52 L401.3 729.57 L402.3 729.58 L403.3 729.60 L404.3 729.57 L405.3 729.61 L406.3 729.60 L407.3 729.60 L408.3 728.43 L409.3 729.56 L410.4 729.54 L411.4 729.56 L412.4 729.60 L413.4 729.54 L414.4 729.66 L415.4 729.57 L416.4 729.56 L417.4 729.64 L418.4 729.65 L419.4 729.61 L420.4 729.60 L421.4 729.60 L422.4 729.57 L423.4 729.62 L424.4 729.59 L425.4 729.60 L426.4 729.54 L427.4 729.60 L428.4 729.62 L429.4 729.64 L430.4 729.54 L431.4 729.60 L432.4 729.56 L433.4 729.49 L434.4 729.48 L435.4 729.50 L436.4 729.53 L437.4 729.59 L438.4 729.61 L439.4 729.59 L440.4 729.62 L441.4 729.62 L442.4 729.63 L443.4 729.61 L444.4 729.61 L445.4 729.61 L446.4 729.65 L447.4 729.63 L448.4 729.60 L449.4 729.53 L450.4 729.50 L451.4 729.48 L452.4 729.58 L453.4 729.53 L454.4 729.53 L455.4 729.54 L456.4 729.49 L457.4 729.55 L458.4 729.50 L459.4 729.60 L460.4 729.55 L461.4 729.54 L462.4 729.54 L463.4 729.65 L464.4 729.62 L465.4 729.66 L466.4 729.60 L467.4 729.67 L468.4 729.57 L469.4 729.59 L470.4 729.67 L471.4 729.57 L472.4 729.58 L473.4 729.56 L474.4 729.55 L475.4 729.53 L476.4 729.48 L477.4 729.48 L478.4 729.50 L479.4 729.54 L480.4 729.53 L481.4 729.56 L482.4 729.50 L483.4 729.57 L484.4 729.52 L485.4 729.59 L486.4 729.59 L487.4 729.63 L488.4 729.54 L489.4 729.51 L490.4 729.53 L491.4 729.55 L492.4 729.49 L493.4 729.55 L494.4 729.61 L495.4 729.58 L496.4 729.54 L497.4 729.61 L498.4 729.53 L499.4 729.56 L500.4 729.54 L501.4 729.52 L502.4 729.47 L503.4 729.50 L504.4 729.51 L505.4 729.55 L506.4 729.59 L507.4 729.61 L508.4 729.61 L509.4 729.67 L510.4 729.63 L511.4 729.63 L512.5 729.56 L513.5 729.54 L514.5 729.55 L515.5 729.53 L516.5 729.52 L517.5 729.48 L518.5 729.60 L519.5 729.54 L520.5 729.62 L521.5 729.56 L522.5 729.59 L523.5 729.59 L524.5 729.52 L525.5 729.56 L526.5 729.55 L527.5 729.56 L528.5 729.55 L529.5 729.57 L530.5 729.60 L531.5 729.56 L532.5 729.52 L533.5 729.57 L534.5 729.56 L535.5 728.42 L536.5 729.57 L537.5 729.55 L538.5 729.53 L539.5 729.60 L540.5 729.58 L541.5 729.55 L542.5 729.53 L543.5 729.58 L544.5 729.55 L545.5 729.59 L546.5 729.50 L547.5 729.45 L548.5 729.55 L549.5 729.55 L550.5 729.56 L551.5 729.57 L552.5 729.62 L553.5 729.62 L554.5 729.56 L555.5 729.58 L556.5 729.63 L557.5 729.62 L558.5 729.66 L559.5 729.64 L560.5 729.62 L561.5 729.62 L562.5 729.60 L563.5 729.66 L564.5 729.59 L565.5 729.53 L566.5 729.59 L567.5 729.63 L568.5 729.66 L569.5 729.66 L570.5 729.60 L571.5 729.60 L572.5 729.61 L573.5 729.56 L574.5 729.66 L575.5 729.62 L576.5 729.68 L577.5 729.57 L578.5 729.61 L579.5 729.64 L580.5 729.64 L581.5 729.61 L582.5 729.62 L583.5 729.62 L584.5 729.68 L585.5 729.69 L586.5 729.71 L587.5 729.62 L588.5 729.63 L589.5 729.59 L590.5 729.59 L591.5 729.54 L592.5 729.50 L593.5 729.49 L594.5 729.50 L595.5 729.50 L596.5 729.53 L597.5 729.56 L598.5 729.51 L599.5 729.57 L600.5 729.58 L601.5 729.60 L602.5 729.61 L603.5 729.61 L604.5 729.61 L605.5 729.65 L606.5 729.60 L607.5 729.56 L608.5 729.55 L609.5 729.64 L610.5 728.43 L611.5 729.56 L612.5 729.53 L613.5 729.47 L614.6 729.52 L615.6 729.58 L616.6 729.61 L617.6 729.64 L618.6 729.63 L619.6 729.58 L620.6 728.72 L621.6 727.35 L622.6 728.70 L623.6 729.54 L624.6 729.52 L625.6 729.52 L626.6 729.57 L627.6 729.63 L628.6 729.65 L629.6 729.73 L630.6 729.72 L631.6 729.66 L632.6 729.61 L633.6 729.56 L634.6 729.52 L635.6 729.57 L636.6 729.61 L637.6 729.64 L638.6 728.36 L639.6 729.57 L640.6 729.60 L641.6 729.52 L642.6 729.61 L643.6 729.63 L644.6 729.57 L645.6 729.54 L646.6 729.59 L647.6 729.52 L648.6 729.59 L649.6 729.61 L650.6 729.53 L651.6 729.60 L652.6 729.60 L653.6 729.63 L654.6 729.68 L655.6 729.57 L656.6 729.55 L657.6 729.56 L658.6 729.52 L659.6 729.60 L660.6 729.58 L661.6 729.51 L662.6 729.60 L663.6 729.67 L664.6 729.69 L665.6 729.59 L666.6 729.57 L667.6 729.57 L668.6 729.53 L669.6 729.63 L670.6 729.58 L671.6 729.54 L672.6 729.61 L673.6 729.50 L674.6 729.50 L675.6 729.58 L676.6 729.50 L677.6 729.52 L678.6 729.52 L679.6 729.53 L680.6 729.50 L681.6 729.50 L682.6 729.52 L683.6 729.56 L684.6 729.61 L685.6 729.62 L686.6 729.59 L687.6 729.55 L688.6 729.58 L689.6 729.64 L690.6 729.02 L691.6 728.94 L692.6 728.99 L693.6 729.00 L694.6 729.03 L695.6 729.02 L696.6 729.02 L697.6 729.06 L698.6 728.99 L699.6 728.96 L700.6 728.96 L701.6 729.03 L702.6 729.04 L703.6 729.04 L704.6 729.07 L705.6 729.04 L706.6 729.05 L707.6 729.00 L708.6 729.00 L709.6 729.03 L710.6 729.02 L711.6 728.99 L712.6 728.95 L713.6 728.93 L714.6 729.00 L715.6 729.07 L716.7 729.06 L717.7 728.97 L718.7 728.99 L719.7 729.02 L720.7 729.04 L721.7 729.04 L722.7 729.08 L723.7 729.04 L724.7 729.02 L725.7 729.00 L726.7 729.01 L727.7 729.02 L728.7 728.96 L729.7 729.00 L730.7 729.01 L731.7 729.03 L732.7 729.03 L733.7 728.98 L734.7 727.80 L735.7 729.03 L736.7 729.09 L737.7 729.10 L738.7 729.02 L739.7 729.00 L740.7 729.02 L741.7 728.96 L742.7 728.97 L743.7 728.92 L744.7 728.99 L745.7 729.00 L746.7 729.05 L747.7 729.07 L748.7 729.03 L749.7 728.99 L750.7 728.99 L751.7 728.99 L752.7 728.98 L753.7 728.92 L754.7 728.99 L755.7 729.01 L756.7 728.98 L757.7 728.92 L758.7 728.99 L759.7 728.99 L760.7 729.07 L761.7 728.99 L762.7 729.04 L763.7 728.94 L764.7 728.95 L765.7 728.93 L766.7 728.96 L767.7 728.92" fill="none" stroke="#c9a640" stroke-width="1.2"/><path d="M52.0 722.64 L53.0 723.16 L54.0 722.77 L55.0 722.88 L56.0 722.85 L57.0 722.96 L58.0 722.90 L59.0 722.56 L60.0 722.68 L61.0 722.86 L62.0 723.15 L63.0 722.98 L64.0 722.81 L65.0 723.01 L66.0 723.28 L67.0 723.30 L68.0 722.89 L69.0 723.22 L70.0 722.73 L71.0 722.64 L72.0 722.54 L73.0 722.64 L74.0 722.84 L75.0 722.54 L76.0 722.64 L77.0 722.55 L78.0 722.57 L79.0 722.65 L80.0 722.84 L81.0 722.58 L82.0 722.77 L83.0 722.90 L84.0 722.97 L85.0 722.81 L86.0 722.74 L87.0 722.51 L88.0 715.28 L89.0 697.49 L90.0 707.39 L91.0 719.58 L92.0 724.38 L93.0 724.03 L94.0 724.17 L95.0 724.25 L96.0 724.20 L97.0 724.04 L98.0 724.25 L99.0 724.28 L100.0 724.11 L101.0 724.25 L102.0 724.57 L103.0 724.54 L104.1 724.48 L105.1 724.69 L106.1 724.95 L107.1 724.84 L108.1 724.72 L109.1 724.98 L110.1 724.68 L111.1 724.66 L112.1 724.46 L113.1 724.75 L114.1 724.86 L115.1 724.54 L116.1 724.41 L117.1 724.37 L118.1 724.58 L119.1 724.54 L120.1 724.52 L121.1 724.57 L122.1 724.48 L123.1 724.59 L124.1 724.40 L125.1 724.35 L126.1 724.36 L127.1 724.79 L128.1 724.77 L129.1 723.94 L130.1 722.25 L131.1 718.72 L132.1 720.95 L133.1 721.04 L134.1 720.89 L135.1 721.07 L136.1 721.02 L137.1 721.23 L138.1 721.22 L139.1 721.09 L140.1 721.20 L141.1 721.29 L142.1 721.09 L143.1 720.94 L144.1 720.97 L145.1 721.16 L146.1 721.65 L147.1 722.22 L148.1 722.40 L149.1 721.87 L150.1 723.19 L151.1 723.30 L152.1 723.87 L153.1 724.05 L154.1 724.40 L155.1 724.56 L156.1 724.37 L157.1 724.53 L158.1 724.51 L159.1 724.48 L160.1 724.71 L161.1 724.49 L162.1 724.73 L163.1 724.77 L164.1 724.73 L165.1 724.64 L166.1 724.88 L167.1 724.56 L168.1 724.37 L169.1 724.80 L170.1 724.48 L171.1 724.50 L172.1 724.49 L173.1 724.52 L174.1 724.39 L175.1 724.14 L176.1 724.09 L177.1 724.36 L178.1 724.34 L179.1 724.22 L180.1 724.19 L181.1 724.34 L182.1 724.02 L183.1 724.49 L184.1 724.67 L185.1 724.22 L186.1 724.54 L187.1 724.58 L188.1 724.31 L189.1 724.38 L190.1 724.50 L191.1 724.30 L192.1 724.60 L193.1 724.54 L194.1 724.32 L195.1 724.36 L196.1 723.96 L197.1 724.29 L198.1 724.42 L199.1 724.00 L200.1 724.27 L201.1 724.40 L202.1 724.16 L203.1 724.37 L204.1 724.23 L205.1 724.04 L206.2 723.90 L207.2 724.18 L208.2 724.20 L209.2 724.10 L210.2 724.36 L211.2 724.11 L212.2 724.20 L213.2 724.31 L214.2 724.37 L215.2 724.15 L216.2 724.30 L217.2 724.47 L218.2 724.30 L219.2 724.28 L220.2 724.41 L221.2 724.50 L222.2 724.41 L223.2 724.33 L224.2 724.82 L225.2 724.40 L226.2 724.36 L227.2 724.38 L228.2 724.57 L229.2 724.65 L230.2 724.47 L231.2 724.56 L232.2 724.55 L233.2 724.40 L234.2 724.47 L235.2 724.49 L236.2 724.51 L237.2 724.56 L238.2 724.56 L239.2 724.49 L240.2 724.30 L241.2 724.47 L242.2 724.54 L243.2 724.55 L244.2 724.37 L245.2 724.21 L246.2 724.32 L247.2 724.36 L248.2 724.19 L249.2 724.07 L250.2 724.14 L251.2 724.39 L252.2 724.34 L253.2 724.16 L254.2 724.43 L255.2 724.57 L256.2 724.77 L257.2 724.68 L258.2 724.57 L259.2 724.21 L260.2 724.33 L261.2 724.30 L262.2 724.45 L263.2 724.44 L264.2 724.62 L265.2 724.57 L266.2 724.25 L267.2 724.25 L268.2 724.29 L269.2 724.36 L270.2 724.09 L271.2 724.13 L272.2 723.97 L273.2 723.85 L274.2 724.12 L275.2 724.22 L276.2 724.36 L277.2 724.17 L278.2 724.05 L279.2 724.14 L280.2 724.65 L281.2 724.52 L282.2 724.23 L283.2 724.36 L284.2 724.53 L285.2 724.38 L286.2 724.27 L287.2 724.50 L288.2 724.50 L289.2 724.58 L290.2 724.56 L291.2 724.59 L292.2 724.65 L293.2 724.55 L294.2 724.38 L295.2 724.81 L296.2 724.57 L297.2 724.64 L298.2 724.27 L299.2 724.30 L300.2 724.51 L301.2 724.37 L302.2 724.29 L303.2 724.27 L304.2 724.34 L305.2 724.18 L306.2 724.06 L307.2 724.30 L308.3 724.53 L309.3 724.28 L310.3 724.32 L311.3 724.25 L312.3 724.58 L313.3 724.60 L314.3 724.51 L315.3 724.78 L316.3 724.70 L317.3 724.37 L318.3 724.37 L319.3 724.58 L320.3 724.68 L321.3 724.65 L322.3 724.36 L323.3 724.42 L324.3 724.22 L325.3 724.47 L326.3 724.67 L327.3 724.70 L328.3 724.79 L329.3 724.67 L330.3 724.34 L331.3 724.50 L332.3 724.48 L333.3 724.36 L334.3 724.54 L335.3 724.58 L336.3 724.54 L337.3 724.33 L338.3 724.36 L339.3 724.47 L340.3 724.16 L341.3 724.32 L342.3 724.31 L343.3 724.51 L344.3 724.70 L345.3 724.50 L346.3 724.35 L347.3 724.45 L348.3 724.46 L349.3 724.33 L350.3 724.62 L351.3 724.66 L352.3 724.39 L353.3 724.34 L354.3 724.23 L355.3 724.49 L356.3 724.33 L357.3 724.51 L358.3 724.21 L359.3 724.28 L360.3 724.27 L361.3 724.43 L362.3 724.35 L363.3 724.30 L364.3 724.26 L365.3 724.30 L366.3 724.39 L367.3 724.14 L368.3 723.06 L369.3 724.24 L370.3 724.42 L371.3 724.33 L372.3 724.38 L373.3 724.46 L374.3 724.48 L375.3 724.59 L376.3 724.35 L377.3 724.28 L378.3 724.48 L379.3 724.37 L380.3 724.24 L381.3 724.52 L382.3 724.60 L383.3 724.42 L384.3 724.49 L385.3 724.53 L386.3 724.49 L387.3 724.41 L388.3 724.65 L389.3 724.26 L390.3 724.47 L391.3 724.23 L392.3 724.50 L393.3 724.21 L394.3 724.34 L395.3 724.32 L396.3 724.36 L397.3 724.49 L398.3 724.38 L399.3 724.50 L400.3 724.54 L401.3 724.46 L402.3 724.49 L403.3 724.65 L404.3 724.34 L405.3 724.41 L406.3 724.73 L407.3 724.50 L408.3 723.46 L409.3 724.40 L410.4 724.27 L411.4 724.18 L412.4 724.63 L413.4 724.54 L414.4 724.66 L415.4 724.42 L416.4 724.21 L417.4 724.57 L418.4 724.63 L419.4 724.80 L420.4 724.58 L421.4 724.43 L422.4 724.68 L423.4 724.47 L424.4 724.45 L425.4 724.40 L426.4 724.35 L427.4 724.42 L428.4 724.53 L429.4 724.25 L430.4 724.37 L431.4 724.26 L432.4 724.42 L433.4 724.14 L434.4 724.25 L435.4 724.32 L436.4 724.30 L437.4 724.14 L438.4 724.37 L439.4 724.38 L440.4 724.19 L441.4 724.27 L442.4 724.34 L443.4 724.35 L444.4 724.41 L445.4 724.47 L446.4 724.57 L447.4 724.62 L448.4 724.38 L449.4 724.17 L450.4 724.46 L451.4 724.46 L452.4 724.33 L453.4 724.35 L454.4 724.14 L455.4 724.21 L456.4 724.29 L457.4 724.55 L458.4 724.46 L459.4 724.43 L460.4 724.53 L461.4 724.43 L462.4 724.53 L463.4 724.49 L464.4 724.29 L465.4 724.65 L466.4 724.30 L467.4 724.38 L468.4 724.21 L469.4 724.30 L470.4 724.36 L471.4 724.36 L472.4 724.40 L473.4 724.21 L474.4 724.36 L475.4 724.14 L476.4 724.14 L477.4 724.28 L478.4 724.07 L479.4 724.00 L480.4 724.15 L481.4 724.03 L482.4 724.13 L483.4 724.17 L484.4 724.11 L485.4 724.29 L486.4 724.06 L487.4 724.29 L488.4 724.05 L489.4 724.06 L490.4 723.93 L491.4 724.04 L492.4 724.33 L493.4 724.40 L494.4 724.25 L495.4 724.07 L496.4 724.11 L497.4 724.58 L498.4 724.34 L499.4 724.25 L500.4 724.55 L501.4 724.45 L502.4 724.53 L503.4 724.41 L504.4 724.09 L505.4 724.18 L506.4 724.41 L507.4 724.45 L508.4 724.22 L509.4 724.33 L510.4 724.50 L511.4 724.38 L512.5 724.27 L513.5 724.41 L514.5 724.23 L515.5 724.41 L516.5 724.39 L517.5 724.10 L518.5 724.44 L519.5 724.29 L520.5 724.55 L521.5 724.35 L522.5 724.19 L523.5 724.20 L524.5 724.50 L525.5 724.57 L526.5 724.34 L527.5 724.68 L528.5 724.39 L529.5 724.50 L530.5 724.68 L531.5 724.81 L532.5 724.58 L533.5 724.22 L534.5 724.19 L535.5 723.53 L536.5 724.70 L537.5 724.38 L538.5 724.39 L539.5 724.33 L540.5 724.58 L541.5 724.56 L542.5 724.69 L543.5 724.77 L544.5 724.71 L545.5 724.59 L546.5 724.35 L547.5 724.22 L548.5 724.36 L549.5 724.82 L550.5 724.60 L551.5 724.50 L552.5 724.37 L553.5 724.59 L554.5 724.23 L555.5 724.42 L556.5 724.83 L557.5 724.45 L558.5 724.37 L559.5 724.45 L560.5 724.32 L561.5 724.50 L562.5 724.46 L563.5 724.61 L564.5 724.11 L565.5 724.14 L566.5 724.54 L567.5 724.31 L568.5 724.67 L569.5 724.35 L570.5 724.39 L571.5 724.51 L572.5 724.47 L573.5 724.35 L574.5 724.50 L575.5 724.22 L576.5 724.55 L577.5 724.13 L578.5 724.31 L579.5 724.49 L580.5 724.51 L581.5 724.42 L582.5 724.53 L583.5 724.17 L584.5 724.37 L585.5 724.34 L586.5 724.54 L587.5 724.50 L588.5 724.45 L589.5 724.61 L590.5 724.57 L591.5 724.33 L592.5 724.43 L593.5 724.59 L594.5 724.35 L595.5 724.26 L596.5 724.67 L597.5 724.71 L598.5 724.77 L599.5 724.53 L600.5 724.64 L601.5 724.51 L602.5 724.73 L603.5 724.82 L604.5 724.84 L605.5 724.80 L606.5 724.70 L607.5 724.59 L608.5 724.33 L609.5 724.54 L610.5 723.21 L611.5 724.24 L612.5 724.30 L613.5 724.52 L614.6 724.07 L615.6 724.51 L616.6 724.28 L617.6 724.28 L618.6 724.57 L619.6 724.21 L620.6 723.37 L621.6 721.70 L622.6 723.10 L623.6 724.44 L624.6 724.31 L625.6 724.08 L626.6 724.34 L627.6 724.43 L628.6 724.09 L629.6 724.45 L630.6 724.16 L631.6 723.99 L632.6 724.02 L633.6 723.97 L634.6 724.16 L635.6 724.42 L636.6 724.30 L637.6 724.41 L638.6 723.03 L639.6 724.29 L640.6 724.07 L641.6 724.25 L642.6 724.42 L643.6 724.29 L644.6 724.02 L645.6 724.39 L646.6 724.52 L647.6 724.28 L648.6 724.44 L649.6 724.51 L650.6 724.44 L651.6 724.48 L652.6 724.44 L653.6 724.69 L654.6 724.46 L655.6 724.36 L656.6 724.04 L657.6 724.19 L658.6 724.54 L659.6 724.38 L660.6 724.24 L661.6 724.40 L662.6 724.55 L663.6 724.60 L664.6 724.34 L665.6 724.45 L666.6 724.38 L667.6 724.58 L668.6 724.13 L669.6 724.35 L670.6 724.55 L671.6 724.59 L672.6 724.53 L673.6 724.57 L674.6 724.52 L675.6 724.23 L676.6 724.27 L677.6 724.00 L678.6 724.44 L679.6 724.33 L680.6 724.32 L681.6 724.53 L682.6 724.66 L683.6 724.38 L684.6 724.51 L685.6 724.15 L686.6 724.41 L687.6 724.43 L688.6 724.24 L689.6 724.42 L690.6 723.58 L691.6 723.49 L692.6 723.69 L693.6 723.49 L694.6 723.65 L695.6 723.83 L696.6 723.80 L697.6 724.08 L698.6 723.82 L699.6 724.01 L700.6 723.99 L701.6 724.01 L702.6 724.12 L703.6 723.97 L704.6 724.43 L705.6 724.10 L706.6 723.96 L707.6 723.92 L708.6 724.33 L709.6 724.22 L710.6 724.10 L711.6 723.85 L712.6 723.98 L713.6 723.52 L714.6 723.88 L715.6 723.72 L716.7 723.83 L717.7 723.46 L718.7 723.67 L719.7 723.77 L720.7 723.80 L721.7 723.95 L722.7 723.57 L723.7 723.71 L724.7 723.59 L725.7 723.48 L726.7 723.90 L727.7 723.73 L728.7 723.37 L729.7 723.84 L730.7 723.61 L731.7 723.48 L732.7 723.73 L733.7 723.70 L734.7 722.59 L735.7 723.66 L736.7 723.66 L737.7 723.67 L738.7 723.80 L739.7 723.62 L740.7 723.52 L741.7 723.61 L742.7 723.41 L743.7 723.60 L744.7 723.79 L745.7 723.97 L746.7 723.68 L747.7 723.64 L748.7 723.49 L749.7 723.63 L750.7 723.53 L751.7 723.63 L752.7 723.79 L753.7 723.57 L754.7 723.77 L755.7 724.10 L756.7 723.65 L757.7 723.72 L758.7 723.97 L759.7 724.18 L760.7 724.04 L761.7 724.05 L762.7 724.19 L763.7 724.03 L764.7 723.64 L765.7 723.89 L766.7 723.89 L767.7 723.52" fill="none" stroke="#1b4f86" stroke-width="1"/><path d="M52.0 719.43 L53.0 720.11 L54.0 719.89 L55.0 719.48 L56.0 719.35 L57.0 719.46 L58.0 719.41 L59.0 719.57 L60.0 719.39 L61.0 719.84 L62.0 720.27 L63.0 719.65 L64.0 719.53 L65.0 719.66 L66.0 719.81 L67.0 719.83 L68.0 720.01 L69.0 720.30 L70.0 719.53 L71.0 719.21 L72.0 719.10 L73.0 719.59 L74.0 720.01 L75.0 719.55 L76.0 719.53 L77.0 719.21 L78.0 718.86 L79.0 719.61 L80.0 719.11 L81.0 718.94 L82.0 719.61 L83.0 719.41 L84.0 719.72 L85.0 719.21 L86.0 719.52 L87.0 719.27 L88.0 713.11 L89.0 695.27 L90.0 702.46 L91.0 709.95 L92.0 718.55 L93.0 721.70 L94.0 721.75 L95.0 722.20 L96.0 721.75 L97.0 722.03 L98.0 721.79 L99.0 722.14 L100.0 721.69 L101.0 722.27 L102.0 722.36 L103.0 722.42 L104.1 721.80 L105.1 722.62 L106.1 722.50 L107.1 722.21 L108.1 722.77 L109.1 723.01 L110.1 722.01 L111.1 722.57 L112.1 722.34 L113.1 722.57 L114.1 722.41 L115.1 721.69 L116.1 722.11 L117.1 722.05 L118.1 722.65 L119.1 722.31 L120.1 722.40 L121.1 722.20 L122.1 722.44 L123.1 722.37 L124.1 722.06 L125.1 722.12 L126.1 721.99 L127.1 722.84 L128.1 722.51 L129.1 721.36 L130.1 719.45 L131.1 716.21 L132.1 717.73 L133.1 717.71 L134.1 717.91 L135.1 717.58 L136.1 717.68 L137.1 717.93 L138.1 717.91 L139.1 717.68 L140.1 718.13 L141.1 718.27 L142.1 718.07 L143.1 717.65 L144.1 717.72 L145.1 717.71 L146.1 718.81 L147.1 719.13 L148.1 719.24 L149.1 719.13 L150.1 720.57 L151.1 720.40 L152.1 721.72 L153.1 721.77 L154.1 721.61 L155.1 721.59 L156.1 721.58 L157.1 722.10 L158.1 721.82 L159.1 722.42 L160.1 722.68 L161.1 722.49 L162.1 722.62 L163.1 722.82 L164.1 722.39 L165.1 722.55 L166.1 722.57 L167.1 721.90 L168.1 722.06 L169.1 722.35 L170.1 721.77 L171.1 722.08 L172.1 722.33 L173.1 722.45 L174.1 721.63 L175.1 721.25 L176.1 721.36 L177.1 721.89 L178.1 721.91 L179.1 722.05 L180.1 722.27 L181.1 721.84 L182.1 721.41 L183.1 722.42 L184.1 721.93 L185.1 722.02 L186.1 722.29 L187.1 722.02 L188.1 722.33 L189.1 722.37 L190.1 722.55 L191.1 722.16 L192.1 722.54 L193.1 721.88 L194.1 722.34 L195.1 721.84 L196.1 721.11 L197.1 722.12 L198.1 721.99 L199.1 721.75 L200.1 721.76 L201.1 721.96 L202.1 721.73 L203.1 721.34 L204.1 722.28 L205.1 721.29 L206.2 721.64 L207.2 721.75 L208.2 721.70 L209.2 721.87 L210.2 721.62 L211.2 721.79 L212.2 721.70 L213.2 722.12 L214.2 721.73 L215.2 721.52 L216.2 722.23 L217.2 721.96 L218.2 721.95 L219.2 722.10 L220.2 722.28 L221.2 722.26 L222.2 721.75 L223.2 721.82 L224.2 722.54 L225.2 721.93 L226.2 722.06 L227.2 722.34 L228.2 722.16 L229.2 722.32 L230.2 721.96 L231.2 722.51 L232.2 722.00 L233.2 721.93 L234.2 721.99 L235.2 722.11 L236.2 722.41 L237.2 722.63 L238.2 722.62 L239.2 721.88 L240.2 722.20 L241.2 721.91 L242.2 722.36 L243.2 722.22 L244.2 722.34 L245.2 722.21 L246.2 721.86 L247.2 722.26 L248.2 721.72 L249.2 721.41 L250.2 722.13 L251.2 722.15 L252.2 721.98 L253.2 721.75 L254.2 722.00 L255.2 722.16 L256.2 722.17 L257.2 722.65 L258.2 722.24 L259.2 722.20 L260.2 721.97 L261.2 721.84 L262.2 722.41 L263.2 721.63 L264.2 722.42 L265.2 722.17 L266.2 721.74 L267.2 722.32 L268.2 722.13 L269.2 721.94 L270.2 721.84 L271.2 721.44 L272.2 721.30 L273.2 721.81 L274.2 721.83 L275.2 722.09 L276.2 721.66 L277.2 722.25 L278.2 722.09 L279.2 721.76 L280.2 722.72 L281.2 722.26 L282.2 722.04 L283.2 722.41 L284.2 722.05 L285.2 722.45 L286.2 722.19 L287.2 722.34 L288.2 722.16 L289.2 722.01 L290.2 722.35 L291.2 722.29 L292.2 722.37 L293.2 722.31 L294.2 722.45 L295.2 722.50 L296.2 722.42 L297.2 722.55 L298.2 722.30 L299.2 721.58 L300.2 721.60 L301.2 722.04 L302.2 721.75 L303.2 722.25 L304.2 721.82 L305.2 722.20 L306.2 721.87 L307.2 722.32 L308.3 721.99 L309.3 722.24 L310.3 721.63 L311.3 721.53 L312.3 722.36 L313.3 722.17 L314.3 722.33 L315.3 722.21 L316.3 722.36 L317.3 721.84 L318.3 722.34 L319.3 722.62 L320.3 722.29 L321.3 721.87 L322.3 722.40 L323.3 722.14 L324.3 721.82 L325.3 721.87 L326.3 722.07 L327.3 722.00 L328.3 722.70 L329.3 722.64 L330.3 722.35 L331.3 721.89 L332.3 721.61 L333.3 721.96 L334.3 721.78 L335.3 721.97 L336.3 722.06 L337.3 721.64 L338.3 721.48 L339.3 721.83 L340.3 722.04 L341.3 722.39 L342.3 722.03 L343.3 722.28 L344.3 722.53 L345.3 722.38 L346.3 722.29 L347.3 722.51 L348.3 721.60 L349.3 722.29 L350.3 722.54 L351.3 722.09 L352.3 722.05 L353.3 721.39 L354.3 721.60 L355.3 721.45 L356.3 722.11 L357.3 722.54 L358.3 722.14 L359.3 721.80 L360.3 721.52 L361.3 722.17 L362.3 722.34 L363.3 721.56 L364.3 722.20 L365.3 721.88 L366.3 721.76 L367.3 721.85 L368.3 720.60 L369.3 721.95 L370.3 721.99 L371.3 722.36 L372.3 721.52 L373.3 721.61 L374.3 721.76 L375.3 722.34 L376.3 721.56 L377.3 721.46 L378.3 721.94 L379.3 722.36 L380.3 721.82 L381.3 722.59 L382.3 721.95 L383.3 722.19 L384.3 722.11 L385.3 721.97 L386.3 721.89 L387.3 721.73 L388.3 722.62 L389.3 721.89 L390.3 722.10 L391.3 721.95 L392.3 722.23 L393.3 722.18 L394.3 722.31 L395.3 722.25 L396.3 722.35 L397.3 722.38 L398.3 722.11 L399.3 721.97 L400.3 721.72 L401.3 722.36 L402.3 721.79 L403.3 722.33 L404.3 722.38 L405.3 721.93 L406.3 722.02 L407.3 721.98 L408.3 721.29 L409.3 722.28 L410.4 721.84 L411.4 722.17 L412.4 722.44 L413.4 722.54 L414.4 722.01 L415.4 722.27 L416.4 721.84 L417.4 722.22 L418.4 721.88 L419.4 722.43 L420.4 722.52 L421.4 721.87 L422.4 722.65 L423.4 722.23 L424.4 721.96 L425.4 722.01 L426.4 722.26 L427.4 722.31 L428.4 722.43 L429.4 721.62 L430.4 722.25 L431.4 722.00 L432.4 722.02 L433.4 721.57 L434.4 722.15 L435.4 721.77 L436.4 721.65 L437.4 721.23 L438.4 721.89 L439.4 722.38 L440.4 721.30 L441.4 721.46 L442.4 721.84 L443.4 721.27 L444.4 722.42 L445.4 721.80 L446.4 722.50 L447.4 722.54 L448.4 721.85 L449.4 721.70 L450.4 722.31 L451.4 722.32 L452.4 721.72 L453.4 721.95 L454.4 721.73 L455.4 721.84 L456.4 721.34 L457.4 722.42 L458.4 722.20 L459.4 722.51 L460.4 722.55 L461.4 722.09 L462.4 721.90 L463.4 722.22 L464.4 722.17 L465.4 722.24 L466.4 722.16 L467.4 721.55 L468.4 722.01 L469.4 721.39 L470.4 721.72 L471.4 721.86 L472.4 722.23 L473.4 721.54 L474.4 721.52 L475.4 721.80 L476.4 721.85 L477.4 721.52 L478.4 722.01 L479.4 721.24 L480.4 721.77 L481.4 721.59 L482.4 721.95 L483.4 722.24 L484.4 721.42 L485.4 722.03 L486.4 721.46 L487.4 721.74 L488.4 721.48 L489.4 722.13 L490.4 721.30 L491.4 721.67 L492.4 722.34 L493.4 722.23 L494.4 721.90 L495.4 721.48 L496.4 722.07 L497.4 722.65 L498.4 721.69 L499.4 722.29 L500.4 722.43 L501.4 722.43 L502.4 722.05 L503.4 722.00 L504.4 721.85 L505.4 721.44 L506.4 722.29 L507.4 721.93 L508.4 722.17 L509.4 721.98 L510.4 721.67 L511.4 722.24 L512.5 721.77 L513.5 722.25 L514.5 721.38 L515.5 721.62 L516.5 722.43 L517.5 721.58 L518.5 722.15 L519.5 722.37 L520.5 721.75 L521.5 722.13 L522.5 722.08 L523.5 722.09 L524.5 722.11 L525.5 722.24 L526.5 722.19 L527.5 721.97 L528.5 722.32 L529.5 722.29 L530.5 722.46 L531.5 722.00 L532.5 722.44 L533.5 722.24 L534.5 721.68 L535.5 720.75 L536.5 722.62 L537.5 721.53 L538.5 721.64 L539.5 721.64 L540.5 722.49 L541.5 722.58 L542.5 722.21 L543.5 722.67 L544.5 722.35 L545.5 722.63 L546.5 722.36 L547.5 721.93 L548.5 721.96 L549.5 722.44 L550.5 721.62 L551.5 722.09 L552.5 721.65 L553.5 722.04 L554.5 721.76 L555.5 722.04 L556.5 722.30 L557.5 722.14 L558.5 722.15 L559.5 722.39 L560.5 721.91 L561.5 722.19 L562.5 722.16 L563.5 722.45 L564.5 721.24 L565.5 721.30 L566.5 722.58 L567.5 721.78 L568.5 722.72 L569.5 722.23 L570.5 722.29 L571.5 722.42 L572.5 722.34 L573.5 721.61 L574.5 722.46 L575.5 721.56 L576.5 722.06 L577.5 721.75 L578.5 722.32 L579.5 722.14 L580.5 722.38 L581.5 722.42 L582.5 722.35 L583.5 721.99 L584.5 722.16 L585.5 722.02 L586.5 722.62 L587.5 722.09 L588.5 722.45 L589.5 721.93 L590.5 721.91 L591.5 722.23 L592.5 722.34 L593.5 721.95 L594.5 721.67 L595.5 722.07 L596.5 722.09 L597.5 722.49 L598.5 722.37 L599.5 722.09 L600.5 721.88 L601.5 721.98 L602.5 722.50 L603.5 722.56 L604.5 722.85 L605.5 722.59 L606.5 722.51 L607.5 721.79 L608.5 721.85 L609.5 722.06 L610.5 720.39 L611.5 722.12 L612.5 721.60 L613.5 722.41 L614.6 721.85 L615.6 722.06 L616.6 721.66 L617.6 721.65 L618.6 722.55 L619.6 721.44 L620.6 721.45 L621.6 719.70 L622.6 720.30 L623.6 722.47 L624.6 722.31 L625.6 721.52 L626.6 722.41 L627.6 721.85 L628.6 721.37 L629.6 721.95 L630.6 721.96 L631.6 721.72 L632.6 721.69 L633.6 721.64 L634.6 721.49 L635.6 722.03 L636.6 721.56 L637.6 722.32 L638.6 720.86 L639.6 722.24 L640.6 721.48 L641.6 721.93 L642.6 721.94 L643.6 721.80 L644.6 721.97 L645.6 722.29 L646.6 722.19 L647.6 722.02 L648.6 722.27 L649.6 722.42 L650.6 722.22 L651.6 721.92 L652.6 722.41 L653.6 722.61 L654.6 722.45 L655.6 721.62 L656.6 722.01 L657.6 722.05 L658.6 722.36 L659.6 721.97 L660.6 721.78 L661.6 722.03 L662.6 722.28 L663.6 722.62 L664.6 722.13 L665.6 721.86 L666.6 722.10 L667.6 722.61 L668.6 721.61 L669.6 721.33 L670.6 722.14 L671.6 722.07 L672.6 722.44 L673.6 722.61 L674.6 722.30 L675.6 722.27 L676.6 721.74 L677.6 721.78 L678.6 721.84 L679.6 721.74 L680.6 722.20 L681.6 721.87 L682.6 722.10 L683.6 721.58 L684.6 722.45 L685.6 721.63 L686.6 722.22 L687.6 722.04 L688.6 721.86 L689.6 721.64 L690.6 721.60 L691.6 720.95 L692.6 721.49 L693.6 720.99 L694.6 720.87 L695.6 721.18 L696.6 721.43 L697.6 722.00 L698.6 721.67 L699.6 721.94 L700.6 721.55 L701.6 721.60 L702.6 722.08 L703.6 721.71 L704.6 722.17 L705.6 721.73 L706.6 721.81 L707.6 721.62 L708.6 721.91 L709.6 721.85 L710.6 722.06 L711.6 721.26 L712.6 721.73 L713.6 721.40 L714.6 721.41 L715.6 721.63 L716.7 721.61 L717.7 721.27 L718.7 721.50 L719.7 721.82 L720.7 721.39 L721.7 721.69 L722.7 720.72 L723.7 721.52 L724.7 721.43 L725.7 721.50 L726.7 721.87 L727.7 721.63 L728.7 720.61 L729.7 721.74 L730.7 721.14 L731.7 720.96 L732.7 721.20 L733.7 721.47 L734.7 720.28 L735.7 721.40 L736.7 721.34 L737.7 720.92 L738.7 721.87 L739.7 721.66 L740.7 720.60 L741.7 721.12 L742.7 721.40 L743.7 721.20 L744.7 721.40 L745.7 721.98 L746.7 721.25 L747.7 721.29 L748.7 721.21 L749.7 721.63 L750.7 721.32 L751.7 721.08 L752.7 721.67 L753.7 721.02 L754.7 721.56 L755.7 721.55 L756.7 721.04 L757.7 720.96 L758.7 721.43 L759.7 721.69 L760.7 721.66 L761.7 721.61 L762.7 721.64 L763.7 721.54 L764.7 721.05 L765.7 721.06 L766.7 721.69 L767.7 721.10" fill="none" stroke="#9a2416" stroke-width="1"/><path d="M52.0 717.02 L53.0 718.92 L54.0 718.07 L55.0 716.41 L56.0 718.16 L57.0 718.68 L58.0 717.31 L59.0 718.41 L60.0 717.70 L61.0 717.59 L62.0 719.16 L63.0 718.15 L64.0 716.83 L65.0 718.58 L66.0 718.89 L67.0 716.91 L68.0 718.03 L69.0 719.56 L70.0 717.26 L71.0 717.37 L72.0 718.33 L73.0 718.07 L74.0 718.36 L75.0 718.34 L76.0 716.61 L77.0 717.98 L78.0 717.96 L79.0 716.47 L80.0 718.00 L81.0 718.02 L82.0 717.64 L83.0 718.29 L84.0 718.26 L85.0 716.59 L86.0 718.09 L87.0 706.01 L88.0 661.43 L89.0 669.97 L90.0 694.62 L91.0 707.42 L92.0 716.55 L93.0 719.70 L94.0 720.60 L95.0 718.04 L96.0 712.97 L97.0 716.28 L98.0 721.04 L99.0 720.72 L100.0 718.45 L101.0 720.94 L102.0 720.89 L103.0 719.52 L104.1 720.11 L105.1 720.64 L106.1 720.21 L107.1 720.38 L108.1 721.74 L109.1 720.48 L110.1 720.68 L111.1 720.70 L112.1 720.37 L113.1 720.69 L114.1 721.31 L115.1 719.67 L116.1 720.12 L117.1 720.53 L118.1 721.07 L119.1 720.46 L120.1 720.61 L121.1 718.74 L122.1 720.66 L123.1 720.80 L124.1 720.20 L125.1 720.92 L126.1 717.10 L127.1 710.90 L128.1 718.03 L129.1 715.44 L130.1 703.71 L131.1 710.75 L132.1 716.16 L133.1 714.69 L134.1 717.05 L135.1 716.13 L136.1 714.61 L137.1 715.96 L138.1 716.81 L139.1 714.36 L140.1 716.44 L141.1 716.83 L142.1 715.74 L143.1 716.02 L144.1 716.06 L145.1 715.86 L146.1 717.77 L147.1 717.31 L148.1 717.60 L149.1 717.00 L150.1 719.62 L151.1 718.27 L152.1 720.05 L153.1 720.38 L154.1 718.62 L155.1 720.32 L156.1 720.81 L157.1 719.91 L158.1 720.45 L159.1 720.82 L160.1 720.06 L161.1 720.83 L162.1 721.83 L163.1 720.83 L164.1 720.94 L165.1 721.55 L166.1 721.49 L167.1 720.60 L168.1 720.35 L169.1 720.33 L170.1 720.70 L171.1 721.14 L172.1 719.48 L173.1 721.61 L174.1 720.61 L175.1 719.55 L176.1 720.44 L177.1 719.93 L178.1 719.87 L179.1 721.12 L180.1 721.36 L181.1 719.18 L182.1 719.93 L183.1 721.34 L184.1 719.97 L185.1 721.11 L186.1 720.36 L187.1 720.40 L188.1 720.72 L189.1 721.54 L190.1 719.92 L191.1 721.40 L192.1 721.14 L193.1 718.77 L194.1 720.19 L195.1 719.85 L196.1 718.86 L197.1 720.51 L198.1 721.06 L199.1 718.92 L200.1 720.13 L201.1 720.40 L202.1 720.00 L203.1 720.12 L204.1 721.33 L205.1 718.88 L206.2 719.85 L207.2 720.40 L208.2 719.79 L209.2 719.73 L210.2 720.59 L211.2 719.48 L212.2 720.47 L213.2 720.67 L214.2 719.96 L215.2 720.73 L216.2 721.40 L217.2 719.95 L218.2 719.81 L219.2 721.23 L220.2 719.57 L221.2 721.12 L222.2 719.93 L223.2 718.23 L224.2 721.59 L225.2 720.57 L226.2 719.87 L227.2 720.66 L228.2 721.28 L229.2 719.65 L230.2 720.57 L231.2 721.03 L232.2 720.28 L233.2 720.58 L234.2 720.62 L235.2 719.48 L236.2 721.42 L237.2 721.33 L238.2 720.71 L239.2 720.33 L240.2 720.25 L241.2 719.29 L242.2 721.47 L243.2 720.73 L244.2 720.99 L245.2 720.58 L246.2 720.26 L247.2 719.03 L248.2 719.97 L249.2 720.07 L250.2 720.12 L251.2 720.86 L252.2 719.95 L253.2 719.06 L254.2 721.18 L255.2 720.58 L256.2 719.37 L257.2 721.05 L258.2 720.92 L259.2 720.13 L260.2 721.07 L261.2 720.16 L262.2 720.42 L263.2 720.69 L264.2 720.67 L265.2 718.85 L266.2 720.51 L267.2 721.32 L268.2 719.12 L269.2 720.34 L270.2 721.08 L271.2 720.13 L272.2 719.61 L273.2 720.17 L274.2 720.44 L275.2 720.03 L276.2 720.65 L277.2 720.08 L278.2 721.35 L279.2 720.75 L280.2 719.99 L281.2 721.42 L282.2 720.53 L283.2 720.18 L284.2 721.29 L285.2 721.63 L286.2 720.08 L287.2 721.24 L288.2 720.62 L289.2 720.32 L290.2 720.71 L291.2 720.67 L292.2 719.89 L293.2 721.07 L294.2 721.36 L295.2 719.88 L296.2 720.43 L297.2 721.56 L298.2 719.27 L299.2 720.15 L300.2 719.83 L301.2 720.51 L302.2 720.38 L303.2 721.29 L304.2 719.70 L305.2 720.50 L306.2 720.73 L307.2 720.42 L308.3 720.81 L309.3 720.88 L310.3 719.65 L311.3 720.17 L312.3 720.66 L313.3 720.09 L314.3 720.40 L315.3 721.35 L316.3 721.02 L317.3 720.13 L318.3 721.20 L319.3 719.68 L320.3 720.68 L321.3 720.06 L322.3 720.33 L323.3 720.30 L324.3 720.22 L325.3 720.53 L326.3 721.15 L327.3 720.31 L328.3 719.86 L329.3 721.08 L330.3 721.61 L331.3 719.84 L332.3 719.79 L333.3 715.49 L334.3 719.38 L335.3 720.28 L336.3 720.78 L337.3 719.50 L338.3 720.47 L339.3 720.76 L340.3 719.22 L341.3 721.33 L342.3 720.92 L343.3 719.48 L344.3 720.99 L345.3 721.22 L346.3 720.25 L347.3 720.86 L348.3 719.73 L349.3 719.92 L350.3 721.51 L351.3 721.10 L352.3 720.87 L353.3 719.53 L354.3 719.98 L355.3 720.02 L356.3 721.25 L357.3 721.54 L358.3 720.27 L359.3 720.17 L360.3 720.41 L361.3 720.86 L362.3 720.92 L363.3 720.53 L364.3 718.63 L365.3 720.20 L366.3 720.46 L367.3 719.45 L368.3 719.23 L369.3 720.01 L370.3 719.91 L371.3 720.80 L372.3 720.62 L373.3 719.86 L374.3 720.62 L375.3 720.29 L376.3 719.91 L377.3 719.57 L378.3 720.16 L379.3 719.32 L380.3 720.05 L381.3 721.00 L382.3 718.67 L383.3 720.87 L384.3 720.14 L385.3 718.45 L386.3 719.85 L387.3 720.99 L388.3 720.63 L389.3 720.67 L390.3 721.31 L391.3 719.53 L392.3 721.13 L393.3 720.66 L394.3 719.95 L395.3 720.30 L396.3 716.74 L397.3 718.92 L398.3 720.72 L399.3 721.17 L400.3 719.77 L401.3 721.00 L402.3 720.99 L403.3 721.03 L404.3 721.60 L405.3 721.04 L406.3 719.96 L407.3 720.05 L408.3 719.75 L409.3 719.74 L410.4 720.53 L411.4 720.85 L412.4 719.64 L413.4 721.23 L414.4 721.00 L415.4 720.09 L416.4 720.89 L417.4 720.48 L418.4 718.75 L419.4 720.74 L420.4 720.70 L421.4 720.03 L422.4 721.58 L423.4 721.09 L424.4 719.88 L425.4 720.54 L426.4 721.08 L427.4 718.73 L428.4 720.57 L429.4 720.29 L430.4 720.09 L431.4 721.01 L432.4 720.02 L433.4 718.78 L434.4 721.18 L435.4 721.01 L436.4 719.36 L437.4 720.05 L438.4 719.92 L439.4 718.86 L440.4 719.85 L441.4 719.93 L442.4 718.84 L443.4 720.53 L444.4 721.00 L445.4 719.24 L446.4 719.98 L447.4 716.91 L448.4 718.76 L449.4 720.42 L450.4 720.96 L451.4 719.08 L452.4 720.57 L453.4 720.41 L454.4 720.15 L455.4 720.71 L456.4 720.59 L457.4 720.70 L458.4 720.43 L459.4 721.17 L460.4 720.85 L461.4 720.43 L462.4 720.73 L463.4 720.94 L464.4 720.15 L465.4 720.53 L466.4 718.47 L467.4 720.46 L468.4 720.50 L469.4 718.66 L470.4 720.73 L471.4 721.02 L472.4 720.45 L473.4 719.93 L474.4 720.02 L475.4 719.71 L476.4 720.67 L477.4 719.83 L478.4 720.53 L479.4 719.19 L480.4 721.02 L481.4 719.79 L482.4 720.77 L483.4 721.42 L484.4 718.01 L485.4 720.76 L486.4 719.57 L487.4 719.23 L488.4 720.44 L489.4 720.51 L490.4 718.95 L491.4 720.11 L492.4 720.85 L493.4 718.98 L494.4 720.72 L495.4 720.14 L496.4 720.04 L497.4 721.00 L498.4 719.87 L499.4 719.47 L500.4 721.25 L501.4 720.70 L502.4 719.61 L503.4 720.45 L504.4 720.24 L505.4 718.84 L506.4 721.55 L507.4 720.99 L508.4 719.19 L509.4 720.87 L510.4 720.68 L511.4 720.12 L512.5 720.12 L513.5 720.31 L514.5 719.19 L515.5 720.46 L516.5 721.19 L517.5 719.71 L518.5 720.70 L519.5 721.30 L520.5 720.56 L521.5 720.46 L522.5 720.79 L523.5 720.18 L524.5 720.70 L525.5 721.32 L526.5 719.92 L527.5 720.42 L528.5 721.27 L529.5 718.32 L530.5 721.09 L531.5 719.86 L532.5 716.75 L533.5 720.70 L534.5 719.87 L535.5 718.46 L536.5 721.16 L537.5 720.63 L538.5 718.67 L539.5 720.19 L540.5 720.96 L541.5 720.85 L542.5 720.27 L543.5 721.93 L544.5 718.94 L545.5 721.63 L546.5 721.31 L547.5 719.35 L548.5 720.39 L549.5 720.84 L550.5 719.97 L551.5 720.55 L552.5 720.63 L553.5 720.22 L554.5 720.83 L555.5 721.15 L556.5 720.35 L557.5 720.91 L558.5 721.25 L559.5 719.92 L560.5 720.02 L561.5 720.95 L562.5 720.24 L563.5 721.44 L564.5 720.02 L565.5 718.61 L566.5 721.09 L567.5 720.06 L568.5 719.97 L569.5 720.71 L570.5 720.80 L571.5 720.39 L572.5 720.67 L573.5 720.37 L574.5 720.04 L575.5 719.97 L576.5 720.09 L577.5 719.89 L578.5 720.86 L579.5 720.49 L580.5 719.16 L581.5 721.30 L582.5 720.64 L583.5 719.21 L584.5 720.75 L585.5 720.47 L586.5 720.01 L587.5 720.71 L588.5 720.74 L589.5 719.78 L590.5 720.28 L591.5 720.76 L592.5 719.94 L593.5 720.26 L594.5 720.26 L595.5 720.60 L596.5 720.77 L597.5 721.66 L598.5 720.75 L599.5 721.07 L600.5 721.01 L601.5 718.79 L602.5 721.38 L603.5 721.13 L604.5 721.27 L605.5 721.35 L606.5 721.44 L607.5 719.59 L608.5 720.58 L609.5 721.01 L610.5 717.66 L611.5 721.17 L612.5 720.50 L613.5 719.68 L614.6 720.03 L615.6 720.49 L616.6 719.28 L617.6 720.04 L618.6 720.86 L619.6 719.37 L620.6 719.49 L621.6 712.15 L622.6 716.97 L623.6 721.72 L624.6 720.69 L625.6 719.41 L626.6 721.50 L627.6 720.99 L628.6 720.03 L629.6 720.42 L630.6 721.21 L631.6 718.63 L632.6 720.56 L633.6 720.07 L634.6 718.48 L635.6 720.94 L636.6 720.75 L637.6 719.62 L638.6 719.34 L639.6 721.07 L640.6 718.24 L641.6 720.14 L642.6 720.01 L643.6 719.82 L644.6 721.14 L645.6 721.54 L646.6 720.16 L647.6 720.26 L648.6 720.78 L649.6 718.70 L650.6 720.92 L651.6 720.22 L652.6 719.35 L653.6 721.54 L654.6 721.40 L655.6 719.47 L656.6 720.98 L657.6 720.82 L658.6 720.90 L659.6 720.35 L660.6 720.48 L661.6 720.23 L662.6 720.97 L663.6 720.87 L664.6 718.62 L665.6 720.70 L666.6 721.16 L667.6 721.09 L668.6 720.85 L669.6 720.45 L670.6 720.60 L671.6 721.04 L672.6 721.48 L673.6 720.11 L674.6 720.84 L675.6 721.45 L676.6 718.94 L677.6 720.58 L678.6 720.79 L679.6 718.74 L680.6 720.90 L681.6 720.12 L682.6 719.29 L683.6 715.99 L684.6 720.92 L685.6 719.46 L686.6 721.08 L687.6 720.63 L688.6 718.81 L689.6 719.96 L690.6 720.01 L691.6 718.87 L692.6 720.47 L693.6 720.25 L694.6 718.72 L695.6 719.97 L696.6 720.50 L697.6 718.82 L698.6 720.02 L699.6 721.09 L700.6 718.38 L701.6 720.73 L702.6 721.18 L703.6 718.74 L704.6 720.10 L705.6 720.66 L706.6 720.29 L707.6 720.62 L708.6 720.98 L709.6 720.01 L710.6 720.51 L711.6 719.63 L712.6 720.31 L713.6 719.86 L714.6 720.23 L715.6 719.19 L716.7 719.62 L717.7 719.97 L718.7 720.32 L719.7 720.50 L720.7 718.88 L721.7 715.11 L722.7 718.70 L723.7 720.11 L724.7 718.97 L725.7 720.64 L726.7 720.30 L727.7 718.92 L728.7 719.21 L729.7 720.53 L730.7 717.46 L731.7 719.99 L732.7 719.50 L733.7 718.04 L734.7 718.86 L735.7 720.41 L736.7 719.61 L737.7 719.35 L738.7 720.35 L739.7 718.85 L740.7 715.82 L741.7 719.17 L742.7 719.24 L743.7 720.16 L744.7 719.81 L745.7 719.26 L746.7 719.89 L747.7 719.79 L748.7 718.94 L749.7 720.35 L750.7 719.20 L751.7 717.95 L752.7 720.09 L753.7 719.47 L754.7 718.24 L755.7 720.77 L756.7 719.81 L757.7 718.37 L758.7 720.22 L759.7 720.10 L760.7 718.00 L761.7 720.58 L762.7 719.59 L763.7 719.27 L764.7 720.07 L765.7 719.29 L766.7 719.41 L767.7 719.75" fill="none" stroke="#d0501a" stroke-width="1.1"/><path d="M52.0 716.62 L53.0 718.52 L54.0 717.67 L55.0 716.01 L56.0 717.76 L57.0 718.28 L58.0 716.91 L59.0 718.01 L60.0 717.30 L61.0 717.19 L62.0 718.76 L63.0 717.75 L64.0 716.43 L65.0 718.18 L66.0 718.49 L67.0 716.51 L68.0 717.63 L69.0 719.16 L70.0 716.86 L71.0 716.97 L72.0 717.93 L73.0 717.67 L74.0 717.96 L75.0 717.94 L76.0 716.21 L77.0 717.58 L78.0 717.56 L79.0 716.07 L80.0 717.60 L81.0 717.62 L82.0 717.24 L83.0 717.89 L84.0 717.86 L85.0 716.19 L86.0 717.69 L87.0 705.61 L88.0 661.03 L89.0 669.57 L90.0 694.22 L91.0 707.02 L92.0 716.15 L93.0 719.30 L94.0 720.20 L95.0 717.64 L96.0 712.57 L97.0 715.88 L98.0 720.64 L99.0 720.32 L100.0 718.05 L101.0 720.54 L102.0 720.49 L103.0 719.12 L104.1 719.71 L105.1 720.24 L106.1 719.81 L107.1 719.98 L108.1 721.34 L109.1 720.08 L110.1 720.28 L111.1 720.30 L112.1 719.97 L113.1 720.29 L114.1 720.91 L115.1 719.27 L116.1 719.72 L117.1 720.13 L118.1 720.67 L119.1 720.06 L120.1 720.21 L121.1 718.34 L122.1 720.26 L123.1 720.40 L124.1 719.80 L125.1 720.52 L126.1 716.70 L127.1 710.50 L128.1 717.63 L129.1 715.04 L130.1 703.31 L131.1 710.35 L132.1 715.76 L133.1 714.29 L134.1 716.65 L135.1 715.73 L136.1 714.21 L137.1 715.56 L138.1 716.41 L139.1 713.96 L140.1 716.04 L141.1 716.43 L142.1 715.34 L143.1 715.62 L144.1 715.66 L145.1 715.46 L146.1 717.37 L147.1 716.91 L148.1 717.20 L149.1 716.60 L150.1 719.22 L151.1 717.87 L152.1 719.65 L153.1 719.98 L154.1 718.22 L155.1 719.92 L156.1 720.41 L157.1 719.51 L158.1 720.05 L159.1 720.42 L160.1 719.66 L161.1 720.43 L162.1 721.43 L163.1 720.43 L164.1 720.54 L165.1 721.15 L166.1 721.09 L167.1 720.20 L168.1 719.95 L169.1 719.93 L170.1 720.30 L171.1 720.74 L172.1 719.08 L173.1 721.21 L174.1 720.21 L175.1 719.15 L176.1 720.04 L177.1 719.53 L178.1 719.47 L179.1 720.72 L180.1 720.96 L181.1 718.78 L182.1 719.53 L183.1 720.94 L184.1 719.57 L185.1 720.71 L186.1 719.96 L187.1 720.00 L188.1 720.32 L189.1 721.14 L190.1 719.52 L191.1 721.00 L192.1 720.74 L193.1 718.37 L194.1 719.79 L195.1 719.45 L196.1 718.46 L197.1 720.11 L198.1 720.66 L199.1 718.52 L200.1 719.73 L201.1 720.00 L202.1 719.60 L203.1 719.72 L204.1 720.93 L205.1 718.48 L206.2 719.45 L207.2 720.00 L208.2 719.39 L209.2 719.33 L210.2 720.19 L211.2 719.08 L212.2 720.07 L213.2 720.27 L214.2 719.56 L215.2 720.33 L216.2 721.00 L217.2 719.55 L218.2 719.41 L219.2 720.83 L220.2 719.17 L221.2 720.72 L222.2 719.53 L223.2 717.83 L224.2 721.19 L225.2 720.17 L226.2 719.47 L227.2 720.26 L228.2 720.88 L229.2 719.25 L230.2 720.17 L231.2 720.63 L232.2 719.88 L233.2 720.18 L234.2 720.22 L235.2 719.08 L236.2 721.02 L237.2 720.93 L238.2 720.31 L239.2 719.93 L240.2 719.85 L241.2 718.89 L242.2 721.07 L243.2 720.33 L244.2 720.59 L245.2 720.18 L246.2 719.86 L247.2 718.63 L248.2 719.57 L249.2 719.67 L250.2 719.72 L251.2 720.46 L252.2 719.55 L253.2 718.66 L254.2 720.78 L255.2 720.18 L256.2 718.97 L257.2 720.65 L258.2 720.52 L259.2 719.73 L260.2 720.67 L261.2 719.76 L262.2 720.02 L263.2 720.29 L264.2 720.27 L265.2 718.45 L266.2 720.11 L267.2 720.92 L268.2 718.72 L269.2 719.94 L270.2 720.68 L271.2 719.73 L272.2 719.21 L273.2 719.77 L274.2 720.04 L275.2 719.63 L276.2 720.25 L277.2 719.68 L278.2 720.95 L279.2 720.35 L280.2 719.59 L281.2 721.02 L282.2 720.13 L283.2 719.78 L284.2 720.89 L285.2 721.23 L286.2 719.68 L287.2 720.84 L288.2 720.22 L289.2 719.92 L290.2 720.31 L291.2 720.27 L292.2 719.49 L293.2 720.67 L294.2 720.96 L295.2 719.48 L296.2 720.03 L297.2 721.16 L298.2 718.87 L299.2 719.75 L300.2 719.43 L301.2 720.11 L302.2 719.98 L303.2 720.89 L304.2 719.30 L305.2 720.10 L306.2 720.33 L307.2 720.02 L308.3 720.41 L309.3 720.48 L310.3 719.25 L311.3 719.77 L312.3 720.26 L313.3 719.69 L314.3 720.00 L315.3 720.95 L316.3 720.62 L317.3 719.73 L318.3 720.80 L319.3 719.28 L320.3 720.28 L321.3 719.66 L322.3 719.93 L323.3 719.90 L324.3 719.82 L325.3 720.13 L326.3 720.75 L327.3 719.91 L328.3 719.46 L329.3 720.68 L330.3 721.21 L331.3 719.44 L332.3 719.39 L333.3 715.09 L334.3 718.98 L335.3 719.88 L336.3 720.38 L337.3 719.10 L338.3 720.07 L339.3 720.36 L340.3 718.82 L341.3 720.93 L342.3 720.52 L343.3 719.08 L344.3 720.59 L345.3 720.82 L346.3 719.85 L347.3 720.46 L348.3 719.33 L349.3 719.52 L350.3 721.11 L351.3 720.70 L352.3 720.47 L353.3 719.13 L354.3 719.58 L355.3 719.62 L356.3 720.85 L357.3 721.14 L358.3 719.87 L359.3 719.77 L360.3 720.01 L361.3 720.46 L362.3 720.52 L363.3 720.13 L364.3 718.23 L365.3 719.80 L366.3 720.06 L367.3 719.05 L368.3 718.83 L369.3 719.61 L370.3 719.51 L371.3 720.40 L372.3 720.22 L373.3 719.46 L374.3 720.22 L375.3 719.89 L376.3 719.51 L377.3 719.17 L378.3 719.76 L379.3 718.92 L380.3 719.65 L381.3 720.60 L382.3 718.27 L383.3 720.47 L384.3 719.74 L385.3 718.05 L386.3 719.45 L387.3 720.59 L388.3 720.23 L389.3 720.27 L390.3 720.91 L391.3 719.13 L392.3 720.73 L393.3 720.26 L394.3 719.55 L395.3 719.90 L396.3 716.34 L397.3 718.52 L398.3 720.32 L399.3 720.77 L400.3 719.37 L401.3 720.60 L402.3 720.59 L403.3 720.63 L404.3 721.20 L405.3 720.64 L406.3 719.56 L407.3 719.65 L408.3 719.35 L409.3 719.34 L410.4 720.13 L411.4 720.45 L412.4 719.24 L413.4 720.83 L414.4 720.60 L415.4 719.69 L416.4 720.49 L417.4 720.08 L418.4 718.35 L419.4 720.34 L420.4 720.30 L421.4 719.63 L422.4 721.18 L423.4 720.69 L424.4 719.48 L425.4 720.14 L426.4 720.68 L427.4 718.33 L428.4 720.17 L429.4 719.89 L430.4 719.69 L431.4 720.61 L432.4 719.62 L433.4 718.38 L434.4 720.78 L435.4 720.61 L436.4 718.96 L437.4 719.65 L438.4 719.52 L439.4 718.46 L440.4 719.45 L441.4 719.53 L442.4 718.44 L443.4 720.13 L444.4 720.60 L445.4 718.84 L446.4 719.58 L447.4 716.51 L448.4 718.36 L449.4 720.02 L450.4 720.56 L451.4 718.68 L452.4 720.17 L453.4 720.01 L454.4 719.75 L455.4 720.31 L456.4 720.19 L457.4 720.30 L458.4 720.03 L459.4 720.77 L460.4 720.45 L461.4 720.03 L462.4 720.33 L463.4 720.54 L464.4 719.75 L465.4 720.13 L466.4 718.07 L467.4 720.06 L468.4 720.10 L469.4 718.26 L470.4 720.33 L471.4 720.62 L472.4 720.05 L473.4 719.53 L474.4 719.62 L475.4 719.31 L476.4 720.27 L477.4 719.43 L478.4 720.13 L479.4 718.79 L480.4 720.62 L481.4 719.39 L482.4 720.37 L483.4 721.02 L484.4 717.61 L485.4 720.36 L486.4 719.17 L487.4 718.83 L488.4 720.04 L489.4 720.11 L490.4 718.55 L491.4 719.71 L492.4 720.45 L493.4 718.58 L494.4 720.32 L495.4 719.74 L496.4 719.64 L497.4 720.60 L498.4 719.47 L499.4 719.07 L500.4 720.85 L501.4 720.30 L502.4 719.21 L503.4 720.05 L504.4 719.84 L505.4 718.44 L506.4 721.15 L507.4 720.59 L508.4 718.79 L509.4 720.47 L510.4 720.28 L511.4 719.72 L512.5 719.72 L513.5 719.91 L514.5 718.79 L515.5 720.06 L516.5 720.79 L517.5 719.31 L518.5 720.30 L519.5 720.90 L520.5 720.16 L521.5 720.06 L522.5 720.39 L523.5 719.78 L524.5 720.30 L525.5 720.92 L526.5 719.52 L527.5 720.02 L528.5 720.87 L529.5 717.92 L530.5 720.69 L531.5 719.46 L532.5 716.35 L533.5 720.30 L534.5 719.47 L535.5 718.06 L536.5 720.76 L537.5 720.23 L538.5 718.27 L539.5 719.79 L540.5 720.56 L541.5 720.45 L542.5 719.87 L543.5 721.53 L544.5 718.54 L545.5 721.23 L546.5 720.91 L547.5 718.95 L548.5 719.99 L549.5 720.44 L550.5 719.57 L551.5 720.15 L552.5 720.23 L553.5 719.82 L554.5 720.43 L555.5 720.75 L556.5 719.95 L557.5 720.51 L558.5 720.85 L559.5 719.52 L560.5 719.62 L561.5 720.55 L562.5 719.84 L563.5 721.04 L564.5 719.62 L565.5 718.21 L566.5 720.69 L567.5 719.66 L568.5 719.57 L569.5 720.31 L570.5 720.40 L571.5 719.99 L572.5 720.27 L573.5 719.97 L574.5 719.64 L575.5 719.57 L576.5 719.69 L577.5 719.49 L578.5 720.46 L579.5 720.09 L580.5 718.76 L581.5 720.90 L582.5 720.24 L583.5 718.81 L584.5 720.35 L585.5 720.07 L586.5 719.61 L587.5 720.31 L588.5 720.34 L589.5 719.38 L590.5 719.88 L591.5 720.36 L592.5 719.54 L593.5 719.86 L594.5 719.86 L595.5 720.20 L596.5 720.37 L597.5 721.26 L598.5 720.35 L599.5 720.67 L600.5 720.61 L601.5 718.39 L602.5 720.98 L603.5 720.73 L604.5 720.87 L605.5 720.95 L606.5 721.04 L607.5 719.19 L608.5 720.18 L609.5 720.61 L610.5 717.26 L611.5 720.77 L612.5 720.10 L613.5 719.28 L614.6 719.63 L615.6 720.09 L616.6 718.88 L617.6 719.64 L618.6 720.46 L619.6 718.97 L620.6 719.09 L621.6 711.75 L622.6 716.57 L623.6 721.32 L624.6 720.29 L625.6 719.01 L626.6 721.10 L627.6 720.59 L628.6 719.63 L629.6 720.02 L630.6 720.81 L631.6 718.23 L632.6 720.16 L633.6 719.67 L634.6 718.08 L635.6 720.54 L636.6 720.35 L637.6 719.22 L638.6 718.94 L639.6 720.67 L640.6 717.84 L641.6 719.74 L642.6 719.61 L643.6 719.42 L644.6 720.74 L645.6 721.14 L646.6 719.76 L647.6 719.86 L648.6 720.38 L649.6 718.30 L650.6 720.52 L651.6 719.82 L652.6 718.95 L653.6 721.14 L654.6 721.00 L655.6 719.07 L656.6 720.58 L657.6 720.42 L658.6 720.50 L659.6 719.95 L660.6 720.08 L661.6 719.83 L662.6 720.57 L663.6 720.47 L664.6 718.22 L665.6 720.30 L666.6 720.76 L667.6 720.69 L668.6 720.45 L669.6 720.05 L670.6 720.20 L671.6 720.64 L672.6 721.08 L673.6 719.71 L674.6 720.44 L675.6 721.05 L676.6 718.54 L677.6 720.18 L678.6 720.39 L679.6 718.34 L680.6 720.50 L681.6 719.72 L682.6 718.89 L683.6 715.59 L684.6 720.52 L685.6 719.06 L686.6 720.68 L687.6 720.23 L688.6 718.41 L689.6 719.56 L690.6 719.61 L691.6 718.47 L692.6 720.07 L693.6 719.85 L694.6 718.32 L695.6 719.57 L696.6 720.10 L697.6 718.42 L698.6 719.62 L699.6 720.69 L700.6 717.98 L701.6 720.33 L702.6 720.78 L703.6 718.34 L704.6 719.70 L705.6 720.26 L706.6 719.89 L707.6 720.22 L708.6 720.58 L709.6 719.61 L710.6 720.11 L711.6 719.23 L712.6 719.91 L713.6 719.46 L714.6 719.83 L715.6 718.79 L716.7 719.22 L717.7 719.57 L718.7 719.92 L719.7 720.10 L720.7 718.48 L721.7 714.71 L722.7 718.30 L723.7 719.71 L724.7 718.57 L725.7 720.24 L726.7 719.90 L727.7 718.52 L728.7 718.81 L729.7 720.13 L730.7 717.06 L731.7 719.59 L732.7 719.10 L733.7 717.64 L734.7 718.46 L735.7 720.01 L736.7 719.21 L737.7 718.95 L738.7 719.95 L739.7 718.45 L740.7 715.42 L741.7 718.77 L742.7 718.84 L743.7 719.76 L744.7 719.41 L745.7 718.86 L746.7 719.49 L747.7 719.39 L748.7 718.54 L749.7 719.95 L750.7 718.80 L751.7 717.55 L752.7 719.69 L753.7 719.07 L754.7 717.84 L755.7 720.37 L756.7 719.41 L757.7 717.97 L758.7 719.82 L759.7 719.70 L760.7 717.60 L761.7 720.18 L762.7 719.19 L763.7 718.87 L764.7 719.67 L765.7 718.89 L766.7 719.01 L767.7 719.35" fill="none" stroke="#b8457a" stroke-width="0.9" opacity="0.75"/><rect x="52.0" y="583.4" width="715.7" height="1.4" fill="#6fa862"/><text x="46.50" y="588.20" text-anchor="end" style="font-size:12.7px;fill:#ccccdc;stroke:#ccccdc;stroke-width:0.35px" >100%</text><text x="46.50" y="617.70" text-anchor="end" style="font-size:12.7px;fill:#ccccdc;stroke:#ccccdc;stroke-width:0.35px" >80%</text><text x="46.50" y="647.20" text-anchor="end" style="font-size:12.7px;fill:#ccccdc;stroke:#ccccdc;stroke-width:0.35px" >60%</text><text x="46.50" y="676.70" text-anchor="end" style="font-size:12.7px;fill:#ccccdc;stroke:#ccccdc;stroke-width:0.35px" >40%</text><text x="46.50" y="706.20" text-anchor="end" style="font-size:12.7px;fill:#ccccdc;stroke:#ccccdc;stroke-width:0.35px" >20%</text><text x="46.50" y="735.70" text-anchor="end" style="font-size:12.7px;fill:#ccccdc;stroke:#ccccdc;stroke-width:0.35px" >0%</text><text x="71.70" y="749.80" text-anchor="middle" style="font-size:12.7px;fill:#ccccdc;stroke:#ccccdc;stroke-width:0.35px" >16:00</text><text x="131.43" y="749.80" text-anchor="middle" style="font-size:12.7px;fill:#ccccdc;stroke:#ccccdc;stroke-width:0.35px" >18:00</text><text x="191.16" y="749.80" text-anchor="middle" style="font-size:12.7px;fill:#ccccdc;stroke:#ccccdc;stroke-width:0.35px" >20:00</text><text x="250.89" y="749.80" text-anchor="middle" style="font-size:12.7px;fill:#ccccdc;stroke:#ccccdc;stroke-width:0.35px" >22:00</text><text x="310.62" y="749.80" text-anchor="middle" style="font-size:12.7px;fill:#ccccdc;stroke:#ccccdc;stroke-width:0.35px" >00:00</text><text x="370.35" y="749.80" text-anchor="middle" style="font-size:12.7px;fill:#ccccdc;stroke:#ccccdc;stroke-width:0.35px" >02:00</text><text x="430.08" y="749.80" text-anchor="middle" style="font-size:12.7px;fill:#ccccdc;stroke:#ccccdc;stroke-width:0.35px" >04:00</text><text x="489.81" y="749.80" text-anchor="middle" style="font-size:12.7px;fill:#ccccdc;stroke:#ccccdc;stroke-width:0.35px" >06:00</text><text x="549.54" y="749.80" text-anchor="middle" style="font-size:12.7px;fill:#ccccdc;stroke:#ccccdc;stroke-width:0.35px" >08:00</text><text x="609.27" y="749.80" text-anchor="middle" style="font-size:12.7px;fill:#ccccdc;stroke:#ccccdc;stroke-width:0.35px" >10:00</text><text x="669.00" y="749.80" text-anchor="middle" style="font-size:12.7px;fill:#ccccdc;stroke:#ccccdc;stroke-width:0.35px" >12:00</text><text x="728.73" y="749.80" text-anchor="middle" style="font-size:12.7px;fill:#ccccdc;stroke:#ccccdc;stroke-width:0.35px" >14:00</text><rect x="14.8" y="769" width="14" height="4" rx="2" fill="#eab839"/><text x="37.00" y="774.10" text-anchor="start" style="font-size:12.7px;fill:#ccccdc;stroke:#ccccdc;stroke-width:0.35px" >Busy System</text><rect x="122.2" y="769" width="14" height="4" rx="2" fill="#0a4f9a"/><text x="144.10" y="774.10" text-anchor="start" style="font-size:12.7px;fill:#ccccdc;stroke:#ccccdc;stroke-width:0.35px" >Busy User</text><rect x="213.1" y="769" width="14" height="4" rx="2" fill="#8f1208"/><text x="235.30" y="774.10" text-anchor="start" style="font-size:12.7px;fill:#ccccdc;stroke:#ccccdc;stroke-width:0.35px" >Busy Iowait</text><rect x="312.1" y="769" width="14" height="4" rx="2" fill="#ff780a"/><text x="333.60" y="774.10" text-anchor="start" style="font-size:12.7px;fill:#ccccdc;stroke:#ccccdc;stroke-width:0.35px" >Busy IRQs</text><rect x="403.3" y="769" width="14" height="4" rx="2" fill="#7b2a6f"/><text x="424.80" y="774.10" text-anchor="start" style="font-size:12.7px;fill:#ccccdc;stroke:#ccccdc;stroke-width:0.35px" >Busy Other</text><rect x="499.5" y="769" width="14" height="4" rx="2" fill="#73bf69"/><text x="520.60" y="774.10" text-anchor="start" style="font-size:12.7px;fill:#ccccdc;stroke:#ccccdc;stroke-width:0.35px" >Idle</text><path d="M842.0 598.57 L843.0 598.57 L844.0 598.57 L845.0 598.57 L846.0 598.57 L847.0 598.57 L848.0 598.57 L849.0 598.57 L850.0 598.57 L851.0 598.57 L852.0 598.57 L853.0 598.57 L854.0 598.57 L855.0 598.57 L856.0 598.57 L857.0 598.57 L858.0 598.57 L859.0 598.57 L860.0 598.57 L861.0 598.57 L862.0 598.57 L863.0 598.57 L864.0 598.57 L865.0 598.57 L866.0 598.57 L867.0 598.57 L868.0 598.57 L869.0 598.57 L870.0 598.57 L871.0 598.57 L872.0 598.57 L873.0 598.57 L874.0 598.57 L875.0 598.57 L876.0 598.57 L877.0 598.57 L878.0 598.57 L879.0 598.57 L880.0 598.57 L881.0 598.57 L882.1 598.57 L883.1 598.57 L884.1 598.57 L885.1 598.57 L886.1 598.57 L887.1 598.57 L888.1 598.57 L889.1 598.57 L890.1 598.57 L891.1 598.57 L892.1 598.57 L893.1 598.57 L894.1 598.57 L895.1 598.57 L896.1 598.57 L897.1 598.57 L898.1 598.57 L899.1 598.57 L900.1 598.57 L901.1 598.57 L902.1 598.57 L903.1 598.57 L904.1 598.57 L905.1 598.57 L906.1 598.57 L907.1 598.57 L908.1 598.57 L909.1 598.57 L910.1 598.57 L911.1 598.57 L912.1 598.57 L913.1 598.57 L914.1 598.57 L915.1 598.57 L916.1 598.57 L917.1 598.57 L918.1 598.57 L919.1 598.57 L920.1 598.57 L921.1 598.57 L922.1 598.57 L923.1 598.57 L924.1 598.57 L925.1 598.57 L926.1 598.57 L927.1 598.57 L928.1 598.57 L929.1 598.57 L930.1 598.57 L931.1 598.57 L932.1 598.57 L933.1 598.57 L934.1 598.57 L935.1 598.57 L936.1 598.57 L937.1 598.57 L938.1 598.57 L939.1 598.57 L940.1 598.57 L941.1 598.57 L942.1 598.57 L943.1 598.57 L944.1 598.57 L945.1 598.57 L946.1 598.57 L947.1 598.57 L948.1 598.57 L949.1 598.57 L950.1 598.57 L951.1 598.57 L952.1 598.57 L953.1 598.57 L954.1 598.57 L955.1 598.57 L956.1 598.57 L957.1 598.57 L958.1 598.57 L959.1 598.57 L960.1 598.57 L961.1 598.57 L962.2 598.57 L963.2 598.57 L964.2 598.57 L965.2 598.57 L966.2 598.57 L967.2 598.57 L968.2 598.57 L969.2 598.57 L970.2 598.57 L971.2 598.57 L972.2 598.57 L973.2 598.57 L974.2 598.57 L975.2 598.57 L976.2 598.57 L977.2 598.57 L978.2 598.57 L979.2 598.57 L980.2 598.57 L981.2 598.57 L982.2 598.57 L983.2 598.57 L984.2 598.57 L985.2 598.57 L986.2 598.57 L987.2 598.57 L988.2 598.57 L989.2 598.57 L990.2 598.57 L991.2 598.57 L992.2 598.57 L993.2 598.57 L994.2 598.57 L995.2 598.57 L996.2 598.57 L997.2 598.57 L998.2 598.57 L999.2 598.57 L1000.2 598.57 L1001.2 598.57 L1002.2 598.57 L1003.2 598.57 L1004.2 598.57 L1005.2 598.57 L1006.2 598.57 L1007.2 598.57 L1008.2 598.57 L1009.2 598.57 L1010.2 598.57 L1011.2 598.57 L1012.2 598.57 L1013.2 598.57 L1014.2 598.57 L1015.2 598.57 L1016.2 598.57 L1017.2 598.57 L1018.2 598.57 L1019.2 598.57 L1020.2 598.57 L1021.2 598.57 L1022.2 598.57 L1023.2 598.57 L1024.2 598.57 L1025.2 598.57 L1026.2 598.57 L1027.2 598.57 L1028.2 598.57 L1029.2 598.57 L1030.2 598.57 L1031.2 598.57 L1032.2 598.57 L1033.2 598.57 L1034.2 598.57 L1035.2 598.57 L1036.2 598.57 L1037.2 598.57 L1038.2 598.57 L1039.2 598.57 L1040.2 598.57 L1041.3 598.57 L1042.3 598.57 L1043.3 598.57 L1044.3 598.57 L1045.3 598.57 L1046.3 598.57 L1047.3 598.57 L1048.3 598.57 L1049.3 598.57 L1050.3 598.57 L1051.3 598.57 L1052.3 598.57 L1053.3 598.57 L1054.3 598.57 L1055.3 598.57 L1056.3 598.57 L1057.3 598.57 L1058.3 598.57 L1059.3 598.57 L1060.3 598.57 L1061.3 598.57 L1062.3 598.57 L1063.3 598.57 L1064.3 598.57 L1065.3 598.57 L1066.3 598.57 L1067.3 598.57 L1068.3 598.57 L1069.3 598.57 L1070.3 598.57 L1071.3 598.57 L1072.3 598.57 L1073.3 598.57 L1074.3 598.57 L1075.3 598.57 L1076.3 598.57 L1077.3 598.57 L1078.3 598.57 L1079.3 598.57 L1080.3 598.57 L1081.3 598.57 L1082.3 598.57 L1083.3 598.57 L1084.3 598.57 L1085.3 598.57 L1086.3 598.57 L1087.3 598.57 L1088.3 598.57 L1089.3 598.57 L1090.3 598.57 L1091.3 598.57 L1092.3 598.57 L1093.3 598.57 L1094.3 598.57 L1095.3 598.57 L1096.3 598.57 L1097.3 598.57 L1098.3 598.57 L1099.3 598.57 L1100.3 598.57 L1101.3 598.57 L1102.3 598.57 L1103.3 598.57 L1104.3 598.57 L1105.3 598.57 L1106.3 598.57 L1107.3 598.57 L1108.3 598.57 L1109.3 598.57 L1110.3 598.57 L1111.3 598.57 L1112.3 598.57 L1113.3 598.57 L1114.3 598.57 L1115.3 598.57 L1116.3 598.57 L1117.3 598.57 L1118.3 598.57 L1119.3 598.57 L1120.3 598.57 L1121.4 598.57 L1122.4 598.57 L1123.4 598.57 L1124.4 598.57 L1125.4 598.57 L1126.4 598.57 L1127.4 598.57 L1128.4 598.57 L1129.4 598.57 L1130.4 598.57 L1131.4 598.57 L1132.4 598.57 L1133.4 598.57 L1134.4 598.57 L1135.4 598.57 L1136.4 598.57 L1137.4 598.57 L1138.4 598.57 L1139.4 598.57 L1140.4 598.57 L1141.4 598.57 L1142.4 598.57 L1143.4 598.57 L1144.4 598.57 L1145.4 598.57 L1146.4 598.57 L1147.4 598.57 L1148.4 598.57 L1149.4 598.57 L1150.4 598.57 L1151.4 598.57 L1152.4 598.57 L1153.4 598.57 L1154.4 598.57 L1155.4 598.57 L1156.4 598.57 L1157.4 598.57 L1158.4 598.57 L1159.4 598.57 L1160.4 598.57 L1161.4 598.57 L1162.4 598.57 L1163.4 598.57 L1164.4 598.57 L1165.4 598.57 L1166.4 598.57 L1167.4 598.57 L1168.4 598.57 L1169.4 598.57 L1170.4 598.57 L1171.4 598.57 L1172.4 598.57 L1173.4 598.57 L1174.4 598.57 L1175.4 598.57 L1176.4 598.57 L1177.4 598.57 L1178.4 598.57 L1179.4 598.57 L1180.4 598.57 L1181.4 598.57 L1182.4 598.57 L1183.4 598.57 L1184.4 598.57 L1185.4 598.57 L1186.4 598.57 L1187.4 598.57 L1188.4 598.57 L1189.4 598.57 L1190.4 598.57 L1191.4 598.57 L1192.4 598.57 L1193.4 598.57 L1194.4 598.57 L1195.4 598.57 L1196.4 598.57 L1197.4 598.57 L1198.4 598.57 L1199.4 598.57 L1200.5 598.57 L1201.5 598.57 L1202.5 598.57 L1203.5 598.57 L1204.5 598.57 L1205.5 598.57 L1206.5 598.57 L1207.5 598.57 L1208.5 598.57 L1209.5 598.57 L1210.5 598.57 L1211.5 598.57 L1212.5 598.57 L1213.5 598.57 L1214.5 598.57 L1215.5 598.57 L1216.5 598.57 L1217.5 598.57 L1218.5 598.57 L1219.5 598.57 L1220.5 598.57 L1221.5 598.57 L1222.5 598.57 L1223.5 598.57 L1224.5 598.57 L1225.5 598.57 L1226.5 598.57 L1227.5 598.57 L1228.5 598.57 L1229.5 598.57 L1230.5 598.57 L1231.5 598.57 L1232.5 598.57 L1233.5 598.57 L1234.5 598.57 L1235.5 598.57 L1236.5 598.57 L1237.5 598.57 L1238.5 598.57 L1239.5 598.57 L1240.5 598.57 L1241.5 598.57 L1242.5 598.57 L1243.5 598.57 L1244.5 598.57 L1245.5 598.57 L1246.5 598.57 L1247.5 598.57 L1248.5 598.57 L1249.5 598.57 L1250.5 598.57 L1251.5 598.57 L1252.5 598.57 L1253.5 598.57 L1254.5 598.57 L1255.5 598.57 L1256.5 598.57 L1257.5 598.57 L1258.5 598.57 L1259.5 598.57 L1260.5 598.57 L1261.5 598.57 L1262.5 598.57 L1263.5 598.57 L1264.5 598.57 L1265.5 598.57 L1266.5 598.57 L1267.5 598.57 L1268.5 598.57 L1269.5 598.57 L1270.5 598.57 L1271.5 598.57 L1272.5 598.57 L1273.5 598.57 L1274.5 598.57 L1275.5 598.57 L1276.5 598.57 L1277.5 598.57 L1278.5 598.57 L1279.5 598.57 L1280.6 598.57 L1281.6 598.57 L1282.6 598.57 L1283.6 598.57 L1284.6 598.57 L1285.6 598.57 L1286.6 598.57 L1287.6 598.57 L1288.6 598.57 L1289.6 598.57 L1290.6 598.57 L1291.6 598.57 L1292.6 598.57 L1293.6 598.57 L1294.6 598.57 L1295.6 598.57 L1296.6 598.57 L1297.6 598.57 L1298.6 598.57 L1299.6 598.57 L1300.6 598.57 L1301.6 598.57 L1302.6 598.57 L1303.6 598.57 L1304.6 598.57 L1305.6 598.57 L1306.6 598.57 L1307.6 598.57 L1308.6 598.57 L1309.6 598.57 L1310.6 598.57 L1311.6 598.57 L1312.6 598.57 L1313.6 598.57 L1314.6 598.57 L1315.6 598.57 L1316.6 598.57 L1317.6 598.57 L1318.6 598.57 L1319.6 598.57 L1320.6 598.57 L1321.6 598.57 L1322.6 598.57 L1323.6 598.57 L1324.6 598.57 L1325.6 598.57 L1326.6 598.57 L1327.6 598.57 L1328.6 598.57 L1329.6 598.57 L1330.6 598.57 L1331.6 598.57 L1332.6 598.57 L1333.6 598.57 L1334.6 598.57 L1335.6 598.57 L1336.6 598.57 L1337.6 598.57 L1338.6 598.57 L1339.6 598.57 L1340.6 598.57 L1341.6 598.57 L1342.6 598.57 L1343.6 598.57 L1344.6 598.57 L1345.6 598.57 L1346.6 598.57 L1347.6 598.57 L1348.6 598.57 L1349.6 598.57 L1350.6 598.57 L1351.6 598.57 L1352.6 598.57 L1353.6 598.57 L1354.6 598.57 L1355.6 598.57 L1356.6 598.57 L1357.6 598.57 L1358.6 598.57 L1359.6 598.57 L1360.7 598.57 L1361.7 598.57 L1362.7 598.57 L1363.7 598.57 L1364.7 598.57 L1365.7 598.57 L1366.7 598.57 L1367.7 598.57 L1368.7 598.57 L1369.7 598.57 L1370.7 598.57 L1371.7 598.57 L1372.7 598.57 L1373.7 598.57 L1374.7 598.57 L1375.7 598.57 L1376.7 598.57 L1377.7 598.57 L1378.7 598.57 L1379.7 598.57 L1380.7 598.57 L1381.7 598.57 L1382.7 598.57 L1383.7 598.57 L1384.7 598.57 L1385.7 598.57 L1386.7 598.57 L1387.7 598.57 L1388.7 598.57 L1389.7 598.57 L1390.7 598.57 L1391.7 598.57 L1392.7 598.57 L1393.7 598.57 L1394.7 598.57 L1395.7 598.57 L1396.7 598.57 L1397.7 598.57 L1398.7 598.57 L1399.7 598.57 L1400.7 598.57 L1401.7 598.57 L1402.7 598.57 L1403.7 598.57 L1404.7 598.57 L1405.7 598.57 L1406.7 598.57 L1407.7 598.57 L1408.7 598.57 L1409.7 598.57 L1410.7 598.57 L1411.7 598.57 L1412.7 598.57 L1413.7 598.57 L1414.7 598.57 L1415.7 598.57 L1416.7 598.57 L1417.7 598.57 L1418.7 598.57 L1419.7 598.57 L1420.7 598.57 L1421.7 598.57 L1422.7 598.57 L1423.7 598.57 L1424.7 598.57 L1425.7 598.57 L1426.7 598.57 L1427.7 598.57 L1428.7 598.57 L1429.7 598.57 L1430.7 598.57 L1431.7 598.57 L1432.7 598.57 L1433.7 598.57 L1434.7 598.57 L1435.7 598.57 L1436.7 598.57 L1437.7 598.57 L1438.7 598.57 L1439.8 598.57 L1440.8 598.57 L1441.8 598.57 L1442.8 598.57 L1443.8 598.57 L1444.8 598.57 L1445.8 598.57 L1446.8 598.57 L1447.8 598.57 L1448.8 598.57 L1449.8 598.57 L1450.8 598.57 L1451.8 598.57 L1452.8 598.57 L1453.8 598.57 L1454.8 598.57 L1455.8 598.57 L1456.8 598.57 L1457.8 598.57 L1458.8 598.57 L1459.8 598.57 L1460.8 598.57 L1461.8 598.57 L1462.8 598.57 L1463.8 598.57 L1464.8 598.57 L1465.8 598.57 L1466.8 598.57 L1467.8 598.57 L1468.8 598.57 L1469.8 598.57 L1470.8 598.57 L1471.8 598.57 L1472.8 598.57 L1473.8 598.57 L1474.8 598.57 L1475.8 598.57 L1476.8 598.57 L1477.8 598.57 L1478.8 598.57 L1479.8 598.57 L1480.8 598.57 L1481.8 598.57 L1482.8 598.57 L1483.8 598.57 L1484.8 598.57 L1485.8 598.57 L1486.8 598.57 L1487.8 598.57 L1488.8 598.57 L1489.8 598.57 L1490.8 598.57 L1491.8 598.57 L1492.8 598.57 L1493.8 598.57 L1494.8 598.57 L1495.8 598.57 L1496.8 598.57 L1497.8 598.57 L1498.8 598.57 L1499.8 598.57 L1500.8 598.57 L1501.8 598.57 L1502.8 598.57 L1503.8 598.57 L1504.8 598.57 L1505.8 598.57 L1506.8 598.57 L1507.8 598.57 L1508.8 598.57 L1509.8 598.57 L1510.8 598.57 L1511.8 598.57 L1512.8 598.57 L1513.8 598.57 L1514.8 598.57 L1515.8 598.57 L1516.8 598.57 L1517.8 598.57 L1518.8 598.57 L1519.9 598.57 L1520.9 598.57 L1521.9 598.57 L1522.9 598.57 L1523.9 598.57 L1524.9 598.57 L1525.9 598.57 L1526.9 598.57 L1527.9 598.57 L1528.9 598.57 L1529.9 598.57 L1530.9 598.57 L1531.9 598.57 L1532.9 598.57 L1533.9 598.57 L1534.9 598.57 L1535.9 598.57 L1536.9 598.57 L1537.9 598.57 L1538.9 598.57 L1539.9 598.57 L1540.9 598.57 L1541.9 598.57 L1542.9 598.57 L1543.9 598.57 L1544.9 598.57 L1545.9 598.57 L1546.9 598.57 L1547.9 598.57 L1548.9 598.57 L1549.9 598.57 L1550.9 598.57 L1551.9 598.57 L1552.9 598.57 L1553.9 598.57 L1554.9 598.57 L1555.9 598.57 L1556.9 598.57 L1557.9 598.57 L1558.9 598.57 L1558.9 604.61 L1557.9 603.93 L1556.9 602.93 L1555.9 602.94 L1554.9 605.08 L1553.9 605.31 L1552.9 604.74 L1551.9 600.77 L1550.9 602.88 L1549.9 604.69 L1548.9 604.66 L1547.9 602.82 L1546.9 602.47 L1545.9 603.92 L1544.9 604.95 L1543.9 603.92 L1542.9 602.91 L1541.9 605.14 L1540.9 604.95 L1539.9 604.54 L1538.9 605.02 L1537.9 604.41 L1536.9 603.69 L1535.9 604.20 L1534.9 604.51 L1533.9 605.35 L1532.9 602.85 L1531.9 604.68 L1530.9 604.63 L1529.9 604.91 L1528.9 604.89 L1527.9 603.46 L1526.9 603.63 L1525.9 604.43 L1524.9 604.74 L1523.9 604.95 L1522.9 604.50 L1521.9 604.71 L1520.9 605.23 L1519.9 604.97 L1518.8 604.46 L1517.8 602.58 L1516.8 603.88 L1515.8 604.34 L1514.8 605.22 L1513.8 604.92 L1512.8 603.46 L1511.8 604.99 L1510.8 606.17 L1509.8 605.81 L1508.8 606.39 L1507.8 605.43 L1506.8 602.64 L1505.8 604.49 L1504.8 605.09 L1503.8 606.59 L1502.8 604.00 L1501.8 604.22 L1500.8 606.38 L1499.8 605.43 L1498.8 606.05 L1497.8 604.35 L1496.8 604.50 L1495.8 606.21 L1494.8 605.83 L1493.8 606.33 L1492.8 603.61 L1491.8 604.61 L1490.8 606.29 L1489.8 606.10 L1488.8 605.48 L1487.8 604.44 L1486.8 606.03 L1485.8 605.78 L1484.8 606.22 L1483.8 605.96 L1482.8 603.58 L1481.8 606.18 L1480.8 605.35 L1479.8 606.03 L1478.8 604.77 L1477.8 604.59 L1476.8 604.97 L1475.8 605.32 L1474.8 606.41 L1473.8 604.55 L1472.8 604.11 L1471.8 605.84 L1470.8 606.40 L1469.8 606.99 L1468.8 605.73 L1467.8 604.42 L1466.8 607.37 L1465.8 606.17 L1464.8 607.13 L1463.8 604.94 L1462.8 603.14 L1461.8 606.33 L1460.8 605.67 L1459.8 605.81 L1458.8 605.86 L1457.8 605.36 L1456.8 606.42 L1455.8 607.04 L1454.8 606.69 L1453.8 605.34 L1452.8 606.33 L1451.8 607.04 L1450.8 606.94 L1449.8 606.32 L1448.8 604.03 L1447.8 606.59 L1446.8 606.95 L1445.8 606.21 L1444.8 606.48 L1443.8 606.31 L1442.8 606.92 L1441.8 607.52 L1440.8 607.53 L1439.8 607.31 L1438.7 605.56 L1437.7 606.21 L1436.7 606.36 L1435.7 606.95 L1434.7 605.01 L1433.7 605.04 L1432.7 606.67 L1431.7 607.66 L1430.7 607.65 L1429.7 604.84 L1428.7 605.51 L1427.7 607.91 L1426.7 607.26 L1425.7 607.80 L1424.7 606.11 L1423.7 606.70 L1422.7 607.30 L1421.7 607.29 L1420.7 607.86 L1419.7 607.60 L1418.7 604.01 L1417.7 606.56 L1416.7 607.12 L1415.7 607.25 L1414.7 604.34 L1413.7 604.96 L1412.7 607.28 L1411.7 608.22 L1410.7 607.83 L1409.7 607.04 L1408.7 607.28 L1407.7 608.01 L1406.7 608.40 L1405.7 606.23 L1404.7 607.15 L1403.7 608.45 L1402.7 608.57 L1401.7 608.92 L1400.7 607.21 L1399.7 606.72 L1398.7 608.08 L1397.7 607.82 L1396.7 607.87 L1395.7 606.95 L1394.7 605.51 L1393.7 607.64 L1392.7 607.37 L1391.7 607.38 L1390.7 608.27 L1389.7 605.37 L1388.7 606.43 L1387.7 607.97 L1386.7 608.15 L1385.7 608.37 L1384.7 607.51 L1383.7 606.97 L1382.7 609.16 L1381.7 608.44 L1380.7 608.10 L1379.7 606.20 L1378.7 608.54 L1377.7 607.59 L1376.7 608.14 L1375.7 604.43 L1374.7 607.78 L1373.7 608.51 L1372.7 608.27 L1371.7 608.22 L1370.7 607.21 L1369.7 605.45 L1368.7 608.93 L1367.7 608.49 L1366.7 608.30 L1365.7 605.60 L1364.7 607.04 L1363.7 609.12 L1362.7 609.23 L1361.7 608.20 L1360.7 606.73 L1359.6 608.55 L1358.6 609.59 L1357.6 608.86 L1356.6 607.99 L1355.6 607.92 L1354.6 608.48 L1353.6 608.72 L1352.6 609.50 L1351.6 608.56 L1350.6 608.54 L1349.6 607.93 L1348.6 608.54 L1347.6 609.19 L1346.6 609.52 L1345.6 607.23 L1344.6 608.07 L1343.6 609.61 L1342.6 609.02 L1341.6 608.16 L1340.6 606.70 L1339.6 608.26 L1338.6 609.05 L1337.6 608.98 L1336.6 610.20 L1335.6 607.15 L1334.6 607.75 L1333.6 609.09 L1332.6 609.44 L1331.6 609.41 L1330.6 608.77 L1329.6 608.16 L1328.6 609.02 L1327.6 610.10 L1326.6 610.37 L1325.6 609.62 L1324.6 608.49 L1323.6 608.58 L1322.6 609.15 L1321.6 609.02 L1320.6 609.96 L1319.6 609.41 L1318.6 607.38 L1317.6 609.20 L1316.6 609.56 L1315.6 609.81 L1314.6 609.66 L1313.6 608.84 L1312.6 609.78 L1311.6 608.81 L1310.6 609.05 L1309.6 607.38 L1308.6 608.85 L1307.6 609.19 L1306.6 609.71 L1305.6 609.65 L1304.6 610.46 L1303.6 607.29 L1302.6 609.03 L1301.6 609.29 L1300.6 609.44 L1299.6 609.07 L1298.6 608.86 L1297.6 609.72 L1296.6 609.98 L1295.6 610.12 L1294.6 607.54 L1293.6 609.08 L1292.6 609.86 L1291.6 609.61 L1290.6 609.96 L1289.6 609.48 L1288.6 608.75 L1287.6 611.05 L1286.6 610.42 L1285.6 609.64 L1284.6 609.73 L1283.6 608.36 L1282.6 610.06 L1281.6 610.82 L1280.6 610.62 L1279.5 609.19 L1278.5 608.19 L1277.5 610.60 L1276.5 610.55 L1275.5 610.94 L1274.5 611.36 L1273.5 609.81 L1272.5 609.88 L1271.5 611.03 L1270.5 610.76 L1269.5 610.65 L1268.5 608.77 L1267.5 610.37 L1266.5 610.52 L1265.5 611.43 L1264.5 609.25 L1263.5 609.92 L1262.5 611.44 L1261.5 610.74 L1260.5 611.67 L1259.5 610.78 L1258.5 609.23 L1257.5 611.35 L1256.5 610.68 L1255.5 611.61 L1254.5 610.89 L1253.5 610.11 L1252.5 610.55 L1251.5 610.56 L1250.5 610.49 L1249.5 609.75 L1248.5 611.18 L1247.5 612.20 L1246.5 611.07 L1245.5 611.29 L1244.5 610.88 L1243.5 609.46 L1242.5 610.11 L1241.5 611.43 L1240.5 611.24 L1239.5 609.44 L1238.5 609.95 L1237.5 611.37 L1236.5 611.80 L1235.5 611.62 L1234.5 610.91 L1233.5 608.52 L1232.5 609.92 L1231.5 611.01 L1230.5 612.01 L1229.5 610.06 L1228.5 609.76 L1227.5 611.45 L1226.5 611.63 L1225.5 611.68 L1224.5 610.05 L1223.5 610.51 L1222.5 612.73 L1221.5 613.05 L1220.5 612.66 L1219.5 612.32 L1218.5 611.03 L1217.5 610.20 L1216.5 612.51 L1215.5 611.91 L1214.5 612.75 L1213.5 610.58 L1212.5 610.79 L1211.5 612.01 L1210.5 611.62 L1209.5 612.68 L1208.5 611.14 L1207.5 609.97 L1206.5 611.85 L1205.5 612.90 L1204.5 612.89 L1203.5 610.07 L1202.5 611.47 L1201.5 611.52 L1200.5 611.90 L1199.4 612.13 L1198.4 612.24 L1197.4 609.41 L1196.4 610.82 L1195.4 612.51 L1194.4 612.87 L1193.4 611.97 L1192.4 609.41 L1191.4 611.62 L1190.4 613.05 L1189.4 611.98 L1188.4 611.42 L1187.4 609.36 L1186.4 611.39 L1185.4 612.55 L1184.4 612.59 L1183.4 612.84 L1182.4 611.33 L1181.4 613.48 L1180.4 613.04 L1179.4 612.41 L1178.4 611.93 L1177.4 611.91 L1176.4 612.08 L1175.4 612.73 L1174.4 612.32 L1173.4 612.41 L1172.4 611.59 L1171.4 612.20 L1170.4 612.91 L1169.4 613.66 L1168.4 613.95 L1167.4 613.17 L1166.4 611.03 L1165.4 613.90 L1164.4 613.68 L1163.4 613.78 L1162.4 611.95 L1161.4 611.58 L1160.4 612.82 L1159.4 612.43 L1158.4 612.48 L1157.4 611.76 L1156.4 612.09 L1155.4 613.66 L1154.4 613.49 L1153.4 614.10 L1152.4 613.28 L1151.4 611.72 L1150.4 612.12 L1149.4 612.98 L1148.4 613.07 L1147.4 613.29 L1146.4 612.61 L1145.4 612.03 L1144.4 613.40 L1143.4 613.95 L1142.4 612.14 L1141.4 612.47 L1140.4 613.57 L1139.4 613.46 L1138.4 614.79 L1137.4 613.31 L1136.4 613.00 L1135.4 614.40 L1134.4 614.40 L1133.4 613.89 L1132.4 612.50 L1131.4 612.70 L1130.4 614.08 L1129.4 614.42 L1128.4 614.71 L1127.4 613.59 L1126.4 610.31 L1125.4 614.48 L1124.4 615.02 L1123.4 614.16 L1122.4 612.89 L1121.4 613.80 L1120.3 613.68 L1119.3 613.21 L1118.3 613.24 L1117.3 610.94 L1116.3 612.58 L1115.3 615.18 L1114.3 614.55 L1113.3 614.64 L1112.3 615.32 L1111.3 613.27 L1110.3 613.18 L1109.3 615.39 L1108.3 614.89 L1107.3 614.79 L1106.3 612.71 L1105.3 612.88 L1104.3 614.83 L1103.3 615.26 L1102.3 612.91 L1101.3 612.42 L1100.3 615.26 L1099.3 615.22 L1098.3 614.28 L1097.3 613.32 L1096.3 614.48 L1095.3 615.20 L1094.3 615.63 L1093.3 615.06 L1092.3 613.71 L1091.3 613.90 L1090.3 615.14 L1089.3 614.50 L1088.3 613.90 L1087.3 613.27 L1086.3 614.13 L1085.3 615.14 L1084.3 615.44 L1083.3 614.22 L1082.3 612.97 L1081.3 614.88 L1080.3 615.43 L1079.3 615.55 L1078.3 615.16 L1077.3 614.02 L1076.3 612.15 L1075.3 614.81 L1074.3 615.35 L1073.3 615.17 L1072.3 612.88 L1071.3 614.63 L1070.3 614.77 L1069.3 615.60 L1068.3 614.23 L1067.3 613.56 L1066.3 615.24 L1065.3 615.54 L1064.3 615.54 L1063.3 615.72 L1062.3 614.69 L1061.3 614.20 L1060.3 614.63 L1059.3 615.31 L1058.3 615.89 L1057.3 614.14 L1056.3 613.48 L1055.3 615.36 L1054.3 616.31 L1053.3 615.72 L1052.3 615.12 L1051.3 612.30 L1050.3 614.72 L1049.3 615.25 L1048.3 615.92 L1047.3 615.44 L1046.3 611.51 L1045.3 614.47 L1044.3 616.62 L1043.3 616.52 L1042.3 615.97 L1041.3 616.55 L1040.2 615.46 L1039.2 616.39 L1038.2 616.36 L1037.2 615.10 L1036.2 615.01 L1035.2 614.78 L1034.2 615.15 L1033.2 615.00 L1032.2 615.68 L1031.2 615.50 L1030.2 615.83 L1029.2 615.37 L1028.2 614.67 L1027.2 615.03 L1026.2 615.41 L1025.2 615.04 L1024.2 615.55 L1023.2 615.17 L1022.2 616.08 L1021.2 615.41 L1020.2 615.81 L1019.2 616.12 L1018.2 616.61 L1017.2 616.23 L1016.2 615.40 L1015.2 615.71 L1014.2 615.16 L1013.2 616.52 L1012.2 615.57 L1011.2 616.61 L1010.2 616.35 L1009.2 615.77 L1008.2 616.37 L1007.2 615.44 L1006.2 616.10 L1005.2 616.12 L1004.2 615.32 L1003.2 615.51 L1002.2 615.30 L1001.2 616.47 L1000.2 615.41 L999.2 616.39 L998.2 616.37 L997.2 614.79 L996.2 615.11 L995.2 615.93 L994.2 616.31 L993.2 615.88 L992.2 615.19 L991.2 616.23 L990.2 615.82 L989.2 616.70 L988.2 616.53 L987.2 615.76 L986.2 616.61 L985.2 616.46 L984.2 615.14 L983.2 616.50 L982.2 616.11 L981.2 616.16 L980.2 616.30 L979.2 615.70 L978.2 615.17 L977.2 616.33 L976.2 616.34 L975.2 616.30 L974.2 615.85 L973.2 615.08 L972.2 615.65 L971.2 615.93 L970.2 615.71 L969.2 616.12 L968.2 615.47 L967.2 615.87 L966.2 615.95 L965.2 616.16 L964.2 616.00 L963.2 615.14 L962.2 615.06 L961.1 615.98 L960.1 615.90 L959.1 615.29 L958.1 615.26 L957.1 615.32 L956.1 615.03 L955.1 615.81 L954.1 616.43 L953.1 615.36 L952.1 615.97 L951.1 615.91 L950.1 615.26 L949.1 616.24 L948.1 616.58 L947.1 616.06 L946.1 615.75 L945.1 615.52 L944.1 615.78 L943.1 615.55 L942.1 616.45 L941.1 616.67 L940.1 615.70 L939.1 615.22 L938.1 616.33 L937.1 615.75 L936.1 615.90 L935.1 615.09 L934.1 615.46 L933.1 615.23 L932.1 615.63 L931.1 615.28 L930.1 609.90 L929.1 610.33 L928.1 610.26 L927.1 610.55 L926.1 610.81 L925.1 610.95 L924.1 609.70 L923.1 609.96 L922.1 610.85 L921.1 610.98 L920.1 611.62 L919.1 611.19 L918.1 611.19 L917.1 611.41 L916.1 612.04 L915.1 612.51 L914.1 612.48 L913.1 611.42 L912.1 611.90 L911.1 612.11 L910.1 612.01 L909.1 613.07 L908.1 611.93 L907.1 612.47 L906.1 612.77 L905.1 612.49 L904.1 613.04 L903.1 612.49 L902.1 612.83 L901.1 614.44 L900.1 613.56 L899.1 613.86 L898.1 613.44 L897.1 613.31 L896.1 615.03 L895.1 614.69 L894.1 614.86 L893.1 614.22 L892.1 614.43 L891.1 615.31 L890.1 614.59 L889.1 615.34 L888.1 614.53 L887.1 614.64 L886.1 615.33 L885.1 614.75 L884.1 615.40 L883.1 615.75 L882.1 616.75 L881.0 616.84 L880.0 602.42 L879.0 602.28 L878.0 602.84 L877.0 602.08 L876.0 602.53 L875.0 601.93 L874.0 602.11 L873.0 601.66 L872.0 602.97 L871.0 601.41 L870.0 602.28 L869.0 602.21 L868.0 601.17 L867.0 601.88 L866.0 602.73 L865.0 601.78 L864.0 601.42 L863.0 601.07 L862.0 601.74 L861.0 601.80 L860.0 602.96 L859.0 602.46 L858.0 602.34 L857.0 602.63 L856.0 602.41 L855.0 601.50 L854.0 602.47 L853.0 602.85 L852.0 601.33 L851.0 601.28 L850.0 602.72 L849.0 601.81 L848.0 602.39 L847.0 603.01 L846.0 602.19 L845.0 601.73 L844.0 602.44 L843.0 602.05 L842.0 602.60Z" fill="#41573f"/><path d="M842.0 602.60 L843.0 602.05 L844.0 602.44 L845.0 601.73 L846.0 602.19 L847.0 603.01 L848.0 602.39 L849.0 601.81 L850.0 602.72 L851.0 601.28 L852.0 601.33 L853.0 602.85 L854.0 602.47 L855.0 601.50 L856.0 602.41 L857.0 602.63 L858.0 602.34 L859.0 602.46 L860.0 602.96 L861.0 601.80 L862.0 601.74 L863.0 601.07 L864.0 601.42 L865.0 601.78 L866.0 602.73 L867.0 601.88 L868.0 601.17 L869.0 602.21 L870.0 602.28 L871.0 601.41 L872.0 602.97 L873.0 601.66 L874.0 602.11 L875.0 601.93 L876.0 602.53 L877.0 602.08 L878.0 602.84 L879.0 602.28 L880.0 602.42 L881.0 616.84 L882.1 616.75 L883.1 615.75 L884.1 615.40 L885.1 614.75 L886.1 615.33 L887.1 614.64 L888.1 614.53 L889.1 615.34 L890.1 614.59 L891.1 615.31 L892.1 614.43 L893.1 614.22 L894.1 614.86 L895.1 614.69 L896.1 615.03 L897.1 613.31 L898.1 613.44 L899.1 613.86 L900.1 613.56 L901.1 614.44 L902.1 612.83 L903.1 612.49 L904.1 613.04 L905.1 612.49 L906.1 612.77 L907.1 612.47 L908.1 611.93 L909.1 613.07 L910.1 612.01 L911.1 612.11 L912.1 611.90 L913.1 611.42 L914.1 612.48 L915.1 612.51 L916.1 612.04 L917.1 611.41 L918.1 611.19 L919.1 611.19 L920.1 611.62 L921.1 610.98 L922.1 610.85 L923.1 609.96 L924.1 609.70 L925.1 610.95 L926.1 610.81 L927.1 610.55 L928.1 610.26 L929.1 610.33 L930.1 609.90 L931.1 615.28 L932.1 615.63 L933.1 615.23 L934.1 615.46 L935.1 615.09 L936.1 615.90 L937.1 615.75 L938.1 616.33 L939.1 615.22 L940.1 615.70 L941.1 616.67 L942.1 616.45 L943.1 615.55 L944.1 615.78 L945.1 615.52 L946.1 615.75 L947.1 616.06 L948.1 616.58 L949.1 616.24 L950.1 615.26 L951.1 615.91 L952.1 615.97 L953.1 615.36 L954.1 616.43 L955.1 615.81 L956.1 615.03 L957.1 615.32 L958.1 615.26 L959.1 615.29 L960.1 615.90 L961.1 615.98 L962.2 615.06 L963.2 615.14 L964.2 616.00 L965.2 616.16 L966.2 615.95 L967.2 615.87 L968.2 615.47 L969.2 616.12 L970.2 615.71 L971.2 615.93 L972.2 615.65 L973.2 615.08 L974.2 615.85 L975.2 616.30 L976.2 616.34 L977.2 616.33 L978.2 615.17 L979.2 615.70 L980.2 616.30 L981.2 616.16 L982.2 616.11 L983.2 616.50 L984.2 615.14 L985.2 616.46 L986.2 616.61 L987.2 615.76 L988.2 616.53 L989.2 616.70 L990.2 615.82 L991.2 616.23 L992.2 615.19 L993.2 615.88 L994.2 616.31 L995.2 615.93 L996.2 615.11 L997.2 614.79 L998.2 616.37 L999.2 616.39 L1000.2 615.41 L1001.2 616.47 L1002.2 615.30 L1003.2 615.51 L1004.2 615.32 L1005.2 616.12 L1006.2 616.10 L1007.2 615.44 L1008.2 616.37 L1009.2 615.77 L1010.2 616.35 L1011.2 616.61 L1012.2 615.57 L1013.2 616.52 L1014.2 615.16 L1015.2 615.71 L1016.2 615.40 L1017.2 616.23 L1018.2 616.61 L1019.2 616.12 L1020.2 615.81 L1021.2 615.41 L1022.2 616.08 L1023.2 615.17 L1024.2 615.55 L1025.2 615.04 L1026.2 615.41 L1027.2 615.03 L1028.2 614.67 L1029.2 615.37 L1030.2 615.83 L1031.2 615.50 L1032.2 615.68 L1033.2 615.00 L1034.2 615.15 L1035.2 614.78 L1036.2 615.01 L1037.2 615.10 L1038.2 616.36 L1039.2 616.39 L1040.2 615.46 L1041.3 616.55 L1042.3 615.97 L1043.3 616.52 L1044.3 616.62 L1045.3 614.47 L1046.3 611.51 L1047.3 615.44 L1048.3 615.92 L1049.3 615.25 L1050.3 614.72 L1051.3 612.30 L1052.3 615.12 L1053.3 615.72 L1054.3 616.31 L1055.3 615.36 L1056.3 613.48 L1057.3 614.14 L1058.3 615.89 L1059.3 615.31 L1060.3 614.63 L1061.3 614.20 L1062.3 614.69 L1063.3 615.72 L1064.3 615.54 L1065.3 615.54 L1066.3 615.24 L1067.3 613.56 L1068.3 614.23 L1069.3 615.60 L1070.3 614.77 L1071.3 614.63 L1072.3 612.88 L1073.3 615.17 L1074.3 615.35 L1075.3 614.81 L1076.3 612.15 L1077.3 614.02 L1078.3 615.16 L1079.3 615.55 L1080.3 615.43 L1081.3 614.88 L1082.3 612.97 L1083.3 614.22 L1084.3 615.44 L1085.3 615.14 L1086.3 614.13 L1087.3 613.27 L1088.3 613.90 L1089.3 614.50 L1090.3 615.14 L1091.3 613.90 L1092.3 613.71 L1093.3 615.06 L1094.3 615.63 L1095.3 615.20 L1096.3 614.48 L1097.3 613.32 L1098.3 614.28 L1099.3 615.22 L1100.3 615.26 L1101.3 612.42 L1102.3 612.91 L1103.3 615.26 L1104.3 614.83 L1105.3 612.88 L1106.3 612.71 L1107.3 614.79 L1108.3 614.89 L1109.3 615.39 L1110.3 613.18 L1111.3 613.27 L1112.3 615.32 L1113.3 614.64 L1114.3 614.55 L1115.3 615.18 L1116.3 612.58 L1117.3 610.94 L1118.3 613.24 L1119.3 613.21 L1120.3 613.68 L1121.4 613.80 L1122.4 612.89 L1123.4 614.16 L1124.4 615.02 L1125.4 614.48 L1126.4 610.31 L1127.4 613.59 L1128.4 614.71 L1129.4 614.42 L1130.4 614.08 L1131.4 612.70 L1132.4 612.50 L1133.4 613.89 L1134.4 614.40 L1135.4 614.40 L1136.4 613.00 L1137.4 613.31 L1138.4 614.79 L1139.4 613.46 L1140.4 613.57 L1141.4 612.47 L1142.4 612.14 L1143.4 613.95 L1144.4 613.40 L1145.4 612.03 L1146.4 612.61 L1147.4 613.29 L1148.4 613.07 L1149.4 612.98 L1150.4 612.12 L1151.4 611.72 L1152.4 613.28 L1153.4 614.10 L1154.4 613.49 L1155.4 613.66 L1156.4 612.09 L1157.4 611.76 L1158.4 612.48 L1159.4 612.43 L1160.4 612.82 L1161.4 611.58 L1162.4 611.95 L1163.4 613.78 L1164.4 613.68 L1165.4 613.90 L1166.4 611.03 L1167.4 613.17 L1168.4 613.95 L1169.4 613.66 L1170.4 612.91 L1171.4 612.20 L1172.4 611.59 L1173.4 612.41 L1174.4 612.32 L1175.4 612.73 L1176.4 612.08 L1177.4 611.91 L1178.4 611.93 L1179.4 612.41 L1180.4 613.04 L1181.4 613.48 L1182.4 611.33 L1183.4 612.84 L1184.4 612.59 L1185.4 612.55 L1186.4 611.39 L1187.4 609.36 L1188.4 611.42 L1189.4 611.98 L1190.4 613.05 L1191.4 611.62 L1192.4 609.41 L1193.4 611.97 L1194.4 612.87 L1195.4 612.51 L1196.4 610.82 L1197.4 609.41 L1198.4 612.24 L1199.4 612.13 L1200.5 611.90 L1201.5 611.52 L1202.5 611.47 L1203.5 610.07 L1204.5 612.89 L1205.5 612.90 L1206.5 611.85 L1207.5 609.97 L1208.5 611.14 L1209.5 612.68 L1210.5 611.62 L1211.5 612.01 L1212.5 610.79 L1213.5 610.58 L1214.5 612.75 L1215.5 611.91 L1216.5 612.51 L1217.5 610.20 L1218.5 611.03 L1219.5 612.32 L1220.5 612.66 L1221.5 613.05 L1222.5 612.73 L1223.5 610.51 L1224.5 610.05 L1225.5 611.68 L1226.5 611.63 L1227.5 611.45 L1228.5 609.76 L1229.5 610.06 L1230.5 612.01 L1231.5 611.01 L1232.5 609.92 L1233.5 608.52 L1234.5 610.91 L1235.5 611.62 L1236.5 611.80 L1237.5 611.37 L1238.5 609.95 L1239.5 609.44 L1240.5 611.24 L1241.5 611.43 L1242.5 610.11 L1243.5 609.46 L1244.5 610.88 L1245.5 611.29 L1246.5 611.07 L1247.5 612.20 L1248.5 611.18 L1249.5 609.75 L1250.5 610.49 L1251.5 610.56 L1252.5 610.55 L1253.5 610.11 L1254.5 610.89 L1255.5 611.61 L1256.5 610.68 L1257.5 611.35 L1258.5 609.23 L1259.5 610.78 L1260.5 611.67 L1261.5 610.74 L1262.5 611.44 L1263.5 609.92 L1264.5 609.25 L1265.5 611.43 L1266.5 610.52 L1267.5 610.37 L1268.5 608.77 L1269.5 610.65 L1270.5 610.76 L1271.5 611.03 L1272.5 609.88 L1273.5 609.81 L1274.5 611.36 L1275.5 610.94 L1276.5 610.55 L1277.5 610.60 L1278.5 608.19 L1279.5 609.19 L1280.6 610.62 L1281.6 610.82 L1282.6 610.06 L1283.6 608.36 L1284.6 609.73 L1285.6 609.64 L1286.6 610.42 L1287.6 611.05 L1288.6 608.75 L1289.6 609.48 L1290.6 609.96 L1291.6 609.61 L1292.6 609.86 L1293.6 609.08 L1294.6 607.54 L1295.6 610.12 L1296.6 609.98 L1297.6 609.72 L1298.6 608.86 L1299.6 609.07 L1300.6 609.44 L1301.6 609.29 L1302.6 609.03 L1303.6 607.29 L1304.6 610.46 L1305.6 609.65 L1306.6 609.71 L1307.6 609.19 L1308.6 608.85 L1309.6 607.38 L1310.6 609.05 L1311.6 608.81 L1312.6 609.78 L1313.6 608.84 L1314.6 609.66 L1315.6 609.81 L1316.6 609.56 L1317.6 609.20 L1318.6 607.38 L1319.6 609.41 L1320.6 609.96 L1321.6 609.02 L1322.6 609.15 L1323.6 608.58 L1324.6 608.49 L1325.6 609.62 L1326.6 610.37 L1327.6 610.10 L1328.6 609.02 L1329.6 608.16 L1330.6 608.77 L1331.6 609.41 L1332.6 609.44 L1333.6 609.09 L1334.6 607.75 L1335.6 607.15 L1336.6 610.20 L1337.6 608.98 L1338.6 609.05 L1339.6 608.26 L1340.6 606.70 L1341.6 608.16 L1342.6 609.02 L1343.6 609.61 L1344.6 608.07 L1345.6 607.23 L1346.6 609.52 L1347.6 609.19 L1348.6 608.54 L1349.6 607.93 L1350.6 608.54 L1351.6 608.56 L1352.6 609.50 L1353.6 608.72 L1354.6 608.48 L1355.6 607.92 L1356.6 607.99 L1357.6 608.86 L1358.6 609.59 L1359.6 608.55 L1360.7 606.73 L1361.7 608.20 L1362.7 609.23 L1363.7 609.12 L1364.7 607.04 L1365.7 605.60 L1366.7 608.30 L1367.7 608.49 L1368.7 608.93 L1369.7 605.45 L1370.7 607.21 L1371.7 608.22 L1372.7 608.27 L1373.7 608.51 L1374.7 607.78 L1375.7 604.43 L1376.7 608.14 L1377.7 607.59 L1378.7 608.54 L1379.7 606.20 L1380.7 608.10 L1381.7 608.44 L1382.7 609.16 L1383.7 606.97 L1384.7 607.51 L1385.7 608.37 L1386.7 608.15 L1387.7 607.97 L1388.7 606.43 L1389.7 605.37 L1390.7 608.27 L1391.7 607.38 L1392.7 607.37 L1393.7 607.64 L1394.7 605.51 L1395.7 606.95 L1396.7 607.87 L1397.7 607.82 L1398.7 608.08 L1399.7 606.72 L1400.7 607.21 L1401.7 608.92 L1402.7 608.57 L1403.7 608.45 L1404.7 607.15 L1405.7 606.23 L1406.7 608.40 L1407.7 608.01 L1408.7 607.28 L1409.7 607.04 L1410.7 607.83 L1411.7 608.22 L1412.7 607.28 L1413.7 604.96 L1414.7 604.34 L1415.7 607.25 L1416.7 607.12 L1417.7 606.56 L1418.7 604.01 L1419.7 607.60 L1420.7 607.86 L1421.7 607.29 L1422.7 607.30 L1423.7 606.70 L1424.7 606.11 L1425.7 607.80 L1426.7 607.26 L1427.7 607.91 L1428.7 605.51 L1429.7 604.84 L1430.7 607.65 L1431.7 607.66 L1432.7 606.67 L1433.7 605.04 L1434.7 605.01 L1435.7 606.95 L1436.7 606.36 L1437.7 606.21 L1438.7 605.56 L1439.8 607.31 L1440.8 607.53 L1441.8 607.52 L1442.8 606.92 L1443.8 606.31 L1444.8 606.48 L1445.8 606.21 L1446.8 606.95 L1447.8 606.59 L1448.8 604.03 L1449.8 606.32 L1450.8 606.94 L1451.8 607.04 L1452.8 606.33 L1453.8 605.34 L1454.8 606.69 L1455.8 607.04 L1456.8 606.42 L1457.8 605.36 L1458.8 605.86 L1459.8 605.81 L1460.8 605.67 L1461.8 606.33 L1462.8 603.14 L1463.8 604.94 L1464.8 607.13 L1465.8 606.17 L1466.8 607.37 L1467.8 604.42 L1468.8 605.73 L1469.8 606.99 L1470.8 606.40 L1471.8 605.84 L1472.8 604.11 L1473.8 604.55 L1474.8 606.41 L1475.8 605.32 L1476.8 604.97 L1477.8 604.59 L1478.8 604.77 L1479.8 606.03 L1480.8 605.35 L1481.8 606.18 L1482.8 603.58 L1483.8 605.96 L1484.8 606.22 L1485.8 605.78 L1486.8 606.03 L1487.8 604.44 L1488.8 605.48 L1489.8 606.10 L1490.8 606.29 L1491.8 604.61 L1492.8 603.61 L1493.8 606.33 L1494.8 605.83 L1495.8 606.21 L1496.8 604.50 L1497.8 604.35 L1498.8 606.05 L1499.8 605.43 L1500.8 606.38 L1501.8 604.22 L1502.8 604.00 L1503.8 606.59 L1504.8 605.09 L1505.8 604.49 L1506.8 602.64 L1507.8 605.43 L1508.8 606.39 L1509.8 605.81 L1510.8 606.17 L1511.8 604.99 L1512.8 603.46 L1513.8 604.92 L1514.8 605.22 L1515.8 604.34 L1516.8 603.88 L1517.8 602.58 L1518.8 604.46 L1519.9 604.97 L1520.9 605.23 L1521.9 604.71 L1522.9 604.50 L1523.9 604.95 L1524.9 604.74 L1525.9 604.43 L1526.9 603.63 L1527.9 603.46 L1528.9 604.89 L1529.9 604.91 L1530.9 604.63 L1531.9 604.68 L1532.9 602.85 L1533.9 605.35 L1534.9 604.51 L1535.9 604.20 L1536.9 603.69 L1537.9 604.41 L1538.9 605.02 L1539.9 604.54 L1540.9 604.95 L1541.9 605.14 L1542.9 602.91 L1543.9 603.92 L1544.9 604.95 L1545.9 603.92 L1546.9 602.47 L1547.9 602.82 L1548.9 604.66 L1549.9 604.69 L1550.9 602.88 L1551.9 600.77 L1552.9 604.74 L1553.9 605.31 L1554.9 605.08 L1555.9 602.94 L1556.9 602.93 L1557.9 603.93 L1558.9 604.61 L1558.9 690.28 L1557.9 689.13 L1556.9 687.81 L1555.9 686.52 L1554.9 689.04 L1553.9 689.51 L1552.9 689.89 L1551.9 688.02 L1550.9 688.75 L1549.9 690.34 L1548.9 690.02 L1547.9 689.19 L1546.9 687.85 L1545.9 689.23 L1544.9 690.16 L1543.9 689.99 L1542.9 686.93 L1541.9 688.85 L1540.9 689.17 L1539.9 689.31 L1538.9 691.00 L1537.9 688.97 L1536.9 687.38 L1535.9 689.43 L1534.9 689.78 L1533.9 689.47 L1532.9 688.08 L1531.9 688.02 L1530.9 690.32 L1529.9 689.92 L1528.9 690.66 L1527.9 687.91 L1526.9 688.68 L1525.9 690.33 L1524.9 690.76 L1523.9 689.09 L1522.9 687.83 L1521.9 689.43 L1520.9 689.82 L1519.9 689.82 L1518.8 690.43 L1517.8 689.04 L1516.8 689.19 L1515.8 691.09 L1514.8 690.78 L1513.8 689.58 L1512.8 688.02 L1511.8 686.55 L1510.8 689.82 L1509.8 691.19 L1508.8 691.18 L1507.8 689.00 L1506.8 688.53 L1505.8 690.11 L1504.8 690.17 L1503.8 689.49 L1502.8 688.42 L1501.8 689.49 L1500.8 690.28 L1499.8 690.92 L1498.8 690.64 L1497.8 689.21 L1496.8 688.71 L1495.8 689.88 L1494.8 690.43 L1493.8 689.31 L1492.8 687.53 L1491.8 688.19 L1490.8 691.19 L1489.8 691.46 L1488.8 690.67 L1487.8 687.02 L1486.8 689.76 L1485.8 690.88 L1484.8 690.02 L1483.8 688.53 L1482.8 689.47 L1481.8 691.18 L1480.8 690.21 L1479.8 690.14 L1478.8 689.91 L1477.8 687.78 L1476.8 689.10 L1475.8 690.74 L1474.8 691.40 L1473.8 689.10 L1472.8 688.63 L1471.8 690.51 L1470.8 690.92 L1469.8 691.27 L1468.8 689.40 L1467.8 689.81 L1466.8 691.47 L1465.8 691.77 L1464.8 691.73 L1463.8 687.98 L1462.8 688.72 L1461.8 691.23 L1460.8 691.86 L1459.8 690.55 L1458.8 689.83 L1457.8 685.91 L1456.8 689.77 L1455.8 690.77 L1454.8 691.10 L1453.8 687.84 L1452.8 686.09 L1451.8 690.46 L1450.8 690.51 L1449.8 690.55 L1448.8 689.37 L1447.8 688.62 L1446.8 690.46 L1445.8 690.91 L1444.8 689.28 L1443.8 687.21 L1442.8 690.62 L1441.8 692.11 L1440.8 690.31 L1439.8 690.78 L1438.7 689.88 L1437.7 690.79 L1436.7 690.79 L1435.7 690.71 L1434.7 690.42 L1433.7 688.30 L1432.7 691.41 L1431.7 692.12 L1430.7 690.44 L1429.7 689.11 L1428.7 689.11 L1427.7 692.39 L1426.7 691.94 L1425.7 691.64 L1424.7 687.70 L1423.7 687.30 L1422.7 691.05 L1421.7 690.96 L1420.7 691.17 L1419.7 690.67 L1418.7 689.56 L1417.7 691.03 L1416.7 691.61 L1415.7 692.16 L1414.7 690.94 L1413.7 689.83 L1412.7 691.92 L1411.7 690.69 L1410.7 690.13 L1409.7 687.47 L1408.7 688.66 L1407.7 692.53 L1406.7 691.71 L1405.7 689.71 L1404.7 687.57 L1403.7 691.07 L1402.7 690.93 L1401.7 692.16 L1400.7 688.79 L1399.7 688.78 L1398.7 691.60 L1397.7 692.14 L1396.7 691.29 L1395.7 688.61 L1394.7 690.66 L1393.7 691.29 L1392.7 691.71 L1391.7 690.95 L1390.7 690.02 L1389.7 688.47 L1388.7 691.50 L1387.7 692.23 L1386.7 692.42 L1385.7 691.60 L1384.7 689.32 L1383.7 691.45 L1382.7 691.58 L1381.7 691.88 L1380.7 690.14 L1379.7 689.09 L1378.7 691.21 L1377.7 692.04 L1376.7 691.88 L1375.7 689.68 L1374.7 691.27 L1373.7 691.26 L1372.7 692.05 L1371.7 691.92 L1370.7 690.36 L1369.7 690.41 L1368.7 692.44 L1367.7 692.33 L1366.7 691.20 L1365.7 687.94 L1364.7 691.17 L1363.7 692.76 L1362.7 692.48 L1361.7 691.39 L1360.7 689.55 L1359.6 691.27 L1358.6 691.70 L1357.6 691.50 L1356.6 691.38 L1355.6 689.27 L1354.6 689.73 L1353.6 691.64 L1352.6 692.21 L1351.6 691.78 L1350.6 688.72 L1349.6 689.86 L1348.6 692.15 L1347.6 692.71 L1346.6 692.43 L1345.6 689.39 L1344.6 690.50 L1343.6 692.79 L1342.6 692.30 L1341.6 691.64 L1340.6 689.65 L1339.6 690.29 L1338.6 691.95 L1337.6 692.14 L1336.6 692.11 L1335.6 690.16 L1334.6 690.69 L1333.6 692.49 L1332.6 692.41 L1331.6 692.93 L1330.6 690.62 L1329.6 689.78 L1328.6 690.84 L1327.6 692.03 L1326.6 692.65 L1325.6 692.12 L1324.6 687.66 L1323.6 688.94 L1322.6 693.17 L1321.6 692.02 L1320.6 693.29 L1319.6 691.00 L1318.6 691.70 L1317.6 692.51 L1316.6 692.36 L1315.6 692.66 L1314.6 691.15 L1313.6 690.00 L1312.6 692.18 L1311.6 692.01 L1310.6 693.36 L1309.6 690.26 L1308.6 690.85 L1307.6 692.17 L1306.6 692.92 L1305.6 692.73 L1304.6 692.38 L1303.6 689.80 L1302.6 691.54 L1301.6 692.52 L1300.6 692.45 L1299.6 691.97 L1298.6 689.18 L1297.6 692.64 L1296.6 692.51 L1295.6 693.45 L1294.6 691.79 L1293.6 691.70 L1292.6 693.24 L1291.6 693.32 L1290.6 693.34 L1289.6 691.11 L1288.6 688.93 L1287.6 692.41 L1286.6 693.48 L1285.6 693.76 L1284.6 691.18 L1283.6 690.52 L1282.6 693.07 L1281.6 692.32 L1280.6 692.85 L1279.5 692.51 L1278.5 690.13 L1277.5 692.21 L1276.5 692.80 L1275.5 693.38 L1274.5 691.87 L1273.5 691.51 L1272.5 691.65 L1271.5 692.59 L1270.5 692.34 L1269.5 691.82 L1268.5 690.17 L1267.5 692.09 L1266.5 692.53 L1265.5 694.05 L1264.5 692.15 L1263.5 691.07 L1262.5 692.51 L1261.5 694.09 L1260.5 693.74 L1259.5 691.89 L1258.5 689.09 L1257.5 692.55 L1256.5 692.44 L1255.5 692.73 L1254.5 690.51 L1253.5 691.04 L1252.5 694.21 L1251.5 693.77 L1250.5 693.42 L1249.5 692.29 L1248.5 692.63 L1247.5 693.33 L1246.5 693.57 L1245.5 694.12 L1244.5 689.67 L1243.5 689.75 L1242.5 693.54 L1241.5 694.19 L1240.5 692.88 L1239.5 691.10 L1238.5 689.74 L1237.5 692.72 L1236.5 693.85 L1235.5 692.74 L1234.5 692.76 L1233.5 690.70 L1232.5 692.24 L1231.5 694.10 L1230.5 694.11 L1229.5 692.45 L1228.5 691.07 L1227.5 692.15 L1226.5 693.30 L1225.5 693.49 L1224.5 693.25 L1223.5 690.60 L1222.5 691.59 L1221.5 694.18 L1220.5 692.82 L1219.5 693.80 L1218.5 690.73 L1217.5 691.69 L1216.5 693.99 L1215.5 694.26 L1214.5 692.69 L1213.5 691.35 L1212.5 690.34 L1211.5 692.76 L1210.5 693.66 L1209.5 693.33 L1208.5 692.71 L1207.5 692.89 L1206.5 693.74 L1205.5 693.26 L1204.5 694.64 L1203.5 692.16 L1202.5 691.05 L1201.5 693.18 L1200.5 694.61 L1199.4 693.09 L1198.4 692.62 L1197.4 691.16 L1196.4 693.20 L1195.4 693.21 L1194.4 693.59 L1193.4 693.85 L1192.4 691.47 L1191.4 692.48 L1190.4 693.59 L1189.4 693.85 L1188.4 693.43 L1187.4 691.77 L1186.4 692.91 L1185.4 694.24 L1184.4 693.41 L1183.4 692.14 L1182.4 689.45 L1181.4 693.20 L1180.4 694.03 L1179.4 694.23 L1178.4 693.20 L1177.4 691.53 L1176.4 692.96 L1175.4 694.39 L1174.4 693.48 L1173.4 692.85 L1172.4 690.14 L1171.4 693.19 L1170.4 693.32 L1169.4 694.45 L1168.4 693.80 L1167.4 692.72 L1166.4 693.24 L1165.4 694.36 L1164.4 693.55 L1163.4 694.72 L1162.4 691.67 L1161.4 691.06 L1160.4 693.29 L1159.4 693.69 L1158.4 695.25 L1157.4 694.34 L1156.4 692.52 L1155.4 694.66 L1154.4 694.28 L1153.4 695.09 L1152.4 693.92 L1151.4 691.54 L1150.4 692.33 L1149.4 694.30 L1148.4 695.13 L1147.4 693.68 L1146.4 691.37 L1145.4 691.96 L1144.4 694.94 L1143.4 694.78 L1142.4 694.37 L1141.4 692.48 L1140.4 693.98 L1139.4 695.06 L1138.4 695.00 L1137.4 692.21 L1136.4 693.20 L1135.4 693.64 L1134.4 694.05 L1133.4 694.71 L1132.4 693.93 L1131.4 691.96 L1130.4 694.84 L1129.4 695.18 L1128.4 694.25 L1127.4 691.44 L1126.4 693.25 L1125.4 694.87 L1124.4 695.34 L1123.4 695.64 L1122.4 693.65 L1121.4 692.63 L1120.3 694.30 L1119.3 694.54 L1118.3 694.27 L1117.3 694.18 L1116.3 693.25 L1115.3 693.96 L1114.3 694.05 L1113.3 694.45 L1112.3 693.85 L1111.3 689.64 L1110.3 692.79 L1109.3 694.74 L1108.3 694.03 L1107.3 693.54 L1106.3 691.67 L1105.3 693.80 L1104.3 694.96 L1103.3 694.90 L1102.3 692.97 L1101.3 693.04 L1100.3 694.79 L1099.3 694.45 L1098.3 694.51 L1097.3 691.68 L1096.3 694.71 L1095.3 694.33 L1094.3 695.33 L1093.3 695.35 L1092.3 694.02 L1091.3 693.38 L1090.3 695.41 L1089.3 694.83 L1088.3 693.89 L1087.3 691.19 L1086.3 695.16 L1085.3 695.15 L1084.3 695.55 L1083.3 695.38 L1082.3 692.81 L1081.3 692.76 L1080.3 694.97 L1079.3 695.84 L1078.3 695.14 L1077.3 692.40 L1076.3 693.29 L1075.3 695.77 L1074.3 695.37 L1073.3 694.63 L1072.3 691.62 L1071.3 693.33 L1070.3 696.08 L1069.3 695.36 L1068.3 695.00 L1067.3 693.05 L1066.3 692.95 L1065.3 695.60 L1064.3 696.03 L1063.3 694.83 L1062.3 693.35 L1061.3 691.60 L1060.3 695.01 L1059.3 695.80 L1058.3 696.19 L1057.3 694.06 L1056.3 691.91 L1055.3 694.24 L1054.3 695.34 L1053.3 695.81 L1052.3 694.15 L1051.3 689.80 L1050.3 693.46 L1049.3 695.70 L1048.3 696.49 L1047.3 694.54 L1046.3 692.21 L1045.3 694.60 L1044.3 694.75 L1043.3 694.94 L1042.3 695.89 L1041.3 696.13 L1040.2 696.25 L1039.2 695.19 L1038.2 695.79 L1037.2 694.97 L1036.2 695.83 L1035.2 696.51 L1034.2 695.75 L1033.2 695.70 L1032.2 696.17 L1031.2 695.84 L1030.2 695.17 L1029.2 695.84 L1028.2 694.97 L1027.2 696.20 L1026.2 695.66 L1025.2 694.58 L1024.2 695.61 L1023.2 694.76 L1022.2 694.80 L1021.2 695.96 L1020.2 695.77 L1019.2 695.88 L1018.2 695.86 L1017.2 695.55 L1016.2 695.38 L1015.2 695.28 L1014.2 696.12 L1013.2 696.45 L1012.2 695.92 L1011.2 695.51 L1010.2 695.53 L1009.2 695.97 L1008.2 696.24 L1007.2 695.71 L1006.2 696.26 L1005.2 695.66 L1004.2 695.92 L1003.2 695.50 L1002.2 696.14 L1001.2 695.68 L1000.2 696.14 L999.2 695.13 L998.2 695.21 L997.2 695.43 L996.2 695.32 L995.2 695.83 L994.2 695.51 L993.2 695.54 L992.2 695.65 L991.2 695.95 L990.2 695.36 L989.2 695.40 L988.2 695.16 L987.2 695.78 L986.2 695.29 L985.2 695.51 L984.2 695.57 L983.2 695.85 L982.2 695.02 L981.2 695.97 L980.2 694.77 L979.2 695.51 L978.2 695.52 L977.2 695.17 L976.2 696.14 L975.2 696.54 L974.2 695.86 L973.2 694.93 L972.2 696.22 L971.2 695.54 L970.2 694.79 L969.2 695.85 L968.2 695.70 L967.2 695.43 L966.2 695.15 L965.2 696.09 L964.2 696.00 L963.2 696.27 L962.2 695.62 L961.1 696.12 L960.1 694.80 L959.1 695.30 L958.1 695.08 L957.1 695.73 L956.1 696.09 L955.1 695.69 L954.1 696.01 L953.1 696.07 L952.1 696.10 L951.1 696.01 L950.1 695.34 L949.1 694.72 L948.1 694.68 L947.1 695.61 L946.1 695.22 L945.1 694.87 L944.1 695.33 L943.1 696.40 L942.1 695.14 L941.1 695.08 L940.1 696.15 L939.1 695.37 L938.1 694.86 L937.1 696.09 L936.1 695.30 L935.1 695.84 L934.1 696.30 L933.1 695.39 L932.1 695.13 L931.1 690.27 L930.1 688.41 L929.1 693.94 L928.1 694.95 L927.1 696.05 L926.1 695.64 L925.1 695.61 L924.1 694.84 L923.1 695.95 L922.1 695.67 L921.1 695.19 L920.1 695.64 L919.1 695.62 L918.1 695.05 L917.1 695.10 L916.1 695.28 L915.1 695.75 L914.1 695.55 L913.1 696.28 L912.1 694.80 L911.1 695.39 L910.1 696.11 L909.1 696.07 L908.1 695.17 L907.1 695.62 L906.1 696.04 L905.1 695.13 L904.1 696.37 L903.1 694.66 L902.1 695.69 L901.1 695.70 L900.1 696.08 L899.1 695.04 L898.1 696.11 L897.1 695.94 L896.1 696.11 L895.1 695.74 L894.1 696.01 L893.1 695.37 L892.1 696.35 L891.1 695.15 L890.1 694.91 L889.1 695.35 L888.1 695.48 L887.1 694.59 L886.1 695.45 L885.1 694.94 L884.1 695.21 L883.1 696.77 L882.1 696.71 L881.0 690.81 L880.0 683.53 L879.0 685.16 L878.0 691.53 L877.0 695.51 L876.0 694.99 L875.0 695.87 L874.0 694.75 L873.0 695.51 L872.0 695.80 L871.0 696.02 L870.0 695.22 L869.0 695.48 L868.0 695.83 L867.0 695.71 L866.0 694.90 L865.0 695.61 L864.0 695.51 L863.0 696.14 L862.0 696.28 L861.0 695.38 L860.0 696.00 L859.0 694.69 L858.0 695.73 L857.0 695.74 L856.0 695.14 L855.0 694.71 L854.0 694.66 L853.0 694.90 L852.0 695.98 L851.0 694.84 L850.0 695.36 L849.0 695.03 L848.0 695.17 L847.0 694.82 L846.0 694.98 L845.0 695.33 L844.0 696.23 L843.0 696.13 L842.0 694.90Z" fill="#111f31"/><path d="M842.0 694.90 L843.0 696.13 L844.0 696.23 L845.0 695.33 L846.0 694.98 L847.0 694.82 L848.0 695.17 L849.0 695.03 L850.0 695.36 L851.0 694.84 L852.0 695.98 L853.0 694.90 L854.0 694.66 L855.0 694.71 L856.0 695.14 L857.0 695.74 L858.0 695.73 L859.0 694.69 L860.0 696.00 L861.0 695.38 L862.0 696.28 L863.0 696.14 L864.0 695.51 L865.0 695.61 L866.0 694.90 L867.0 695.71 L868.0 695.83 L869.0 695.48 L870.0 695.22 L871.0 696.02 L872.0 695.80 L873.0 695.51 L874.0 694.75 L875.0 695.87 L876.0 694.99 L877.0 695.51 L878.0 691.53 L879.0 685.16 L880.0 683.53 L881.0 690.81 L882.1 696.71 L883.1 696.77 L884.1 695.21 L885.1 694.94 L886.1 695.45 L887.1 694.59 L888.1 695.48 L889.1 695.35 L890.1 694.91 L891.1 695.15 L892.1 696.35 L893.1 695.37 L894.1 696.01 L895.1 695.74 L896.1 696.11 L897.1 695.94 L898.1 696.11 L899.1 695.04 L900.1 696.08 L901.1 695.70 L902.1 695.69 L903.1 694.66 L904.1 696.37 L905.1 695.13 L906.1 696.04 L907.1 695.62 L908.1 695.17 L909.1 696.07 L910.1 696.11 L911.1 695.39 L912.1 694.80 L913.1 696.28 L914.1 695.55 L915.1 695.75 L916.1 695.28 L917.1 695.10 L918.1 695.05 L919.1 695.62 L920.1 695.64 L921.1 695.19 L922.1 695.67 L923.1 695.95 L924.1 694.84 L925.1 695.61 L926.1 695.64 L927.1 696.05 L928.1 694.95 L929.1 693.94 L930.1 688.41 L931.1 690.27 L932.1 695.13 L933.1 695.39 L934.1 696.30 L935.1 695.84 L936.1 695.30 L937.1 696.09 L938.1 694.86 L939.1 695.37 L940.1 696.15 L941.1 695.08 L942.1 695.14 L943.1 696.40 L944.1 695.33 L945.1 694.87 L946.1 695.22 L947.1 695.61 L948.1 694.68 L949.1 694.72 L950.1 695.34 L951.1 696.01 L952.1 696.10 L953.1 696.07 L954.1 696.01 L955.1 695.69 L956.1 696.09 L957.1 695.73 L958.1 695.08 L959.1 695.30 L960.1 694.80 L961.1 696.12 L962.2 695.62 L963.2 696.27 L964.2 696.00 L965.2 696.09 L966.2 695.15 L967.2 695.43 L968.2 695.70 L969.2 695.85 L970.2 694.79 L971.2 695.54 L972.2 696.22 L973.2 694.93 L974.2 695.86 L975.2 696.54 L976.2 696.14 L977.2 695.17 L978.2 695.52 L979.2 695.51 L980.2 694.77 L981.2 695.97 L982.2 695.02 L983.2 695.85 L984.2 695.57 L985.2 695.51 L986.2 695.29 L987.2 695.78 L988.2 695.16 L989.2 695.40 L990.2 695.36 L991.2 695.95 L992.2 695.65 L993.2 695.54 L994.2 695.51 L995.2 695.83 L996.2 695.32 L997.2 695.43 L998.2 695.21 L999.2 695.13 L1000.2 696.14 L1001.2 695.68 L1002.2 696.14 L1003.2 695.50 L1004.2 695.92 L1005.2 695.66 L1006.2 696.26 L1007.2 695.71 L1008.2 696.24 L1009.2 695.97 L1010.2 695.53 L1011.2 695.51 L1012.2 695.92 L1013.2 696.45 L1014.2 696.12 L1015.2 695.28 L1016.2 695.38 L1017.2 695.55 L1018.2 695.86 L1019.2 695.88 L1020.2 695.77 L1021.2 695.96 L1022.2 694.80 L1023.2 694.76 L1024.2 695.61 L1025.2 694.58 L1026.2 695.66 L1027.2 696.20 L1028.2 694.97 L1029.2 695.84 L1030.2 695.17 L1031.2 695.84 L1032.2 696.17 L1033.2 695.70 L1034.2 695.75 L1035.2 696.51 L1036.2 695.83 L1037.2 694.97 L1038.2 695.79 L1039.2 695.19 L1040.2 696.25 L1041.3 696.13 L1042.3 695.89 L1043.3 694.94 L1044.3 694.75 L1045.3 694.60 L1046.3 692.21 L1047.3 694.54 L1048.3 696.49 L1049.3 695.70 L1050.3 693.46 L1051.3 689.80 L1052.3 694.15 L1053.3 695.81 L1054.3 695.34 L1055.3 694.24 L1056.3 691.91 L1057.3 694.06 L1058.3 696.19 L1059.3 695.80 L1060.3 695.01 L1061.3 691.60 L1062.3 693.35 L1063.3 694.83 L1064.3 696.03 L1065.3 695.60 L1066.3 692.95 L1067.3 693.05 L1068.3 695.00 L1069.3 695.36 L1070.3 696.08 L1071.3 693.33 L1072.3 691.62 L1073.3 694.63 L1074.3 695.37 L1075.3 695.77 L1076.3 693.29 L1077.3 692.40 L1078.3 695.14 L1079.3 695.84 L1080.3 694.97 L1081.3 692.76 L1082.3 692.81 L1083.3 695.38 L1084.3 695.55 L1085.3 695.15 L1086.3 695.16 L1087.3 691.19 L1088.3 693.89 L1089.3 694.83 L1090.3 695.41 L1091.3 693.38 L1092.3 694.02 L1093.3 695.35 L1094.3 695.33 L1095.3 694.33 L1096.3 694.71 L1097.3 691.68 L1098.3 694.51 L1099.3 694.45 L1100.3 694.79 L1101.3 693.04 L1102.3 692.97 L1103.3 694.90 L1104.3 694.96 L1105.3 693.80 L1106.3 691.67 L1107.3 693.54 L1108.3 694.03 L1109.3 694.74 L1110.3 692.79 L1111.3 689.64 L1112.3 693.85 L1113.3 694.45 L1114.3 694.05 L1115.3 693.96 L1116.3 693.25 L1117.3 694.18 L1118.3 694.27 L1119.3 694.54 L1120.3 694.30 L1121.4 692.63 L1122.4 693.65 L1123.4 695.64 L1124.4 695.34 L1125.4 694.87 L1126.4 693.25 L1127.4 691.44 L1128.4 694.25 L1129.4 695.18 L1130.4 694.84 L1131.4 691.96 L1132.4 693.93 L1133.4 694.71 L1134.4 694.05 L1135.4 693.64 L1136.4 693.20 L1137.4 692.21 L1138.4 695.00 L1139.4 695.06 L1140.4 693.98 L1141.4 692.48 L1142.4 694.37 L1143.4 694.78 L1144.4 694.94 L1145.4 691.96 L1146.4 691.37 L1147.4 693.68 L1148.4 695.13 L1149.4 694.30 L1150.4 692.33 L1151.4 691.54 L1152.4 693.92 L1153.4 695.09 L1154.4 694.28 L1155.4 694.66 L1156.4 692.52 L1157.4 694.34 L1158.4 695.25 L1159.4 693.69 L1160.4 693.29 L1161.4 691.06 L1162.4 691.67 L1163.4 694.72 L1164.4 693.55 L1165.4 694.36 L1166.4 693.24 L1167.4 692.72 L1168.4 693.80 L1169.4 694.45 L1170.4 693.32 L1171.4 693.19 L1172.4 690.14 L1173.4 692.85 L1174.4 693.48 L1175.4 694.39 L1176.4 692.96 L1177.4 691.53 L1178.4 693.20 L1179.4 694.23 L1180.4 694.03 L1181.4 693.20 L1182.4 689.45 L1183.4 692.14 L1184.4 693.41 L1185.4 694.24 L1186.4 692.91 L1187.4 691.77 L1188.4 693.43 L1189.4 693.85 L1190.4 693.59 L1191.4 692.48 L1192.4 691.47 L1193.4 693.85 L1194.4 693.59 L1195.4 693.21 L1196.4 693.20 L1197.4 691.16 L1198.4 692.62 L1199.4 693.09 L1200.5 694.61 L1201.5 693.18 L1202.5 691.05 L1203.5 692.16 L1204.5 694.64 L1205.5 693.26 L1206.5 693.74 L1207.5 692.89 L1208.5 692.71 L1209.5 693.33 L1210.5 693.66 L1211.5 692.76 L1212.5 690.34 L1213.5 691.35 L1214.5 692.69 L1215.5 694.26 L1216.5 693.99 L1217.5 691.69 L1218.5 690.73 L1219.5 693.80 L1220.5 692.82 L1221.5 694.18 L1222.5 691.59 L1223.5 690.60 L1224.5 693.25 L1225.5 693.49 L1226.5 693.30 L1227.5 692.15 L1228.5 691.07 L1229.5 692.45 L1230.5 694.11 L1231.5 694.10 L1232.5 692.24 L1233.5 690.70 L1234.5 692.76 L1235.5 692.74 L1236.5 693.85 L1237.5 692.72 L1238.5 689.74 L1239.5 691.10 L1240.5 692.88 L1241.5 694.19 L1242.5 693.54 L1243.5 689.75 L1244.5 689.67 L1245.5 694.12 L1246.5 693.57 L1247.5 693.33 L1248.5 692.63 L1249.5 692.29 L1250.5 693.42 L1251.5 693.77 L1252.5 694.21 L1253.5 691.04 L1254.5 690.51 L1255.5 692.73 L1256.5 692.44 L1257.5 692.55 L1258.5 689.09 L1259.5 691.89 L1260.5 693.74 L1261.5 694.09 L1262.5 692.51 L1263.5 691.07 L1264.5 692.15 L1265.5 694.05 L1266.5 692.53 L1267.5 692.09 L1268.5 690.17 L1269.5 691.82 L1270.5 692.34 L1271.5 692.59 L1272.5 691.65 L1273.5 691.51 L1274.5 691.87 L1275.5 693.38 L1276.5 692.80 L1277.5 692.21 L1278.5 690.13 L1279.5 692.51 L1280.6 692.85 L1281.6 692.32 L1282.6 693.07 L1283.6 690.52 L1284.6 691.18 L1285.6 693.76 L1286.6 693.48 L1287.6 692.41 L1288.6 688.93 L1289.6 691.11 L1290.6 693.34 L1291.6 693.32 L1292.6 693.24 L1293.6 691.70 L1294.6 691.79 L1295.6 693.45 L1296.6 692.51 L1297.6 692.64 L1298.6 689.18 L1299.6 691.97 L1300.6 692.45 L1301.6 692.52 L1302.6 691.54 L1303.6 689.80 L1304.6 692.38 L1305.6 692.73 L1306.6 692.92 L1307.6 692.17 L1308.6 690.85 L1309.6 690.26 L1310.6 693.36 L1311.6 692.01 L1312.6 692.18 L1313.6 690.00 L1314.6 691.15 L1315.6 692.66 L1316.6 692.36 L1317.6 692.51 L1318.6 691.70 L1319.6 691.00 L1320.6 693.29 L1321.6 692.02 L1322.6 693.17 L1323.6 688.94 L1324.6 687.66 L1325.6 692.12 L1326.6 692.65 L1327.6 692.03 L1328.6 690.84 L1329.6 689.78 L1330.6 690.62 L1331.6 692.93 L1332.6 692.41 L1333.6 692.49 L1334.6 690.69 L1335.6 690.16 L1336.6 692.11 L1337.6 692.14 L1338.6 691.95 L1339.6 690.29 L1340.6 689.65 L1341.6 691.64 L1342.6 692.30 L1343.6 692.79 L1344.6 690.50 L1345.6 689.39 L1346.6 692.43 L1347.6 692.71 L1348.6 692.15 L1349.6 689.86 L1350.6 688.72 L1351.6 691.78 L1352.6 692.21 L1353.6 691.64 L1354.6 689.73 L1355.6 689.27 L1356.6 691.38 L1357.6 691.50 L1358.6 691.70 L1359.6 691.27 L1360.7 689.55 L1361.7 691.39 L1362.7 692.48 L1363.7 692.76 L1364.7 691.17 L1365.7 687.94 L1366.7 691.20 L1367.7 692.33 L1368.7 692.44 L1369.7 690.41 L1370.7 690.36 L1371.7 691.92 L1372.7 692.05 L1373.7 691.26 L1374.7 691.27 L1375.7 689.68 L1376.7 691.88 L1377.7 692.04 L1378.7 691.21 L1379.7 689.09 L1380.7 690.14 L1381.7 691.88 L1382.7 691.58 L1383.7 691.45 L1384.7 689.32 L1385.7 691.60 L1386.7 692.42 L1387.7 692.23 L1388.7 691.50 L1389.7 688.47 L1390.7 690.02 L1391.7 690.95 L1392.7 691.71 L1393.7 691.29 L1394.7 690.66 L1395.7 688.61 L1396.7 691.29 L1397.7 692.14 L1398.7 691.60 L1399.7 688.78 L1400.7 688.79 L1401.7 692.16 L1402.7 690.93 L1403.7 691.07 L1404.7 687.57 L1405.7 689.71 L1406.7 691.71 L1407.7 692.53 L1408.7 688.66 L1409.7 687.47 L1410.7 690.13 L1411.7 690.69 L1412.7 691.92 L1413.7 689.83 L1414.7 690.94 L1415.7 692.16 L1416.7 691.61 L1417.7 691.03 L1418.7 689.56 L1419.7 690.67 L1420.7 691.17 L1421.7 690.96 L1422.7 691.05 L1423.7 687.30 L1424.7 687.70 L1425.7 691.64 L1426.7 691.94 L1427.7 692.39 L1428.7 689.11 L1429.7 689.11 L1430.7 690.44 L1431.7 692.12 L1432.7 691.41 L1433.7 688.30 L1434.7 690.42 L1435.7 690.71 L1436.7 690.79 L1437.7 690.79 L1438.7 689.88 L1439.8 690.78 L1440.8 690.31 L1441.8 692.11 L1442.8 690.62 L1443.8 687.21 L1444.8 689.28 L1445.8 690.91 L1446.8 690.46 L1447.8 688.62 L1448.8 689.37 L1449.8 690.55 L1450.8 690.51 L1451.8 690.46 L1452.8 686.09 L1453.8 687.84 L1454.8 691.10 L1455.8 690.77 L1456.8 689.77 L1457.8 685.91 L1458.8 689.83 L1459.8 690.55 L1460.8 691.86 L1461.8 691.23 L1462.8 688.72 L1463.8 687.98 L1464.8 691.73 L1465.8 691.77 L1466.8 691.47 L1467.8 689.81 L1468.8 689.40 L1469.8 691.27 L1470.8 690.92 L1471.8 690.51 L1472.8 688.63 L1473.8 689.10 L1474.8 691.40 L1475.8 690.74 L1476.8 689.10 L1477.8 687.78 L1478.8 689.91 L1479.8 690.14 L1480.8 690.21 L1481.8 691.18 L1482.8 689.47 L1483.8 688.53 L1484.8 690.02 L1485.8 690.88 L1486.8 689.76 L1487.8 687.02 L1488.8 690.67 L1489.8 691.46 L1490.8 691.19 L1491.8 688.19 L1492.8 687.53 L1493.8 689.31 L1494.8 690.43 L1495.8 689.88 L1496.8 688.71 L1497.8 689.21 L1498.8 690.64 L1499.8 690.92 L1500.8 690.28 L1501.8 689.49 L1502.8 688.42 L1503.8 689.49 L1504.8 690.17 L1505.8 690.11 L1506.8 688.53 L1507.8 689.00 L1508.8 691.18 L1509.8 691.19 L1510.8 689.82 L1511.8 686.55 L1512.8 688.02 L1513.8 689.58 L1514.8 690.78 L1515.8 691.09 L1516.8 689.19 L1517.8 689.04 L1518.8 690.43 L1519.9 689.82 L1520.9 689.82 L1521.9 689.43 L1522.9 687.83 L1523.9 689.09 L1524.9 690.76 L1525.9 690.33 L1526.9 688.68 L1527.9 687.91 L1528.9 690.66 L1529.9 689.92 L1530.9 690.32 L1531.9 688.02 L1532.9 688.08 L1533.9 689.47 L1534.9 689.78 L1535.9 689.43 L1536.9 687.38 L1537.9 688.97 L1538.9 691.00 L1539.9 689.31 L1540.9 689.17 L1541.9 688.85 L1542.9 686.93 L1543.9 689.99 L1544.9 690.16 L1545.9 689.23 L1546.9 687.85 L1547.9 689.19 L1548.9 690.02 L1549.9 690.34 L1550.9 688.75 L1551.9 688.02 L1552.9 689.89 L1553.9 689.51 L1554.9 689.04 L1555.9 686.52 L1556.9 687.81 L1557.9 689.13 L1558.9 690.28 L1558.9 730.80 L1557.9 730.80 L1556.9 730.80 L1555.9 730.80 L1554.9 730.80 L1553.9 730.80 L1552.9 730.80 L1551.9 730.80 L1550.9 730.80 L1549.9 730.80 L1548.9 730.80 L1547.9 730.80 L1546.9 730.80 L1545.9 730.80 L1544.9 730.80 L1543.9 730.80 L1542.9 730.80 L1541.9 730.80 L1540.9 730.80 L1539.9 730.80 L1538.9 730.80 L1537.9 730.80 L1536.9 730.80 L1535.9 730.80 L1534.9 730.80 L1533.9 730.80 L1532.9 730.80 L1531.9 730.80 L1530.9 730.80 L1529.9 730.80 L1528.9 730.80 L1527.9 730.80 L1526.9 730.80 L1525.9 730.80 L1524.9 730.80 L1523.9 730.80 L1522.9 730.80 L1521.9 730.80 L1520.9 730.80 L1519.9 730.80 L1518.8 730.80 L1517.8 730.80 L1516.8 730.80 L1515.8 730.80 L1514.8 730.80 L1513.8 730.80 L1512.8 730.80 L1511.8 730.80 L1510.8 730.80 L1509.8 730.80 L1508.8 730.80 L1507.8 730.80 L1506.8 730.80 L1505.8 730.80 L1504.8 730.80 L1503.8 730.80 L1502.8 730.80 L1501.8 730.80 L1500.8 730.80 L1499.8 730.80 L1498.8 730.80 L1497.8 730.80 L1496.8 730.80 L1495.8 730.80 L1494.8 730.80 L1493.8 730.80 L1492.8 730.80 L1491.8 730.80 L1490.8 730.80 L1489.8 730.80 L1488.8 730.80 L1487.8 730.80 L1486.8 730.80 L1485.8 730.80 L1484.8 730.80 L1483.8 730.80 L1482.8 730.80 L1481.8 730.80 L1480.8 730.80 L1479.8 730.80 L1478.8 730.80 L1477.8 730.80 L1476.8 730.80 L1475.8 730.80 L1474.8 730.80 L1473.8 730.80 L1472.8 730.80 L1471.8 730.80 L1470.8 730.80 L1469.8 730.80 L1468.8 730.80 L1467.8 730.80 L1466.8 730.80 L1465.8 730.80 L1464.8 730.80 L1463.8 730.80 L1462.8 730.80 L1461.8 730.80 L1460.8 730.80 L1459.8 730.80 L1458.8 730.80 L1457.8 730.80 L1456.8 730.80 L1455.8 730.80 L1454.8 730.80 L1453.8 730.80 L1452.8 730.80 L1451.8 730.80 L1450.8 730.80 L1449.8 730.80 L1448.8 730.80 L1447.8 730.80 L1446.8 730.80 L1445.8 730.80 L1444.8 730.80 L1443.8 730.80 L1442.8 730.80 L1441.8 730.80 L1440.8 730.80 L1439.8 730.80 L1438.7 730.80 L1437.7 730.80 L1436.7 730.80 L1435.7 730.80 L1434.7 730.80 L1433.7 730.80 L1432.7 730.80 L1431.7 730.80 L1430.7 730.80 L1429.7 730.80 L1428.7 730.80 L1427.7 730.80 L1426.7 730.80 L1425.7 730.80 L1424.7 730.80 L1423.7 730.80 L1422.7 730.80 L1421.7 730.80 L1420.7 730.80 L1419.7 730.80 L1418.7 730.80 L1417.7 730.80 L1416.7 730.80 L1415.7 730.80 L1414.7 730.80 L1413.7 730.80 L1412.7 730.80 L1411.7 730.80 L1410.7 730.80 L1409.7 730.80 L1408.7 730.80 L1407.7 730.80 L1406.7 730.80 L1405.7 730.80 L1404.7 730.80 L1403.7 730.80 L1402.7 730.80 L1401.7 730.80 L1400.7 730.80 L1399.7 730.80 L1398.7 730.80 L1397.7 730.80 L1396.7 730.80 L1395.7 730.80 L1394.7 730.80 L1393.7 730.80 L1392.7 730.80 L1391.7 730.80 L1390.7 730.80 L1389.7 730.80 L1388.7 730.80 L1387.7 730.80 L1386.7 730.80 L1385.7 730.80 L1384.7 730.80 L1383.7 730.80 L1382.7 730.80 L1381.7 730.80 L1380.7 730.80 L1379.7 730.80 L1378.7 730.80 L1377.7 730.80 L1376.7 730.80 L1375.7 730.80 L1374.7 730.80 L1373.7 730.80 L1372.7 730.80 L1371.7 730.80 L1370.7 730.80 L1369.7 730.80 L1368.7 730.80 L1367.7 730.80 L1366.7 730.80 L1365.7 730.80 L1364.7 730.80 L1363.7 730.80 L1362.7 730.80 L1361.7 730.80 L1360.7 730.80 L1359.6 730.80 L1358.6 730.80 L1357.6 730.80 L1356.6 730.80 L1355.6 730.80 L1354.6 730.80 L1353.6 730.80 L1352.6 730.80 L1351.6 730.80 L1350.6 730.80 L1349.6 730.80 L1348.6 730.80 L1347.6 730.80 L1346.6 730.80 L1345.6 730.80 L1344.6 730.80 L1343.6 730.80 L1342.6 730.80 L1341.6 730.80 L1340.6 730.80 L1339.6 730.80 L1338.6 730.80 L1337.6 730.80 L1336.6 730.80 L1335.6 730.80 L1334.6 730.80 L1333.6 730.80 L1332.6 730.80 L1331.6 730.80 L1330.6 730.80 L1329.6 730.80 L1328.6 730.80 L1327.6 730.80 L1326.6 730.80 L1325.6 730.80 L1324.6 730.80 L1323.6 730.80 L1322.6 730.80 L1321.6 730.80 L1320.6 730.80 L1319.6 730.80 L1318.6 730.80 L1317.6 730.80 L1316.6 730.80 L1315.6 730.80 L1314.6 730.80 L1313.6 730.80 L1312.6 730.80 L1311.6 730.80 L1310.6 730.80 L1309.6 730.80 L1308.6 730.80 L1307.6 730.80 L1306.6 730.80 L1305.6 730.80 L1304.6 730.80 L1303.6 730.80 L1302.6 730.80 L1301.6 730.80 L1300.6 730.80 L1299.6 730.80 L1298.6 730.80 L1297.6 730.80 L1296.6 730.80 L1295.6 730.80 L1294.6 730.80 L1293.6 730.80 L1292.6 730.80 L1291.6 730.80 L1290.6 730.80 L1289.6 730.80 L1288.6 730.80 L1287.6 730.80 L1286.6 730.80 L1285.6 730.80 L1284.6 730.80 L1283.6 730.80 L1282.6 730.80 L1281.6 730.80 L1280.6 730.80 L1279.5 730.80 L1278.5 730.80 L1277.5 730.80 L1276.5 730.80 L1275.5 730.80 L1274.5 730.80 L1273.5 730.80 L1272.5 730.80 L1271.5 730.80 L1270.5 730.80 L1269.5 730.80 L1268.5 730.80 L1267.5 730.80 L1266.5 730.80 L1265.5 730.80 L1264.5 730.80 L1263.5 730.80 L1262.5 730.80 L1261.5 730.80 L1260.5 730.80 L1259.5 730.80 L1258.5 730.80 L1257.5 730.80 L1256.5 730.80 L1255.5 730.80 L1254.5 730.80 L1253.5 730.80 L1252.5 730.80 L1251.5 730.80 L1250.5 730.80 L1249.5 730.80 L1248.5 730.80 L1247.5 730.80 L1246.5 730.80 L1245.5 730.80 L1244.5 730.80 L1243.5 730.80 L1242.5 730.80 L1241.5 730.80 L1240.5 730.80 L1239.5 730.80 L1238.5 730.80 L1237.5 730.80 L1236.5 730.80 L1235.5 730.80 L1234.5 730.80 L1233.5 730.80 L1232.5 730.80 L1231.5 730.80 L1230.5 730.80 L1229.5 730.80 L1228.5 730.80 L1227.5 730.80 L1226.5 730.80 L1225.5 730.80 L1224.5 730.80 L1223.5 730.80 L1222.5 730.80 L1221.5 730.80 L1220.5 730.80 L1219.5 730.80 L1218.5 730.80 L1217.5 730.80 L1216.5 730.80 L1215.5 730.80 L1214.5 730.80 L1213.5 730.80 L1212.5 730.80 L1211.5 730.80 L1210.5 730.80 L1209.5 730.80 L1208.5 730.80 L1207.5 730.80 L1206.5 730.80 L1205.5 730.80 L1204.5 730.80 L1203.5 730.80 L1202.5 730.80 L1201.5 730.80 L1200.5 730.80 L1199.4 730.80 L1198.4 730.80 L1197.4 730.80 L1196.4 730.80 L1195.4 730.80 L1194.4 730.80 L1193.4 730.80 L1192.4 730.80 L1191.4 730.80 L1190.4 730.80 L1189.4 730.80 L1188.4 730.80 L1187.4 730.80 L1186.4 730.80 L1185.4 730.80 L1184.4 730.80 L1183.4 730.80 L1182.4 730.80 L1181.4 730.80 L1180.4 730.80 L1179.4 730.80 L1178.4 730.80 L1177.4 730.80 L1176.4 730.80 L1175.4 730.80 L1174.4 730.80 L1173.4 730.80 L1172.4 730.80 L1171.4 730.80 L1170.4 730.80 L1169.4 730.80 L1168.4 730.80 L1167.4 730.80 L1166.4 730.80 L1165.4 730.80 L1164.4 730.80 L1163.4 730.80 L1162.4 730.80 L1161.4 730.80 L1160.4 730.80 L1159.4 730.80 L1158.4 730.80 L1157.4 730.80 L1156.4 730.80 L1155.4 730.80 L1154.4 730.80 L1153.4 730.80 L1152.4 730.80 L1151.4 730.80 L1150.4 730.80 L1149.4 730.80 L1148.4 730.80 L1147.4 730.80 L1146.4 730.80 L1145.4 730.80 L1144.4 730.80 L1143.4 730.80 L1142.4 730.80 L1141.4 730.80 L1140.4 730.80 L1139.4 730.80 L1138.4 730.80 L1137.4 730.80 L1136.4 730.80 L1135.4 730.80 L1134.4 730.80 L1133.4 730.80 L1132.4 730.80 L1131.4 730.80 L1130.4 730.80 L1129.4 730.80 L1128.4 730.80 L1127.4 730.80 L1126.4 730.80 L1125.4 730.80 L1124.4 730.80 L1123.4 730.80 L1122.4 730.80 L1121.4 730.80 L1120.3 730.80 L1119.3 730.80 L1118.3 730.80 L1117.3 730.80 L1116.3 730.80 L1115.3 730.80 L1114.3 730.80 L1113.3 730.80 L1112.3 730.80 L1111.3 730.80 L1110.3 730.80 L1109.3 730.80 L1108.3 730.80 L1107.3 730.80 L1106.3 730.80 L1105.3 730.80 L1104.3 730.80 L1103.3 730.80 L1102.3 730.80 L1101.3 730.80 L1100.3 730.80 L1099.3 730.80 L1098.3 730.80 L1097.3 730.80 L1096.3 730.80 L1095.3 730.80 L1094.3 730.80 L1093.3 730.80 L1092.3 730.80 L1091.3 730.80 L1090.3 730.80 L1089.3 730.80 L1088.3 730.80 L1087.3 730.80 L1086.3 730.80 L1085.3 730.80 L1084.3 730.80 L1083.3 730.80 L1082.3 730.80 L1081.3 730.80 L1080.3 730.80 L1079.3 730.80 L1078.3 730.80 L1077.3 730.80 L1076.3 730.80 L1075.3 730.80 L1074.3 730.80 L1073.3 730.80 L1072.3 730.80 L1071.3 730.80 L1070.3 730.80 L1069.3 730.80 L1068.3 730.80 L1067.3 730.80 L1066.3 730.80 L1065.3 730.80 L1064.3 730.80 L1063.3 730.80 L1062.3 730.80 L1061.3 730.80 L1060.3 730.80 L1059.3 730.80 L1058.3 730.80 L1057.3 730.80 L1056.3 730.80 L1055.3 730.80 L1054.3 730.80 L1053.3 730.80 L1052.3 730.80 L1051.3 730.80 L1050.3 730.80 L1049.3 730.80 L1048.3 730.80 L1047.3 730.80 L1046.3 730.80 L1045.3 730.80 L1044.3 730.80 L1043.3 730.80 L1042.3 730.80 L1041.3 730.80 L1040.2 730.80 L1039.2 730.80 L1038.2 730.80 L1037.2 730.80 L1036.2 730.80 L1035.2 730.80 L1034.2 730.80 L1033.2 730.80 L1032.2 730.80 L1031.2 730.80 L1030.2 730.80 L1029.2 730.80 L1028.2 730.80 L1027.2 730.80 L1026.2 730.80 L1025.2 730.80 L1024.2 730.80 L1023.2 730.80 L1022.2 730.80 L1021.2 730.80 L1020.2 730.80 L1019.2 730.80 L1018.2 730.80 L1017.2 730.80 L1016.2 730.80 L1015.2 730.80 L1014.2 730.80 L1013.2 730.80 L1012.2 730.80 L1011.2 730.80 L1010.2 730.80 L1009.2 730.80 L1008.2 730.80 L1007.2 730.80 L1006.2 730.80 L1005.2 730.80 L1004.2 730.80 L1003.2 730.80 L1002.2 730.80 L1001.2 730.80 L1000.2 730.80 L999.2 730.80 L998.2 730.80 L997.2 730.80 L996.2 730.80 L995.2 730.80 L994.2 730.80 L993.2 730.80 L992.2 730.80 L991.2 730.80 L990.2 730.80 L989.2 730.80 L988.2 730.80 L987.2 730.80 L986.2 730.80 L985.2 730.80 L984.2 730.80 L983.2 730.80 L982.2 730.80 L981.2 730.80 L980.2 730.80 L979.2 730.80 L978.2 730.80 L977.2 730.80 L976.2 730.80 L975.2 730.80 L974.2 730.80 L973.2 730.80 L972.2 730.80 L971.2 730.80 L970.2 730.80 L969.2 730.80 L968.2 730.80 L967.2 730.80 L966.2 730.80 L965.2 730.80 L964.2 730.80 L963.2 730.80 L962.2 730.80 L961.1 730.80 L960.1 730.80 L959.1 730.80 L958.1 730.80 L957.1 730.80 L956.1 730.80 L955.1 730.80 L954.1 730.80 L953.1 730.80 L952.1 730.80 L951.1 730.80 L950.1 730.80 L949.1 730.80 L948.1 730.80 L947.1 730.80 L946.1 730.80 L945.1 730.80 L944.1 730.80 L943.1 730.80 L942.1 730.80 L941.1 730.80 L940.1 730.80 L939.1 730.80 L938.1 730.80 L937.1 730.80 L936.1 730.80 L935.1 730.80 L934.1 730.80 L933.1 730.80 L932.1 730.80 L931.1 730.80 L930.1 730.80 L929.1 730.80 L928.1 730.80 L927.1 730.80 L926.1 730.80 L925.1 730.80 L924.1 730.80 L923.1 730.80 L922.1 730.80 L921.1 730.80 L920.1 730.80 L919.1 730.80 L918.1 730.80 L917.1 730.80 L916.1 730.80 L915.1 730.80 L914.1 730.80 L913.1 730.80 L912.1 730.80 L911.1 730.80 L910.1 730.80 L909.1 730.80 L908.1 730.80 L907.1 730.80 L906.1 730.80 L905.1 730.80 L904.1 730.80 L903.1 730.80 L902.1 730.80 L901.1 730.80 L900.1 730.80 L899.1 730.80 L898.1 730.80 L897.1 730.80 L896.1 730.80 L895.1 730.80 L894.1 730.80 L893.1 730.80 L892.1 730.80 L891.1 730.80 L890.1 730.80 L889.1 730.80 L888.1 730.80 L887.1 730.80 L886.1 730.80 L885.1 730.80 L884.1 730.80 L883.1 730.80 L882.1 730.80 L881.0 730.80 L880.0 730.80 L879.0 730.80 L878.0 730.80 L877.0 730.80 L876.0 730.80 L875.0 730.80 L874.0 730.80 L873.0 730.80 L872.0 730.80 L871.0 730.80 L870.0 730.80 L869.0 730.80 L868.0 730.80 L867.0 730.80 L866.0 730.80 L865.0 730.80 L864.0 730.80 L863.0 730.80 L862.0 730.80 L861.0 730.80 L860.0 730.80 L859.0 730.80 L858.0 730.80 L857.0 730.80 L856.0 730.80 L855.0 730.80 L854.0 730.80 L853.0 730.80 L852.0 730.80 L851.0 730.80 L850.0 730.80 L849.0 730.80 L848.0 730.80 L847.0 730.80 L846.0 730.80 L845.0 730.80 L844.0 730.80 L843.0 730.80 L842.0 730.80Z" fill="#6e5f1c"/><rect x="842.0" y="730.30" width="716.9" height="1" fill="rgba(204,204,220,0.13)"/><rect x="842.0" y="713.26" width="716.9" height="1" fill="rgba(204,204,220,0.13)"/><rect x="842.0" y="696.22" width="716.9" height="1" fill="rgba(204,204,220,0.13)"/><rect x="842.0" y="679.18" width="716.9" height="1" fill="rgba(204,204,220,0.13)"/><rect x="842.0" y="662.14" width="716.9" height="1" fill="rgba(204,204,220,0.13)"/><rect x="842.0" y="645.10" width="716.9" height="1" fill="rgba(204,204,220,0.13)"/><rect x="842.0" y="628.06" width="716.9" height="1" fill="rgba(204,204,220,0.13)"/><rect x="842.0" y="611.02" width="716.9" height="1" fill="rgba(204,204,220,0.13)"/><rect x="842.0" y="593.98" width="716.9" height="1" fill="rgba(204,204,220,0.13)"/><rect x="862.10" y="584.5" width="1" height="151.3" fill="rgba(204,204,220,0.13)"/><rect x="921.90" y="584.5" width="1" height="151.3" fill="rgba(204,204,220,0.13)"/><rect x="981.70" y="584.5" width="1" height="151.3" fill="rgba(204,204,220,0.13)"/><rect x="1041.50" y="584.5" width="1" height="151.3" fill="rgba(204,204,220,0.13)"/><rect x="1101.30" y="584.5" width="1" height="151.3" fill="rgba(204,204,220,0.13)"/><rect x="1161.10" y="584.5" width="1" height="151.3" fill="rgba(204,204,220,0.13)"/><rect x="1220.90" y="584.5" width="1" height="151.3" fill="rgba(204,204,220,0.13)"/><rect x="1280.70" y="584.5" width="1" height="151.3" fill="rgba(204,204,220,0.13)"/><rect x="1340.50" y="584.5" width="1" height="151.3" fill="rgba(204,204,220,0.13)"/><rect x="1400.30" y="584.5" width="1" height="151.3" fill="rgba(204,204,220,0.13)"/><rect x="1460.10" y="584.5" width="1" height="151.3" fill="rgba(204,204,220,0.13)"/><rect x="1519.90" y="584.5" width="1" height="151.3" fill="rgba(204,204,220,0.13)"/><path d="M842.0 602.60 L843.0 602.05 L844.0 602.44 L845.0 601.73 L846.0 602.19 L847.0 603.01 L848.0 602.39 L849.0 601.81 L850.0 602.72 L851.0 601.28 L852.0 601.33 L853.0 602.85 L854.0 602.47 L855.0 601.50 L856.0 602.41 L857.0 602.63 L858.0 602.34 L859.0 602.46 L860.0 602.96 L861.0 601.80 L862.0 601.74 L863.0 601.07 L864.0 601.42 L865.0 601.78 L866.0 602.73 L867.0 601.88 L868.0 601.17 L869.0 602.21 L870.0 602.28 L871.0 601.41 L872.0 602.97 L873.0 601.66 L874.0 602.11 L875.0 601.93 L876.0 602.53 L877.0 602.08 L878.0 602.84 L879.0 602.28 L880.0 602.42 L881.0 616.84 L882.1 616.75 L883.1 615.75 L884.1 615.40 L885.1 614.75 L886.1 615.33 L887.1 614.64 L888.1 614.53 L889.1 615.34 L890.1 614.59 L891.1 615.31 L892.1 614.43 L893.1 614.22 L894.1 614.86 L895.1 614.69 L896.1 615.03 L897.1 613.31 L898.1 613.44 L899.1 613.86 L900.1 613.56 L901.1 614.44 L902.1 612.83 L903.1 612.49 L904.1 613.04 L905.1 612.49 L906.1 612.77 L907.1 612.47 L908.1 611.93 L909.1 613.07 L910.1 612.01 L911.1 612.11 L912.1 611.90 L913.1 611.42 L914.1 612.48 L915.1 612.51 L916.1 612.04 L917.1 611.41 L918.1 611.19 L919.1 611.19 L920.1 611.62 L921.1 610.98 L922.1 610.85 L923.1 609.96 L924.1 609.70 L925.1 610.95 L926.1 610.81 L927.1 610.55 L928.1 610.26 L929.1 610.33 L930.1 609.90 L931.1 615.28 L932.1 615.63 L933.1 615.23 L934.1 615.46 L935.1 615.09 L936.1 615.90 L937.1 615.75 L938.1 616.33 L939.1 615.22 L940.1 615.70 L941.1 616.67 L942.1 616.45 L943.1 615.55 L944.1 615.78 L945.1 615.52 L946.1 615.75 L947.1 616.06 L948.1 616.58 L949.1 616.24 L950.1 615.26 L951.1 615.91 L952.1 615.97 L953.1 615.36 L954.1 616.43 L955.1 615.81 L956.1 615.03 L957.1 615.32 L958.1 615.26 L959.1 615.29 L960.1 615.90 L961.1 615.98 L962.2 615.06 L963.2 615.14 L964.2 616.00 L965.2 616.16 L966.2 615.95 L967.2 615.87 L968.2 615.47 L969.2 616.12 L970.2 615.71 L971.2 615.93 L972.2 615.65 L973.2 615.08 L974.2 615.85 L975.2 616.30 L976.2 616.34 L977.2 616.33 L978.2 615.17 L979.2 615.70 L980.2 616.30 L981.2 616.16 L982.2 616.11 L983.2 616.50 L984.2 615.14 L985.2 616.46 L986.2 616.61 L987.2 615.76 L988.2 616.53 L989.2 616.70 L990.2 615.82 L991.2 616.23 L992.2 615.19 L993.2 615.88 L994.2 616.31 L995.2 615.93 L996.2 615.11 L997.2 614.79 L998.2 616.37 L999.2 616.39 L1000.2 615.41 L1001.2 616.47 L1002.2 615.30 L1003.2 615.51 L1004.2 615.32 L1005.2 616.12 L1006.2 616.10 L1007.2 615.44 L1008.2 616.37 L1009.2 615.77 L1010.2 616.35 L1011.2 616.61 L1012.2 615.57 L1013.2 616.52 L1014.2 615.16 L1015.2 615.71 L1016.2 615.40 L1017.2 616.23 L1018.2 616.61 L1019.2 616.12 L1020.2 615.81 L1021.2 615.41 L1022.2 616.08 L1023.2 615.17 L1024.2 615.55 L1025.2 615.04 L1026.2 615.41 L1027.2 615.03 L1028.2 614.67 L1029.2 615.37 L1030.2 615.83 L1031.2 615.50 L1032.2 615.68 L1033.2 615.00 L1034.2 615.15 L1035.2 614.78 L1036.2 615.01 L1037.2 615.10 L1038.2 616.36 L1039.2 616.39 L1040.2 615.46 L1041.3 616.55 L1042.3 615.97 L1043.3 616.52 L1044.3 616.62 L1045.3 614.47 L1046.3 611.51 L1047.3 615.44 L1048.3 615.92 L1049.3 615.25 L1050.3 614.72 L1051.3 612.30 L1052.3 615.12 L1053.3 615.72 L1054.3 616.31 L1055.3 615.36 L1056.3 613.48 L1057.3 614.14 L1058.3 615.89 L1059.3 615.31 L1060.3 614.63 L1061.3 614.20 L1062.3 614.69 L1063.3 615.72 L1064.3 615.54 L1065.3 615.54 L1066.3 615.24 L1067.3 613.56 L1068.3 614.23 L1069.3 615.60 L1070.3 614.77 L1071.3 614.63 L1072.3 612.88 L1073.3 615.17 L1074.3 615.35 L1075.3 614.81 L1076.3 612.15 L1077.3 614.02 L1078.3 615.16 L1079.3 615.55 L1080.3 615.43 L1081.3 614.88 L1082.3 612.97 L1083.3 614.22 L1084.3 615.44 L1085.3 615.14 L1086.3 614.13 L1087.3 613.27 L1088.3 613.90 L1089.3 614.50 L1090.3 615.14 L1091.3 613.90 L1092.3 613.71 L1093.3 615.06 L1094.3 615.63 L1095.3 615.20 L1096.3 614.48 L1097.3 613.32 L1098.3 614.28 L1099.3 615.22 L1100.3 615.26 L1101.3 612.42 L1102.3 612.91 L1103.3 615.26 L1104.3 614.83 L1105.3 612.88 L1106.3 612.71 L1107.3 614.79 L1108.3 614.89 L1109.3 615.39 L1110.3 613.18 L1111.3 613.27 L1112.3 615.32 L1113.3 614.64 L1114.3 614.55 L1115.3 615.18 L1116.3 612.58 L1117.3 610.94 L1118.3 613.24 L1119.3 613.21 L1120.3 613.68 L1121.4 613.80 L1122.4 612.89 L1123.4 614.16 L1124.4 615.02 L1125.4 614.48 L1126.4 610.31 L1127.4 613.59 L1128.4 614.71 L1129.4 614.42 L1130.4 614.08 L1131.4 612.70 L1132.4 612.50 L1133.4 613.89 L1134.4 614.40 L1135.4 614.40 L1136.4 613.00 L1137.4 613.31 L1138.4 614.79 L1139.4 613.46 L1140.4 613.57 L1141.4 612.47 L1142.4 612.14 L1143.4 613.95 L1144.4 613.40 L1145.4 612.03 L1146.4 612.61 L1147.4 613.29 L1148.4 613.07 L1149.4 612.98 L1150.4 612.12 L1151.4 611.72 L1152.4 613.28 L1153.4 614.10 L1154.4 613.49 L1155.4 613.66 L1156.4 612.09 L1157.4 611.76 L1158.4 612.48 L1159.4 612.43 L1160.4 612.82 L1161.4 611.58 L1162.4 611.95 L1163.4 613.78 L1164.4 613.68 L1165.4 613.90 L1166.4 611.03 L1167.4 613.17 L1168.4 613.95 L1169.4 613.66 L1170.4 612.91 L1171.4 612.20 L1172.4 611.59 L1173.4 612.41 L1174.4 612.32 L1175.4 612.73 L1176.4 612.08 L1177.4 611.91 L1178.4 611.93 L1179.4 612.41 L1180.4 613.04 L1181.4 613.48 L1182.4 611.33 L1183.4 612.84 L1184.4 612.59 L1185.4 612.55 L1186.4 611.39 L1187.4 609.36 L1188.4 611.42 L1189.4 611.98 L1190.4 613.05 L1191.4 611.62 L1192.4 609.41 L1193.4 611.97 L1194.4 612.87 L1195.4 612.51 L1196.4 610.82 L1197.4 609.41 L1198.4 612.24 L1199.4 612.13 L1200.5 611.90 L1201.5 611.52 L1202.5 611.47 L1203.5 610.07 L1204.5 612.89 L1205.5 612.90 L1206.5 611.85 L1207.5 609.97 L1208.5 611.14 L1209.5 612.68 L1210.5 611.62 L1211.5 612.01 L1212.5 610.79 L1213.5 610.58 L1214.5 612.75 L1215.5 611.91 L1216.5 612.51 L1217.5 610.20 L1218.5 611.03 L1219.5 612.32 L1220.5 612.66 L1221.5 613.05 L1222.5 612.73 L1223.5 610.51 L1224.5 610.05 L1225.5 611.68 L1226.5 611.63 L1227.5 611.45 L1228.5 609.76 L1229.5 610.06 L1230.5 612.01 L1231.5 611.01 L1232.5 609.92 L1233.5 608.52 L1234.5 610.91 L1235.5 611.62 L1236.5 611.80 L1237.5 611.37 L1238.5 609.95 L1239.5 609.44 L1240.5 611.24 L1241.5 611.43 L1242.5 610.11 L1243.5 609.46 L1244.5 610.88 L1245.5 611.29 L1246.5 611.07 L1247.5 612.20 L1248.5 611.18 L1249.5 609.75 L1250.5 610.49 L1251.5 610.56 L1252.5 610.55 L1253.5 610.11 L1254.5 610.89 L1255.5 611.61 L1256.5 610.68 L1257.5 611.35 L1258.5 609.23 L1259.5 610.78 L1260.5 611.67 L1261.5 610.74 L1262.5 611.44 L1263.5 609.92 L1264.5 609.25 L1265.5 611.43 L1266.5 610.52 L1267.5 610.37 L1268.5 608.77 L1269.5 610.65 L1270.5 610.76 L1271.5 611.03 L1272.5 609.88 L1273.5 609.81 L1274.5 611.36 L1275.5 610.94 L1276.5 610.55 L1277.5 610.60 L1278.5 608.19 L1279.5 609.19 L1280.6 610.62 L1281.6 610.82 L1282.6 610.06 L1283.6 608.36 L1284.6 609.73 L1285.6 609.64 L1286.6 610.42 L1287.6 611.05 L1288.6 608.75 L1289.6 609.48 L1290.6 609.96 L1291.6 609.61 L1292.6 609.86 L1293.6 609.08 L1294.6 607.54 L1295.6 610.12 L1296.6 609.98 L1297.6 609.72 L1298.6 608.86 L1299.6 609.07 L1300.6 609.44 L1301.6 609.29 L1302.6 609.03 L1303.6 607.29 L1304.6 610.46 L1305.6 609.65 L1306.6 609.71 L1307.6 609.19 L1308.6 608.85 L1309.6 607.38 L1310.6 609.05 L1311.6 608.81 L1312.6 609.78 L1313.6 608.84 L1314.6 609.66 L1315.6 609.81 L1316.6 609.56 L1317.6 609.20 L1318.6 607.38 L1319.6 609.41 L1320.6 609.96 L1321.6 609.02 L1322.6 609.15 L1323.6 608.58 L1324.6 608.49 L1325.6 609.62 L1326.6 610.37 L1327.6 610.10 L1328.6 609.02 L1329.6 608.16 L1330.6 608.77 L1331.6 609.41 L1332.6 609.44 L1333.6 609.09 L1334.6 607.75 L1335.6 607.15 L1336.6 610.20 L1337.6 608.98 L1338.6 609.05 L1339.6 608.26 L1340.6 606.70 L1341.6 608.16 L1342.6 609.02 L1343.6 609.61 L1344.6 608.07 L1345.6 607.23 L1346.6 609.52 L1347.6 609.19 L1348.6 608.54 L1349.6 607.93 L1350.6 608.54 L1351.6 608.56 L1352.6 609.50 L1353.6 608.72 L1354.6 608.48 L1355.6 607.92 L1356.6 607.99 L1357.6 608.86 L1358.6 609.59 L1359.6 608.55 L1360.7 606.73 L1361.7 608.20 L1362.7 609.23 L1363.7 609.12 L1364.7 607.04 L1365.7 605.60 L1366.7 608.30 L1367.7 608.49 L1368.7 608.93 L1369.7 605.45 L1370.7 607.21 L1371.7 608.22 L1372.7 608.27 L1373.7 608.51 L1374.7 607.78 L1375.7 604.43 L1376.7 608.14 L1377.7 607.59 L1378.7 608.54 L1379.7 606.20 L1380.7 608.10 L1381.7 608.44 L1382.7 609.16 L1383.7 606.97 L1384.7 607.51 L1385.7 608.37 L1386.7 608.15 L1387.7 607.97 L1388.7 606.43 L1389.7 605.37 L1390.7 608.27 L1391.7 607.38 L1392.7 607.37 L1393.7 607.64 L1394.7 605.51 L1395.7 606.95 L1396.7 607.87 L1397.7 607.82 L1398.7 608.08 L1399.7 606.72 L1400.7 607.21 L1401.7 608.92 L1402.7 608.57 L1403.7 608.45 L1404.7 607.15 L1405.7 606.23 L1406.7 608.40 L1407.7 608.01 L1408.7 607.28 L1409.7 607.04 L1410.7 607.83 L1411.7 608.22 L1412.7 607.28 L1413.7 604.96 L1414.7 604.34 L1415.7 607.25 L1416.7 607.12 L1417.7 606.56 L1418.7 604.01 L1419.7 607.60 L1420.7 607.86 L1421.7 607.29 L1422.7 607.30 L1423.7 606.70 L1424.7 606.11 L1425.7 607.80 L1426.7 607.26 L1427.7 607.91 L1428.7 605.51 L1429.7 604.84 L1430.7 607.65 L1431.7 607.66 L1432.7 606.67 L1433.7 605.04 L1434.7 605.01 L1435.7 606.95 L1436.7 606.36 L1437.7 606.21 L1438.7 605.56 L1439.8 607.31 L1440.8 607.53 L1441.8 607.52 L1442.8 606.92 L1443.8 606.31 L1444.8 606.48 L1445.8 606.21 L1446.8 606.95 L1447.8 606.59 L1448.8 604.03 L1449.8 606.32 L1450.8 606.94 L1451.8 607.04 L1452.8 606.33 L1453.8 605.34 L1454.8 606.69 L1455.8 607.04 L1456.8 606.42 L1457.8 605.36 L1458.8 605.86 L1459.8 605.81 L1460.8 605.67 L1461.8 606.33 L1462.8 603.14 L1463.8 604.94 L1464.8 607.13 L1465.8 606.17 L1466.8 607.37 L1467.8 604.42 L1468.8 605.73 L1469.8 606.99 L1470.8 606.40 L1471.8 605.84 L1472.8 604.11 L1473.8 604.55 L1474.8 606.41 L1475.8 605.32 L1476.8 604.97 L1477.8 604.59 L1478.8 604.77 L1479.8 606.03 L1480.8 605.35 L1481.8 606.18 L1482.8 603.58 L1483.8 605.96 L1484.8 606.22 L1485.8 605.78 L1486.8 606.03 L1487.8 604.44 L1488.8 605.48 L1489.8 606.10 L1490.8 606.29 L1491.8 604.61 L1492.8 603.61 L1493.8 606.33 L1494.8 605.83 L1495.8 606.21 L1496.8 604.50 L1497.8 604.35 L1498.8 606.05 L1499.8 605.43 L1500.8 606.38 L1501.8 604.22 L1502.8 604.00 L1503.8 606.59 L1504.8 605.09 L1505.8 604.49 L1506.8 602.64 L1507.8 605.43 L1508.8 606.39 L1509.8 605.81 L1510.8 606.17 L1511.8 604.99 L1512.8 603.46 L1513.8 604.92 L1514.8 605.22 L1515.8 604.34 L1516.8 603.88 L1517.8 602.58 L1518.8 604.46 L1519.9 604.97 L1520.9 605.23 L1521.9 604.71 L1522.9 604.50 L1523.9 604.95 L1524.9 604.74 L1525.9 604.43 L1526.9 603.63 L1527.9 603.46 L1528.9 604.89 L1529.9 604.91 L1530.9 604.63 L1531.9 604.68 L1532.9 602.85 L1533.9 605.35 L1534.9 604.51 L1535.9 604.20 L1536.9 603.69 L1537.9 604.41 L1538.9 605.02 L1539.9 604.54 L1540.9 604.95 L1541.9 605.14 L1542.9 602.91 L1543.9 603.92 L1544.9 604.95 L1545.9 603.92 L1546.9 602.47 L1547.9 602.82 L1548.9 604.66 L1549.9 604.69 L1550.9 602.88 L1551.9 600.77 L1552.9 604.74 L1553.9 605.31 L1554.9 605.08 L1555.9 602.94 L1556.9 602.93 L1557.9 603.93 L1558.9 604.61" fill="none" stroke="#1b3a5c" stroke-width="1"/><path d="M842.0 694.90 L843.0 696.13 L844.0 696.23 L845.0 695.33 L846.0 694.98 L847.0 694.82 L848.0 695.17 L849.0 695.03 L850.0 695.36 L851.0 694.84 L852.0 695.98 L853.0 694.90 L854.0 694.66 L855.0 694.71 L856.0 695.14 L857.0 695.74 L858.0 695.73 L859.0 694.69 L860.0 696.00 L861.0 695.38 L862.0 696.28 L863.0 696.14 L864.0 695.51 L865.0 695.61 L866.0 694.90 L867.0 695.71 L868.0 695.83 L869.0 695.48 L870.0 695.22 L871.0 696.02 L872.0 695.80 L873.0 695.51 L874.0 694.75 L875.0 695.87 L876.0 694.99 L877.0 695.51 L878.0 691.53 L879.0 685.16 L880.0 683.53 L881.0 690.81 L882.1 696.71 L883.1 696.77 L884.1 695.21 L885.1 694.94 L886.1 695.45 L887.1 694.59 L888.1 695.48 L889.1 695.35 L890.1 694.91 L891.1 695.15 L892.1 696.35 L893.1 695.37 L894.1 696.01 L895.1 695.74 L896.1 696.11 L897.1 695.94 L898.1 696.11 L899.1 695.04 L900.1 696.08 L901.1 695.70 L902.1 695.69 L903.1 694.66 L904.1 696.37 L905.1 695.13 L906.1 696.04 L907.1 695.62 L908.1 695.17 L909.1 696.07 L910.1 696.11 L911.1 695.39 L912.1 694.80 L913.1 696.28 L914.1 695.55 L915.1 695.75 L916.1 695.28 L917.1 695.10 L918.1 695.05 L919.1 695.62 L920.1 695.64 L921.1 695.19 L922.1 695.67 L923.1 695.95 L924.1 694.84 L925.1 695.61 L926.1 695.64 L927.1 696.05 L928.1 694.95 L929.1 693.94 L930.1 688.41 L931.1 690.27 L932.1 695.13 L933.1 695.39 L934.1 696.30 L935.1 695.84 L936.1 695.30 L937.1 696.09 L938.1 694.86 L939.1 695.37 L940.1 696.15 L941.1 695.08 L942.1 695.14 L943.1 696.40 L944.1 695.33 L945.1 694.87 L946.1 695.22 L947.1 695.61 L948.1 694.68 L949.1 694.72 L950.1 695.34 L951.1 696.01 L952.1 696.10 L953.1 696.07 L954.1 696.01 L955.1 695.69 L956.1 696.09 L957.1 695.73 L958.1 695.08 L959.1 695.30 L960.1 694.80 L961.1 696.12 L962.2 695.62 L963.2 696.27 L964.2 696.00 L965.2 696.09 L966.2 695.15 L967.2 695.43 L968.2 695.70 L969.2 695.85 L970.2 694.79 L971.2 695.54 L972.2 696.22 L973.2 694.93 L974.2 695.86 L975.2 696.54 L976.2 696.14 L977.2 695.17 L978.2 695.52 L979.2 695.51 L980.2 694.77 L981.2 695.97 L982.2 695.02 L983.2 695.85 L984.2 695.57 L985.2 695.51 L986.2 695.29 L987.2 695.78 L988.2 695.16 L989.2 695.40 L990.2 695.36 L991.2 695.95 L992.2 695.65 L993.2 695.54 L994.2 695.51 L995.2 695.83 L996.2 695.32 L997.2 695.43 L998.2 695.21 L999.2 695.13 L1000.2 696.14 L1001.2 695.68 L1002.2 696.14 L1003.2 695.50 L1004.2 695.92 L1005.2 695.66 L1006.2 696.26 L1007.2 695.71 L1008.2 696.24 L1009.2 695.97 L1010.2 695.53 L1011.2 695.51 L1012.2 695.92 L1013.2 696.45 L1014.2 696.12 L1015.2 695.28 L1016.2 695.38 L1017.2 695.55 L1018.2 695.86 L1019.2 695.88 L1020.2 695.77 L1021.2 695.96 L1022.2 694.80 L1023.2 694.76 L1024.2 695.61 L1025.2 694.58 L1026.2 695.66 L1027.2 696.20 L1028.2 694.97 L1029.2 695.84 L1030.2 695.17 L1031.2 695.84 L1032.2 696.17 L1033.2 695.70 L1034.2 695.75 L1035.2 696.51 L1036.2 695.83 L1037.2 694.97 L1038.2 695.79 L1039.2 695.19 L1040.2 696.25 L1041.3 696.13 L1042.3 695.89 L1043.3 694.94 L1044.3 694.75 L1045.3 694.60 L1046.3 692.21 L1047.3 694.54 L1048.3 696.49 L1049.3 695.70 L1050.3 693.46 L1051.3 689.80 L1052.3 694.15 L1053.3 695.81 L1054.3 695.34 L1055.3 694.24 L1056.3 691.91 L1057.3 694.06 L1058.3 696.19 L1059.3 695.80 L1060.3 695.01 L1061.3 691.60 L1062.3 693.35 L1063.3 694.83 L1064.3 696.03 L1065.3 695.60 L1066.3 692.95 L1067.3 693.05 L1068.3 695.00 L1069.3 695.36 L1070.3 696.08 L1071.3 693.33 L1072.3 691.62 L1073.3 694.63 L1074.3 695.37 L1075.3 695.77 L1076.3 693.29 L1077.3 692.40 L1078.3 695.14 L1079.3 695.84 L1080.3 694.97 L1081.3 692.76 L1082.3 692.81 L1083.3 695.38 L1084.3 695.55 L1085.3 695.15 L1086.3 695.16 L1087.3 691.19 L1088.3 693.89 L1089.3 694.83 L1090.3 695.41 L1091.3 693.38 L1092.3 694.02 L1093.3 695.35 L1094.3 695.33 L1095.3 694.33 L1096.3 694.71 L1097.3 691.68 L1098.3 694.51 L1099.3 694.45 L1100.3 694.79 L1101.3 693.04 L1102.3 692.97 L1103.3 694.90 L1104.3 694.96 L1105.3 693.80 L1106.3 691.67 L1107.3 693.54 L1108.3 694.03 L1109.3 694.74 L1110.3 692.79 L1111.3 689.64 L1112.3 693.85 L1113.3 694.45 L1114.3 694.05 L1115.3 693.96 L1116.3 693.25 L1117.3 694.18 L1118.3 694.27 L1119.3 694.54 L1120.3 694.30 L1121.4 692.63 L1122.4 693.65 L1123.4 695.64 L1124.4 695.34 L1125.4 694.87 L1126.4 693.25 L1127.4 691.44 L1128.4 694.25 L1129.4 695.18 L1130.4 694.84 L1131.4 691.96 L1132.4 693.93 L1133.4 694.71 L1134.4 694.05 L1135.4 693.64 L1136.4 693.20 L1137.4 692.21 L1138.4 695.00 L1139.4 695.06 L1140.4 693.98 L1141.4 692.48 L1142.4 694.37 L1143.4 694.78 L1144.4 694.94 L1145.4 691.96 L1146.4 691.37 L1147.4 693.68 L1148.4 695.13 L1149.4 694.30 L1150.4 692.33 L1151.4 691.54 L1152.4 693.92 L1153.4 695.09 L1154.4 694.28 L1155.4 694.66 L1156.4 692.52 L1157.4 694.34 L1158.4 695.25 L1159.4 693.69 L1160.4 693.29 L1161.4 691.06 L1162.4 691.67 L1163.4 694.72 L1164.4 693.55 L1165.4 694.36 L1166.4 693.24 L1167.4 692.72 L1168.4 693.80 L1169.4 694.45 L1170.4 693.32 L1171.4 693.19 L1172.4 690.14 L1173.4 692.85 L1174.4 693.48 L1175.4 694.39 L1176.4 692.96 L1177.4 691.53 L1178.4 693.20 L1179.4 694.23 L1180.4 694.03 L1181.4 693.20 L1182.4 689.45 L1183.4 692.14 L1184.4 693.41 L1185.4 694.24 L1186.4 692.91 L1187.4 691.77 L1188.4 693.43 L1189.4 693.85 L1190.4 693.59 L1191.4 692.48 L1192.4 691.47 L1193.4 693.85 L1194.4 693.59 L1195.4 693.21 L1196.4 693.20 L1197.4 691.16 L1198.4 692.62 L1199.4 693.09 L1200.5 694.61 L1201.5 693.18 L1202.5 691.05 L1203.5 692.16 L1204.5 694.64 L1205.5 693.26 L1206.5 693.74 L1207.5 692.89 L1208.5 692.71 L1209.5 693.33 L1210.5 693.66 L1211.5 692.76 L1212.5 690.34 L1213.5 691.35 L1214.5 692.69 L1215.5 694.26 L1216.5 693.99 L1217.5 691.69 L1218.5 690.73 L1219.5 693.80 L1220.5 692.82 L1221.5 694.18 L1222.5 691.59 L1223.5 690.60 L1224.5 693.25 L1225.5 693.49 L1226.5 693.30 L1227.5 692.15 L1228.5 691.07 L1229.5 692.45 L1230.5 694.11 L1231.5 694.10 L1232.5 692.24 L1233.5 690.70 L1234.5 692.76 L1235.5 692.74 L1236.5 693.85 L1237.5 692.72 L1238.5 689.74 L1239.5 691.10 L1240.5 692.88 L1241.5 694.19 L1242.5 693.54 L1243.5 689.75 L1244.5 689.67 L1245.5 694.12 L1246.5 693.57 L1247.5 693.33 L1248.5 692.63 L1249.5 692.29 L1250.5 693.42 L1251.5 693.77 L1252.5 694.21 L1253.5 691.04 L1254.5 690.51 L1255.5 692.73 L1256.5 692.44 L1257.5 692.55 L1258.5 689.09 L1259.5 691.89 L1260.5 693.74 L1261.5 694.09 L1262.5 692.51 L1263.5 691.07 L1264.5 692.15 L1265.5 694.05 L1266.5 692.53 L1267.5 692.09 L1268.5 690.17 L1269.5 691.82 L1270.5 692.34 L1271.5 692.59 L1272.5 691.65 L1273.5 691.51 L1274.5 691.87 L1275.5 693.38 L1276.5 692.80 L1277.5 692.21 L1278.5 690.13 L1279.5 692.51 L1280.6 692.85 L1281.6 692.32 L1282.6 693.07 L1283.6 690.52 L1284.6 691.18 L1285.6 693.76 L1286.6 693.48 L1287.6 692.41 L1288.6 688.93 L1289.6 691.11 L1290.6 693.34 L1291.6 693.32 L1292.6 693.24 L1293.6 691.70 L1294.6 691.79 L1295.6 693.45 L1296.6 692.51 L1297.6 692.64 L1298.6 689.18 L1299.6 691.97 L1300.6 692.45 L1301.6 692.52 L1302.6 691.54 L1303.6 689.80 L1304.6 692.38 L1305.6 692.73 L1306.6 692.92 L1307.6 692.17 L1308.6 690.85 L1309.6 690.26 L1310.6 693.36 L1311.6 692.01 L1312.6 692.18 L1313.6 690.00 L1314.6 691.15 L1315.6 692.66 L1316.6 692.36 L1317.6 692.51 L1318.6 691.70 L1319.6 691.00 L1320.6 693.29 L1321.6 692.02 L1322.6 693.17 L1323.6 688.94 L1324.6 687.66 L1325.6 692.12 L1326.6 692.65 L1327.6 692.03 L1328.6 690.84 L1329.6 689.78 L1330.6 690.62 L1331.6 692.93 L1332.6 692.41 L1333.6 692.49 L1334.6 690.69 L1335.6 690.16 L1336.6 692.11 L1337.6 692.14 L1338.6 691.95 L1339.6 690.29 L1340.6 689.65 L1341.6 691.64 L1342.6 692.30 L1343.6 692.79 L1344.6 690.50 L1345.6 689.39 L1346.6 692.43 L1347.6 692.71 L1348.6 692.15 L1349.6 689.86 L1350.6 688.72 L1351.6 691.78 L1352.6 692.21 L1353.6 691.64 L1354.6 689.73 L1355.6 689.27 L1356.6 691.38 L1357.6 691.50 L1358.6 691.70 L1359.6 691.27 L1360.7 689.55 L1361.7 691.39 L1362.7 692.48 L1363.7 692.76 L1364.7 691.17 L1365.7 687.94 L1366.7 691.20 L1367.7 692.33 L1368.7 692.44 L1369.7 690.41 L1370.7 690.36 L1371.7 691.92 L1372.7 692.05 L1373.7 691.26 L1374.7 691.27 L1375.7 689.68 L1376.7 691.88 L1377.7 692.04 L1378.7 691.21 L1379.7 689.09 L1380.7 690.14 L1381.7 691.88 L1382.7 691.58 L1383.7 691.45 L1384.7 689.32 L1385.7 691.60 L1386.7 692.42 L1387.7 692.23 L1388.7 691.50 L1389.7 688.47 L1390.7 690.02 L1391.7 690.95 L1392.7 691.71 L1393.7 691.29 L1394.7 690.66 L1395.7 688.61 L1396.7 691.29 L1397.7 692.14 L1398.7 691.60 L1399.7 688.78 L1400.7 688.79 L1401.7 692.16 L1402.7 690.93 L1403.7 691.07 L1404.7 687.57 L1405.7 689.71 L1406.7 691.71 L1407.7 692.53 L1408.7 688.66 L1409.7 687.47 L1410.7 690.13 L1411.7 690.69 L1412.7 691.92 L1413.7 689.83 L1414.7 690.94 L1415.7 692.16 L1416.7 691.61 L1417.7 691.03 L1418.7 689.56 L1419.7 690.67 L1420.7 691.17 L1421.7 690.96 L1422.7 691.05 L1423.7 687.30 L1424.7 687.70 L1425.7 691.64 L1426.7 691.94 L1427.7 692.39 L1428.7 689.11 L1429.7 689.11 L1430.7 690.44 L1431.7 692.12 L1432.7 691.41 L1433.7 688.30 L1434.7 690.42 L1435.7 690.71 L1436.7 690.79 L1437.7 690.79 L1438.7 689.88 L1439.8 690.78 L1440.8 690.31 L1441.8 692.11 L1442.8 690.62 L1443.8 687.21 L1444.8 689.28 L1445.8 690.91 L1446.8 690.46 L1447.8 688.62 L1448.8 689.37 L1449.8 690.55 L1450.8 690.51 L1451.8 690.46 L1452.8 686.09 L1453.8 687.84 L1454.8 691.10 L1455.8 690.77 L1456.8 689.77 L1457.8 685.91 L1458.8 689.83 L1459.8 690.55 L1460.8 691.86 L1461.8 691.23 L1462.8 688.72 L1463.8 687.98 L1464.8 691.73 L1465.8 691.77 L1466.8 691.47 L1467.8 689.81 L1468.8 689.40 L1469.8 691.27 L1470.8 690.92 L1471.8 690.51 L1472.8 688.63 L1473.8 689.10 L1474.8 691.40 L1475.8 690.74 L1476.8 689.10 L1477.8 687.78 L1478.8 689.91 L1479.8 690.14 L1480.8 690.21 L1481.8 691.18 L1482.8 689.47 L1483.8 688.53 L1484.8 690.02 L1485.8 690.88 L1486.8 689.76 L1487.8 687.02 L1488.8 690.67 L1489.8 691.46 L1490.8 691.19 L1491.8 688.19 L1492.8 687.53 L1493.8 689.31 L1494.8 690.43 L1495.8 689.88 L1496.8 688.71 L1497.8 689.21 L1498.8 690.64 L1499.8 690.92 L1500.8 690.28 L1501.8 689.49 L1502.8 688.42 L1503.8 689.49 L1504.8 690.17 L1505.8 690.11 L1506.8 688.53 L1507.8 689.00 L1508.8 691.18 L1509.8 691.19 L1510.8 689.82 L1511.8 686.55 L1512.8 688.02 L1513.8 689.58 L1514.8 690.78 L1515.8 691.09 L1516.8 689.19 L1517.8 689.04 L1518.8 690.43 L1519.9 689.82 L1520.9 689.82 L1521.9 689.43 L1522.9 687.83 L1523.9 689.09 L1524.9 690.76 L1525.9 690.33 L1526.9 688.68 L1527.9 687.91 L1528.9 690.66 L1529.9 689.92 L1530.9 690.32 L1531.9 688.02 L1532.9 688.08 L1533.9 689.47 L1534.9 689.78 L1535.9 689.43 L1536.9 687.38 L1537.9 688.97 L1538.9 691.00 L1539.9 689.31 L1540.9 689.17 L1541.9 688.85 L1542.9 686.93 L1543.9 689.99 L1544.9 690.16 L1545.9 689.23 L1546.9 687.85 L1547.9 689.19 L1548.9 690.02 L1549.9 690.34 L1550.9 688.75 L1551.9 688.02 L1552.9 689.89 L1553.9 689.51 L1554.9 689.04 L1555.9 686.52 L1556.9 687.81 L1557.9 689.13 L1558.9 690.28" fill="none" stroke="#e0c21e" stroke-width="1"/><rect x="842.0" y="597.87" width="716.9" height="1.5" fill="#b8461f"/><text x="837.00" y="735.20" text-anchor="end" style="font-size:12.7px;fill:#ccccdc;stroke:#ccccdc;stroke-width:0.35px" >0 B</text><text x="837.00" y="718.16" text-anchor="end" style="font-size:12.7px;fill:#ccccdc;stroke:#ccccdc;stroke-width:0.35px" >1 GiB</text><text x="837.00" y="701.12" text-anchor="end" style="font-size:12.7px;fill:#ccccdc;stroke:#ccccdc;stroke-width:0.35px" >2 GiB</text><text x="837.00" y="684.08" text-anchor="end" style="font-size:12.7px;fill:#ccccdc;stroke:#ccccdc;stroke-width:0.35px" >3 GiB</text><text x="837.00" y="667.04" text-anchor="end" style="font-size:12.7px;fill:#ccccdc;stroke:#ccccdc;stroke-width:0.35px" >4 GiB</text><text x="837.00" y="650.00" text-anchor="end" style="font-size:12.7px;fill:#ccccdc;stroke:#ccccdc;stroke-width:0.35px" >5 GiB</text><text x="837.00" y="632.96" text-anchor="end" style="font-size:12.7px;fill:#ccccdc;stroke:#ccccdc;stroke-width:0.35px" >6 GiB</text><text x="837.00" y="615.92" text-anchor="end" style="font-size:12.7px;fill:#ccccdc;stroke:#ccccdc;stroke-width:0.35px" >7 GiB</text><text x="837.00" y="598.88" text-anchor="end" style="font-size:12.7px;fill:#ccccdc;stroke:#ccccdc;stroke-width:0.35px" >8 GiB</text><text x="861.80" y="749.80" text-anchor="middle" style="font-size:12.7px;fill:#ccccdc;stroke:#ccccdc;stroke-width:0.35px" >16:00</text><text x="921.60" y="749.80" text-anchor="middle" style="font-size:12.7px;fill:#ccccdc;stroke:#ccccdc;stroke-width:0.35px" >18:00</text><text x="981.40" y="749.80" text-anchor="middle" style="font-size:12.7px;fill:#ccccdc;stroke:#ccccdc;stroke-width:0.35px" >20:00</text><text x="1041.20" y="749.80" text-anchor="middle" style="font-size:12.7px;fill:#ccccdc;stroke:#ccccdc;stroke-width:0.35px" >22:00</text><text x="1101.00" y="749.80" text-anchor="middle" style="font-size:12.7px;fill:#ccccdc;stroke:#ccccdc;stroke-width:0.35px" >00:00</text><text x="1160.80" y="749.80" text-anchor="middle" style="font-size:12.7px;fill:#ccccdc;stroke:#ccccdc;stroke-width:0.35px" >02:00</text><text x="1220.60" y="749.80" text-anchor="middle" style="font-size:12.7px;fill:#ccccdc;stroke:#ccccdc;stroke-width:0.35px" >04:00</text><text x="1280.40" y="749.80" text-anchor="middle" style="font-size:12.7px;fill:#ccccdc;stroke:#ccccdc;stroke-width:0.35px" >06:00</text><text x="1340.20" y="749.80" text-anchor="middle" style="font-size:12.7px;fill:#ccccdc;stroke:#ccccdc;stroke-width:0.35px" >08:00</text><text x="1400.00" y="749.80" text-anchor="middle" style="font-size:12.7px;fill:#ccccdc;stroke:#ccccdc;stroke-width:0.35px" >10:00</text><text x="1459.80" y="749.80" text-anchor="middle" style="font-size:12.7px;fill:#ccccdc;stroke:#ccccdc;stroke-width:0.35px" >12:00</text><text x="1519.60" y="749.80" text-anchor="middle" style="font-size:12.7px;fill:#ccccdc;stroke:#ccccdc;stroke-width:0.35px" >14:00</text><rect x="805.6" y="769" width="14" height="4" rx="2" fill="#e0f9d7"/><text x="828.50" y="774.10" text-anchor="start" style="font-size:12.7px;fill:#ccccdc;stroke:#ccccdc;stroke-width:0.35px" >RAM Total</text><rect x="897.1" y="769" width="14" height="4" rx="2" fill="#fade2a"/><text x="919.00" y="774.10" text-anchor="start" style="font-size:12.7px;fill:#ccccdc;stroke:#ccccdc;stroke-width:0.35px" >RAM Used</text><rect x="990.5" y="769" width="14" height="4" rx="2" fill="#052b51"/><text x="1012.30" y="774.10" text-anchor="start" style="font-size:12.7px;fill:#ccccdc;stroke:#ccccdc;stroke-width:0.35px" >RAM Cache + Buffer</text><rect x="1140.2" y="769" width="14" height="4" rx="2" fill="#7eb26d"/><text x="1162.00" y="774.10" text-anchor="start" style="font-size:12.7px;fill:#ccccdc;stroke:#ccccdc;stroke-width:0.35px" >RAM Free</text><rect x="1228.3" y="769" width="14" height="4" rx="2" fill="#c4162a"/><text x="1250.40" y="774.10" text-anchor="start" style="font-size:12.7px;fill:#ccccdc;stroke:#ccccdc;stroke-width:0.35px" >SWAP Used</text><defs><linearGradient id="gth" x1="0" y1="0" x2="0" y2="1"><stop offset="0" stop-color="#36304a"/><stop offset="1" stop-color="#2b2a33"/></linearGradient></defs><path d="M1202 0 L1458.5 0 L1458.5 56.5 Q1458.5 64.5 1450.5 64.5 L1210 64.5 Q1202 64.5 1202 56.5 Z" fill="#ececec" stroke="#c8c8c8" stroke-width="0.8"/><rect x="1203" y="0" width="254.5" height="21.8" fill="url(#gth)"/><rect x="1285" y="20.6" width="90" height="1.2" fill="#8a8894" opacity="0.45"/><path d="M1218.4 46.9 A5.4 5.4 0 1 1 1227.8 46.9 Z" fill="none" stroke="#555" stroke-width="1.4" stroke-linejoin="round"/><path d="M1223 45.2 L1225.4 42" stroke="#555" stroke-width="1.5" stroke-linecap="round"/><text x="1238.80" y="47.00" text-anchor="start" style="font-size:11.9px;fill:#3a3a3a" >Использование памяти: 86,8 МБ</text></svg>
</body></html>
